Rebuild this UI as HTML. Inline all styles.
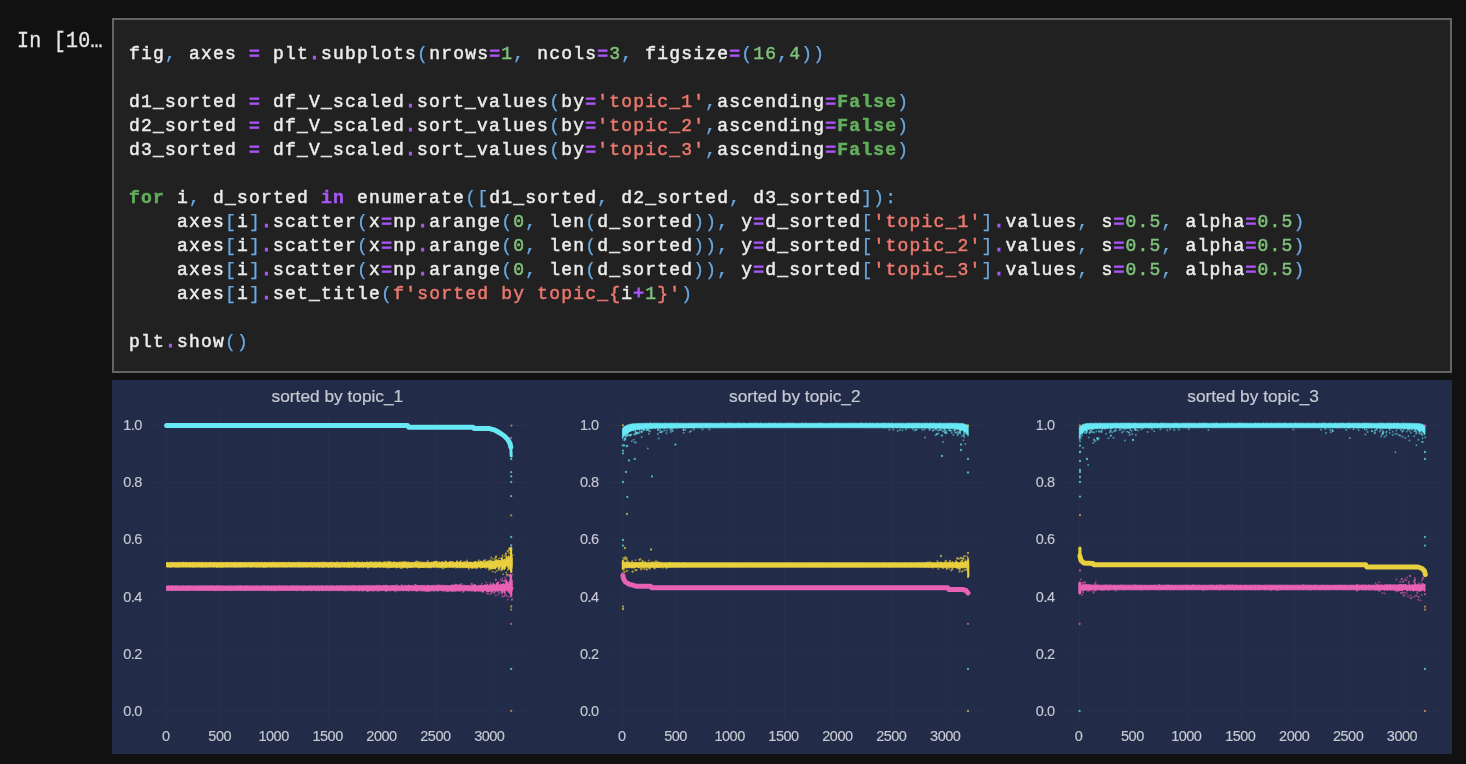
<!DOCTYPE html>
<html><head><meta charset="utf-8">
<style>
html,body{margin:0;padding:0;}
body{width:1466px;height:764px;overflow:hidden;background:#111111;position:relative;}
.prompt{position:absolute;left:17px;top:30px;font:20px/24px "Liberation Mono",monospace;color:#e6e6e6;white-space:pre;transform:scaleY(1.12);transform-origin:0 17.3px;letter-spacing:0.25px;-webkit-text-stroke:0.3px currentColor;will-change:transform;}
.box{position:absolute;left:112px;top:18px;width:1336px;height:351px;border:2px solid #646464;background:#212121;}
.code{position:absolute;left:15px;top:22px;font:18px/24px "Liberation Mono",monospace;letter-spacing:1.2px;color:#ececec;white-space:pre;-webkit-text-stroke:0.5px currentColor;will-change:transform;}
.l{height:24px;}
i{font-style:normal;}
.o{color:#a855f7;-webkit-text-stroke:1px #a855f7;}
.p{color:#68abe6;-webkit-text-stroke:0.25px #68abe6;}
.n{color:#7fc27d;}
.s{color:#ec786e;}
.k{color:#62ad5e;font-weight:bold;}
.ko{color:#a855f7;font-weight:bold;}
.plot{position:absolute;left:112px;top:380px;width:1340px;height:374px;background:#222b47;will-change:transform;}
.plot svg{position:absolute;left:0;top:0;}
</style></head><body>
<div class="prompt">In [10…</div>
<div class="box"><div class="code"><div class="l">fig<i class="p">,</i> axes <i class="o">=</i> plt<i class="o">.</i>subplots<i class="p">(</i>nrows<i class="o">=</i><i class="n">1</i><i class="p">,</i> ncols<i class="o">=</i><i class="n">3</i><i class="p">,</i> figsize<i class="o">=</i><i class="p">(</i><i class="n">16</i><i class="p">,</i><i class="n">4</i><i class="p">)</i><i class="p">)</i></div><div class="l">&#8203;</div><div class="l">d1_sorted <i class="o">=</i> df_V_scaled<i class="o">.</i>sort_values<i class="p">(</i>by<i class="o">=</i><i class="s">&#x27;topic_1&#x27;</i><i class="p">,</i>ascending<i class="o">=</i><i class="k">False</i><i class="p">)</i></div><div class="l">d2_sorted <i class="o">=</i> df_V_scaled<i class="o">.</i>sort_values<i class="p">(</i>by<i class="o">=</i><i class="s">&#x27;topic_2&#x27;</i><i class="p">,</i>ascending<i class="o">=</i><i class="k">False</i><i class="p">)</i></div><div class="l">d3_sorted <i class="o">=</i> df_V_scaled<i class="o">.</i>sort_values<i class="p">(</i>by<i class="o">=</i><i class="s">&#x27;topic_3&#x27;</i><i class="p">,</i>ascending<i class="o">=</i><i class="k">False</i><i class="p">)</i></div><div class="l">&#8203;</div><div class="l"><i class="k">for</i> i<i class="p">,</i> d_sorted <i class="ko">in</i> enumerate<i class="p">(</i><i class="p">[</i>d1_sorted<i class="p">,</i> d2_sorted<i class="p">,</i> d3_sorted<i class="p">]</i><i class="p">)</i><i class="p">:</i></div><div class="l">    axes<i class="p">[</i>i<i class="p">]</i><i class="o">.</i>scatter<i class="p">(</i>x<i class="o">=</i>np<i class="o">.</i>arange<i class="p">(</i><i class="n">0</i><i class="p">,</i> len<i class="p">(</i>d_sorted<i class="p">)</i><i class="p">)</i><i class="p">,</i> y<i class="o">=</i>d_sorted<i class="p">[</i><i class="s">&#x27;topic_1&#x27;</i><i class="p">]</i><i class="o">.</i>values<i class="p">,</i> s<i class="o">=</i><i class="n">0.5</i><i class="p">,</i> alpha<i class="o">=</i><i class="n">0.5</i><i class="p">)</i></div><div class="l">    axes<i class="p">[</i>i<i class="p">]</i><i class="o">.</i>scatter<i class="p">(</i>x<i class="o">=</i>np<i class="o">.</i>arange<i class="p">(</i><i class="n">0</i><i class="p">,</i> len<i class="p">(</i>d_sorted<i class="p">)</i><i class="p">)</i><i class="p">,</i> y<i class="o">=</i>d_sorted<i class="p">[</i><i class="s">&#x27;topic_2&#x27;</i><i class="p">]</i><i class="o">.</i>values<i class="p">,</i> s<i class="o">=</i><i class="n">0.5</i><i class="p">,</i> alpha<i class="o">=</i><i class="n">0.5</i><i class="p">)</i></div><div class="l">    axes<i class="p">[</i>i<i class="p">]</i><i class="o">.</i>scatter<i class="p">(</i>x<i class="o">=</i>np<i class="o">.</i>arange<i class="p">(</i><i class="n">0</i><i class="p">,</i> len<i class="p">(</i>d_sorted<i class="p">)</i><i class="p">)</i><i class="p">,</i> y<i class="o">=</i>d_sorted<i class="p">[</i><i class="s">&#x27;topic_3&#x27;</i><i class="p">]</i><i class="o">.</i>values<i class="p">,</i> s<i class="o">=</i><i class="n">0.5</i><i class="p">,</i> alpha<i class="o">=</i><i class="n">0.5</i><i class="p">)</i></div><div class="l">    axes<i class="p">[</i>i<i class="p">]</i><i class="o">.</i>set_title<i class="p">(</i><i class="s">f&#x27;sorted by topic_{</i>i<i class="o">+</i><i class="n">1</i><i class="s">}&#x27;</i><i class="p">)</i></div><div class="l">&#8203;</div><div class="l">plt<i class="o">.</i>show<i class="p">(</i><i class="p">)</i></div></div></div>
<div class="plot"><svg width="1340" height="374" viewBox="112 380 1340 374"><path d="M166.6 411.2V725.4M220.5 411.2V725.4M274.4 411.2V725.4M328.4 411.2V725.4M382.3 411.2V725.4M436.2 411.2V725.4M490.1 411.2V725.4M149.3 711.1H530.0M149.3 654.0H530.0M149.3 596.9H530.0M149.3 539.7H530.0M149.3 482.6H530.0M149.3 425.5H530.0M622.5 411.2V725.4M676.4 411.2V725.4M730.4 411.2V725.4M784.3 411.2V725.4M838.2 411.2V725.4M892.1 411.2V725.4M946.0 411.2V725.4M605.2 711.1H985.9M605.2 654.0H985.9M605.2 596.9H985.9M605.2 539.7H985.9M605.2 482.6H985.9M605.2 425.5H985.9M1079.3 411.2V725.4M1133.2 411.2V725.4M1187.1 411.2V725.4M1241.1 411.2V725.4M1295.0 411.2V725.4M1348.9 411.2V725.4M1402.8 411.2V725.4M1062.0 711.1H1442.7M1062.0 654.0H1442.7M1062.0 596.9H1442.7M1062.0 539.7H1442.7M1062.0 482.6H1442.7M1062.0 425.5H1442.7" stroke="#29314f" stroke-width="1" fill="none"/><g font-family="Liberation Sans" font-size="14.5" letter-spacing="-0.5" fill="#c6c9d3" stroke="#c6c9d3" stroke-width="0.15"><text x="141.8" y="715.7" text-anchor="end">0.0</text><text x="141.8" y="658.6" text-anchor="end">0.2</text><text x="141.8" y="601.5" text-anchor="end">0.4</text><text x="141.8" y="544.3" text-anchor="end">0.6</text><text x="141.8" y="487.2" text-anchor="end">0.8</text><text x="141.8" y="430.1" text-anchor="end">1.0</text><text x="165.8" y="740.8" text-anchor="middle">0</text><text x="219.7" y="740.8" text-anchor="middle">500</text><text x="273.6" y="740.8" text-anchor="middle">1000</text><text x="327.6" y="740.8" text-anchor="middle">1500</text><text x="381.5" y="740.8" text-anchor="middle">2000</text><text x="435.4" y="740.8" text-anchor="middle">2500</text><text x="489.3" y="740.8" text-anchor="middle">3000</text><text x="598.7" y="715.7" text-anchor="end">0.0</text><text x="598.7" y="658.6" text-anchor="end">0.2</text><text x="598.7" y="601.5" text-anchor="end">0.4</text><text x="598.7" y="544.3" text-anchor="end">0.6</text><text x="598.7" y="487.2" text-anchor="end">0.8</text><text x="598.7" y="430.1" text-anchor="end">1.0</text><text x="621.7" y="740.8" text-anchor="middle">0</text><text x="675.6" y="740.8" text-anchor="middle">500</text><text x="729.6" y="740.8" text-anchor="middle">1000</text><text x="783.5" y="740.8" text-anchor="middle">1500</text><text x="837.4" y="740.8" text-anchor="middle">2000</text><text x="891.3" y="740.8" text-anchor="middle">2500</text><text x="945.2" y="740.8" text-anchor="middle">3000</text><text x="1054.5" y="715.7" text-anchor="end">0.0</text><text x="1054.5" y="658.6" text-anchor="end">0.2</text><text x="1054.5" y="601.5" text-anchor="end">0.4</text><text x="1054.5" y="544.3" text-anchor="end">0.6</text><text x="1054.5" y="487.2" text-anchor="end">0.8</text><text x="1054.5" y="430.1" text-anchor="end">1.0</text><text x="1078.5" y="740.8" text-anchor="middle">0</text><text x="1132.4" y="740.8" text-anchor="middle">500</text><text x="1186.3" y="740.8" text-anchor="middle">1000</text><text x="1240.3" y="740.8" text-anchor="middle">1500</text><text x="1294.2" y="740.8" text-anchor="middle">2000</text><text x="1348.1" y="740.8" text-anchor="middle">2500</text><text x="1402.0" y="740.8" text-anchor="middle">3000</text></g><g font-family="Liberation Sans" font-size="17.3" fill="#c6c9d3" stroke="#c6c9d3" stroke-width="0.2"><text x="337.4" y="401.6" text-anchor="middle">sorted by topic_1</text><text x="794.8" y="401.6" text-anchor="middle">sorted by topic_2</text><text x="1253.1" y="401.6" text-anchor="middle">sorted by topic_3</text></g><path d="M166.6 425.6 L407.6 425.6 L408.6 427.2 L473.0 427.2 L474.0 428.4 L489.5 428.6 L495.0 430.2 L499.6 432.8 L504.0 435.8 L507.8 439.5 L510.0 443.5 L510.8 447.0" stroke="#68e8f4" stroke-width="5.0" fill="none" stroke-linecap="round" stroke-linejoin="round" opacity="1"/><path d="M510.8 447.0 L511.2 456.0" stroke="#68e8f4" stroke-width="3" fill="none" stroke-linecap="round" stroke-linejoin="round" opacity="1"/><circle cx="511.2" cy="459.0" r="1.15" fill="#68e8f4" opacity="0.72"/><circle cx="511.2" cy="472.2" r="1.15" fill="#68e8f4" opacity="0.72"/><circle cx="511.2" cy="476.4" r="1.15" fill="#68e8f4" opacity="0.72"/><circle cx="511.2" cy="482.1" r="1.15" fill="#68e8f4" opacity="0.72"/><circle cx="511.2" cy="496.2" r="1.15" fill="#68e8f4" opacity="0.72"/><circle cx="511.2" cy="537.0" r="1.15" fill="#68e8f4" opacity="0.72"/><circle cx="511.2" cy="545.5" r="1.15" fill="#68e8f4" opacity="0.72"/><circle cx="511.2" cy="669.0" r="1.15" fill="#68e8f4" opacity="0.72"/><circle cx="511.5" cy="425.6" r="1.15" fill="#e6a85a" opacity="0.72"/><circle cx="511.2" cy="515.4" r="1.15" fill="#e6a85a" opacity="0.72"/><circle cx="511.2" cy="606.5" r="1.15" fill="#e6a85a" opacity="0.72"/><circle cx="511.2" cy="609.6" r="1.15" fill="#e6a85a" opacity="0.72"/><circle cx="511.2" cy="710.8" r="1.15" fill="#e6a85a" opacity="0.72"/><circle cx="511.2" cy="623.9" r="1.15" fill="#e862b4" opacity="0.72"/><circle cx="511.2" cy="438.0" r="1.15" fill="#e862b4" opacity="0.72"/><path d="M166.6 562.5 L167.2 562.3 L167.9 562.5 L168.5 562.6 L169.2 562.5 L169.8 562.6 L170.5 562.6 L171.1 562.4 L171.8 562.3 L172.4 562.4 L173.1 562.6 L173.7 562.5 L174.4 562.6 L175.0 562.6 L175.7 562.5 L176.3 562.5 L177.0 562.5 L177.6 562.5 L178.2 562.3 L178.9 562.4 L179.5 562.5 L180.2 562.6 L180.8 562.4 L181.5 562.4 L182.1 562.3 L182.8 562.6 L183.4 562.3 L184.1 562.3 L184.7 562.6 L185.4 562.4 L186.0 562.6 L186.7 562.3 L187.3 562.6 L188.0 562.6 L188.6 562.4 L189.2 562.5 L189.9 562.6 L190.5 562.6 L191.2 562.6 L191.8 562.6 L192.5 562.3 L193.1 562.5 L193.8 562.6 L194.4 562.4 L195.1 562.6 L195.7 562.6 L196.4 562.4 L197.0 562.6 L197.7 562.6 L198.3 562.6 L199.0 562.5 L199.6 562.3 L200.2 562.5 L200.9 562.6 L201.5 562.3 L202.2 562.6 L202.8 562.4 L203.5 562.6 L204.1 562.4 L204.8 562.5 L205.4 562.6 L206.1 562.6 L206.7 562.6 L207.4 562.5 L208.0 562.6 L208.7 562.6 L209.3 562.5 L210.0 562.5 L210.6 562.3 L211.2 562.6 L211.9 562.5 L212.5 562.6 L213.2 562.5 L213.8 562.5 L214.5 562.3 L215.1 562.4 L215.8 562.6 L216.4 562.6 L217.1 562.4 L217.7 562.6 L218.4 562.5 L219.0 562.5 L219.7 562.6 L220.3 562.4 L221.0 562.4 L221.6 562.4 L222.3 562.5 L222.9 562.3 L223.5 562.5 L224.2 562.4 L224.8 562.5 L225.5 562.5 L226.1 562.6 L226.8 562.3 L227.4 562.4 L228.1 562.4 L228.7 562.5 L229.4 562.6 L230.0 562.6 L230.7 562.5 L231.3 562.4 L232.0 562.5 L232.6 562.6 L233.3 562.6 L233.9 562.6 L234.5 562.3 L235.2 562.5 L235.8 562.5 L236.5 562.6 L237.1 562.4 L237.8 562.4 L238.4 562.5 L239.1 562.6 L239.7 562.4 L240.4 562.4 L241.0 562.6 L241.7 562.5 L242.3 562.6 L243.0 562.5 L243.6 562.5 L244.3 562.3 L244.9 562.6 L245.5 562.4 L246.2 562.4 L246.8 562.5 L247.5 562.6 L248.1 562.5 L248.8 562.4 L249.4 562.6 L250.1 562.5 L250.7 562.4 L251.4 562.4 L252.0 562.4 L252.7 562.5 L253.3 562.6 L254.0 562.4 L254.6 562.6 L255.3 562.4 L255.9 562.5 L256.5 562.5 L257.2 562.3 L257.8 562.3 L258.5 562.6 L259.1 562.5 L259.8 562.5 L260.4 562.4 L261.1 562.3 L261.7 562.4 L262.4 562.4 L263.0 562.4 L263.7 562.6 L264.3 562.3 L265.0 562.5 L265.6 562.5 L266.3 562.4 L266.9 562.6 L267.5 562.5 L268.2 562.5 L268.8 562.4 L269.5 562.4 L270.1 562.5 L270.8 562.6 L271.4 562.5 L272.1 562.4 L272.7 562.3 L273.4 562.3 L274.0 562.6 L274.7 562.6 L275.3 562.4 L276.0 562.4 L276.6 562.5 L277.3 562.4 L277.9 562.6 L278.5 562.3 L279.2 562.5 L279.8 562.5 L280.5 562.5 L281.1 562.3 L281.8 562.5 L282.4 562.5 L283.1 562.4 L283.7 562.5 L284.4 562.3 L285.0 562.6 L285.7 562.6 L286.3 562.4 L287.0 562.5 L287.6 562.6 L288.3 562.3 L288.9 562.4 L289.5 562.6 L290.2 562.4 L290.8 562.5 L291.5 562.6 L292.1 562.6 L292.8 562.6 L293.4 562.5 L294.1 562.5 L294.7 562.5 L295.4 562.6 L296.0 562.4 L296.7 562.4 L297.3 562.4 L298.0 562.4 L298.6 562.3 L299.3 562.5 L299.9 562.6 L300.5 562.3 L301.2 562.6 L301.8 562.6 L302.5 562.4 L303.1 562.4 L303.8 562.5 L304.4 562.6 L305.1 562.4 L305.7 562.3 L306.4 562.5 L307.0 562.5 L307.7 562.6 L308.3 562.6 L309.0 562.5 L309.6 562.5 L310.3 562.6 L310.9 562.3 L311.6 562.3 L312.2 562.6 L312.8 562.5 L313.5 562.5 L314.1 562.5 L314.8 562.4 L315.4 562.4 L316.1 562.6 L316.7 562.4 L317.4 562.6 L318.0 562.5 L318.7 562.3 L319.3 562.4 L320.0 562.4 L320.6 562.4 L321.3 562.2 L321.9 562.5 L322.6 562.3 L323.2 562.3 L323.8 562.3 L324.5 562.4 L325.1 562.3 L325.8 562.3 L326.4 562.5 L327.1 562.6 L327.7 562.4 L328.4 562.6 L329.0 562.4 L329.7 562.4 L330.3 562.4 L331.0 562.2 L331.6 562.3 L332.3 562.2 L332.9 562.4 L333.6 562.5 L334.2 562.6 L334.8 562.5 L335.5 562.5 L336.1 562.4 L336.8 562.2 L337.4 562.1 L338.1 562.3 L338.7 562.4 L339.4 562.6 L340.0 562.6 L340.7 562.6 L341.3 562.4 L342.0 562.2 L342.6 562.4 L343.3 562.5 L343.9 562.3 L344.6 562.5 L345.2 562.5 L345.8 562.5 L346.5 562.6 L347.1 562.5 L347.8 562.3 L348.4 562.1 L349.1 562.6 L349.7 562.5 L350.4 562.1 L351.0 562.4 L351.7 562.3 L352.3 562.1 L353.0 562.3 L353.6 562.3 L354.3 562.5 L354.9 562.4 L355.6 562.4 L356.2 562.4 L356.8 562.3 L357.5 562.2 L358.1 562.0 L358.8 562.2 L359.4 562.6 L360.1 562.2 L360.7 562.5 L361.4 562.3 L362.0 562.3 L362.7 562.2 L363.3 562.5 L364.0 562.1 L364.6 562.6 L365.3 562.5 L365.9 562.3 L366.6 562.3 L367.2 562.6 L367.8 562.3 L368.5 562.5 L369.1 562.5 L369.8 562.2 L370.4 562.6 L371.1 562.1 L371.7 562.2 L372.4 562.4 L373.0 562.1 L373.7 562.2 L374.3 562.5 L375.0 562.2 L375.6 562.4 L376.3 562.6 L376.9 562.6 L377.6 562.3 L378.2 562.2 L378.8 562.1 L379.5 562.5 L380.1 562.6 L380.8 562.2 L381.4 562.5 L382.1 562.4 L382.7 562.4 L383.4 562.2 L384.0 561.9 L384.7 562.0 L385.3 562.1 L386.0 562.5 L386.6 561.9 L387.3 562.5 L387.9 562.4 L388.6 562.4 L389.2 562.5 L389.8 562.0 L390.5 562.0 L391.1 562.5 L391.8 561.9 L392.4 562.6 L393.1 562.3 L393.7 561.8 L394.4 562.0 L395.0 562.3 L395.7 562.6 L396.3 562.1 L397.0 562.6 L397.6 562.6 L398.3 562.2 L398.9 562.5 L399.6 562.3 L400.2 562.4 L400.9 561.8 L401.5 562.3 L402.1 562.1 L402.8 561.8 L403.4 561.9 L404.1 561.9 L404.7 561.9 L405.4 561.8 L406.0 562.3 L406.7 562.0 L407.3 562.4 L408.0 562.0 L408.6 562.4 L409.3 562.5 L409.9 562.5 L410.6 562.6 L411.2 562.6 L411.9 562.0 L412.5 562.6 L413.1 562.2 L413.8 562.6 L414.4 562.5 L415.1 562.5 L415.7 562.2 L416.4 562.5 L417.0 562.5 L417.7 562.4 L418.3 561.9 L419.0 562.5 L419.6 561.7 L420.3 562.2 L420.9 562.3 L421.6 562.6 L422.2 561.9 L422.9 562.2 L423.5 562.5 L424.1 562.1 L424.8 562.6 L425.4 562.4 L426.1 562.0 L426.7 562.5 L427.4 562.4 L428.0 561.8 L428.7 562.1 L429.3 562.5 L430.0 562.5 L430.6 562.6 L431.3 561.8 L431.9 562.6 L432.6 561.9 L433.2 562.2 L433.9 561.6 L434.5 561.7 L435.1 561.8 L435.8 561.6 L436.4 561.8 L437.1 562.2 L437.7 562.5 L438.4 562.4 L439.0 562.6 L439.7 562.2 L440.3 562.4 L441.0 562.6 L441.6 562.2 L442.3 561.7 L442.9 562.6 L443.6 561.9 L444.2 562.1 L444.9 562.6 L445.5 561.8 L446.1 562.0 L446.8 562.3 L447.4 562.4 L448.1 562.3 L448.7 562.4 L449.4 561.8 L450.0 561.5 L450.7 561.9 L451.3 561.7 L452.0 562.5 L452.6 561.9 L453.3 562.5 L453.9 561.7 L454.6 562.6 L455.2 562.5 L455.9 562.3 L456.5 561.5 L457.1 562.1 L457.8 561.7 L458.4 562.3 L459.1 562.3 L459.7 562.3 L460.4 561.3 L461.0 561.9 L461.7 562.6 L462.3 562.3 L463.0 562.6 L463.6 562.1 L464.3 561.6 L464.9 562.5 L465.6 561.5 L466.2 562.3 L466.9 562.5 L467.5 561.3 L468.1 561.8 L468.8 562.5 L469.4 561.9 L470.1 562.6 L470.7 562.0 L471.4 562.3 L472.0 562.3 L472.7 562.5 L473.3 562.5 L474.0 562.0 L474.6 562.0 L475.3 561.4 L475.9 561.6 L476.6 562.5 L477.2 562.4 L477.9 562.4 L478.5 561.5 L479.1 562.0 L479.8 562.6 L480.4 561.2 L481.1 561.8 L481.7 561.8 L482.4 562.2 L483.0 561.4 L483.7 562.4 L484.3 562.5 L485.0 561.8 L485.6 561.9 L486.3 561.8 L486.9 561.6 L487.6 561.4 L488.2 560.6 L488.9 561.9 L489.5 561.4 L490.1 561.0 L490.8 561.7 L491.4 560.5 L492.1 561.7 L492.7 561.1 L493.4 561.1 L494.0 561.3 L494.7 561.5 L495.3 560.0 L496.0 559.9 L496.6 559.6 L497.3 560.2 L497.9 561.6 L498.6 560.3 L499.2 561.6 L499.9 560.0 L500.5 560.8 L501.2 560.9 L501.8 557.5 L502.4 558.8 L503.1 559.9 L503.7 560.6 L504.4 558.9 L505.0 560.8 L505.7 560.7 L506.3 555.9 L507.0 560.1 L507.6 559.6 L508.3 555.7 L508.9 559.0 L509.6 557.7 L510.2 560.4 L510.9 559.2 L511.5 554.3 L512.2 558.0 L512.2 565.2 L511.5 571.0 L510.9 567.0 L510.2 570.1 L509.6 564.9 L508.9 566.2 L508.3 569.3 L507.6 565.2 L507.0 566.0 L506.3 565.2 L505.7 567.3 L505.0 568.9 L504.4 569.7 L503.7 568.6 L503.1 568.9 L502.4 569.3 L501.8 569.9 L501.2 565.9 L500.5 566.9 L499.9 566.4 L499.2 568.3 L498.6 567.0 L497.9 567.2 L497.3 566.3 L496.6 566.9 L496.0 567.9 L495.3 569.2 L494.7 566.5 L494.0 569.2 L493.4 567.7 L492.7 569.1 L492.1 567.6 L491.4 568.9 L490.8 569.4 L490.1 568.6 L489.5 568.3 L488.9 567.6 L488.2 568.0 L487.6 567.1 L486.9 567.0 L486.3 567.4 L485.6 567.3 L485.0 567.1 L484.3 567.4 L483.7 567.5 L483.0 567.0 L482.4 567.7 L481.7 568.0 L481.1 567.3 L480.4 568.3 L479.8 567.1 L479.1 567.0 L478.5 567.1 L477.9 567.6 L477.2 568.2 L476.6 568.1 L475.9 567.7 L475.3 568.4 L474.6 567.2 L474.0 567.6 L473.3 568.2 L472.7 568.3 L472.0 567.4 L471.4 568.2 L470.7 567.8 L470.1 567.2 L469.4 567.1 L468.8 568.2 L468.1 568.0 L467.5 567.5 L466.9 567.8 L466.2 567.5 L465.6 567.5 L464.9 567.9 L464.3 567.6 L463.6 567.9 L463.0 567.3 L462.3 567.7 L461.7 567.2 L461.0 567.6 L460.4 567.9 L459.7 567.8 L459.1 567.0 L458.4 567.2 L457.8 567.9 L457.1 567.7 L456.5 567.4 L455.9 567.0 L455.2 567.1 L454.6 567.1 L453.9 567.6 L453.3 567.3 L452.6 567.7 L452.0 567.0 L451.3 567.0 L450.7 567.2 L450.0 567.5 L449.4 567.2 L448.7 567.1 L448.1 567.6 L447.4 567.2 L446.8 567.5 L446.1 567.2 L445.5 567.1 L444.9 568.2 L444.2 567.4 L443.6 567.1 L442.9 567.3 L442.3 567.6 L441.6 568.1 L441.0 567.3 L440.3 567.6 L439.7 567.7 L439.0 567.2 L438.4 567.2 L437.7 567.8 L437.1 567.4 L436.4 567.1 L435.8 567.0 L435.1 567.3 L434.5 567.2 L433.9 567.5 L433.2 567.3 L432.6 567.0 L431.9 567.2 L431.3 567.8 L430.6 567.8 L430.0 567.7 L429.3 567.4 L428.7 568.0 L428.0 567.4 L427.4 567.1 L426.7 567.1 L426.1 567.5 L425.4 567.7 L424.8 567.3 L424.1 567.1 L423.5 568.0 L422.9 567.4 L422.2 567.2 L421.6 567.9 L420.9 567.1 L420.3 567.9 L419.6 567.2 L419.0 567.8 L418.3 567.3 L417.7 567.4 L417.0 567.6 L416.4 567.1 L415.7 567.1 L415.1 567.6 L414.4 567.1 L413.8 567.0 L413.1 567.8 L412.5 567.3 L411.9 567.1 L411.2 567.5 L410.6 567.2 L409.9 567.9 L409.3 567.3 L408.6 567.1 L408.0 567.9 L407.3 567.1 L406.7 567.2 L406.0 567.5 L405.4 567.5 L404.7 567.7 L404.1 567.6 L403.4 567.5 L402.8 567.2 L402.1 567.5 L401.5 567.3 L400.9 567.5 L400.2 567.2 L399.6 567.6 L398.9 567.6 L398.3 567.1 L397.6 567.5 L397.0 567.4 L396.3 567.7 L395.7 567.0 L395.0 567.6 L394.4 567.0 L393.7 567.4 L393.1 567.3 L392.4 567.3 L391.8 567.1 L391.1 567.5 L390.5 567.3 L389.8 567.3 L389.2 567.3 L388.6 567.2 L387.9 567.2 L387.3 567.2 L386.6 567.6 L386.0 567.2 L385.3 567.1 L384.7 567.2 L384.0 567.7 L383.4 567.3 L382.7 567.0 L382.1 567.4 L381.4 567.0 L380.8 567.4 L380.1 567.1 L379.5 567.4 L378.8 567.0 L378.2 567.1 L377.6 567.2 L376.9 567.0 L376.3 567.6 L375.6 567.2 L375.0 567.6 L374.3 567.3 L373.7 567.7 L373.0 567.1 L372.4 567.1 L371.7 567.1 L371.1 567.3 L370.4 567.0 L369.8 567.5 L369.1 567.1 L368.5 567.2 L367.8 567.3 L367.2 567.4 L366.6 567.0 L365.9 567.0 L365.3 567.2 L364.6 567.0 L364.0 567.5 L363.3 567.6 L362.7 567.1 L362.0 567.3 L361.4 567.3 L360.7 567.1 L360.1 567.3 L359.4 567.5 L358.8 567.1 L358.1 567.5 L357.5 567.2 L356.8 567.2 L356.2 567.1 L355.6 567.3 L354.9 567.0 L354.3 567.0 L353.6 567.2 L353.0 567.0 L352.3 567.4 L351.7 567.2 L351.0 567.5 L350.4 567.1 L349.7 567.2 L349.1 567.5 L348.4 567.5 L347.8 567.0 L347.1 567.4 L346.5 567.3 L345.8 567.0 L345.2 567.0 L344.6 567.3 L343.9 567.2 L343.3 567.1 L342.6 567.2 L342.0 567.1 L341.3 567.0 L340.7 567.2 L340.0 567.2 L339.4 567.4 L338.7 567.3 L338.1 567.0 L337.4 567.2 L336.8 567.2 L336.1 567.2 L335.5 567.4 L334.8 567.0 L334.2 567.0 L333.6 567.1 L332.9 567.3 L332.3 567.0 L331.6 567.3 L331.0 567.2 L330.3 567.1 L329.7 567.2 L329.0 567.1 L328.4 567.4 L327.7 567.2 L327.1 567.1 L326.4 567.1 L325.8 567.0 L325.1 567.1 L324.5 567.3 L323.8 567.3 L323.2 567.1 L322.6 567.3 L321.9 567.3 L321.3 567.3 L320.6 567.1 L320.0 567.1 L319.3 567.3 L318.7 567.3 L318.0 567.0 L317.4 567.0 L316.7 567.1 L316.1 567.1 L315.4 567.3 L314.8 567.0 L314.1 567.1 L313.5 567.1 L312.8 567.2 L312.2 567.3 L311.6 567.0 L310.9 567.3 L310.3 567.0 L309.6 567.0 L309.0 567.1 L308.3 567.0 L307.7 567.0 L307.0 567.2 L306.4 567.2 L305.7 567.0 L305.1 567.3 L304.4 567.0 L303.8 567.2 L303.1 567.0 L302.5 567.1 L301.8 567.0 L301.2 567.2 L300.5 567.0 L299.9 567.3 L299.3 567.3 L298.6 567.1 L298.0 567.2 L297.3 567.0 L296.7 567.1 L296.0 567.1 L295.4 567.2 L294.7 567.0 L294.1 567.1 L293.4 567.1 L292.8 567.0 L292.1 567.1 L291.5 567.2 L290.8 567.1 L290.2 567.1 L289.5 567.0 L288.9 567.0 L288.3 567.0 L287.6 567.1 L287.0 567.1 L286.3 567.3 L285.7 567.1 L285.0 567.1 L284.4 567.3 L283.7 567.1 L283.1 567.0 L282.4 567.1 L281.8 567.2 L281.1 567.1 L280.5 567.0 L279.8 567.1 L279.2 567.0 L278.5 567.1 L277.9 567.2 L277.3 567.3 L276.6 567.1 L276.0 567.1 L275.3 567.1 L274.7 567.2 L274.0 567.1 L273.4 567.0 L272.7 567.1 L272.1 567.2 L271.4 567.2 L270.8 567.0 L270.1 567.2 L269.5 567.0 L268.8 567.0 L268.2 567.0 L267.5 567.2 L266.9 567.1 L266.3 567.1 L265.6 567.3 L265.0 567.2 L264.3 567.3 L263.7 567.3 L263.0 567.2 L262.4 567.2 L261.7 567.0 L261.1 567.1 L260.4 567.2 L259.8 567.1 L259.1 567.3 L258.5 567.1 L257.8 567.2 L257.2 567.0 L256.5 567.2 L255.9 567.2 L255.3 567.1 L254.6 567.1 L254.0 567.0 L253.3 567.1 L252.7 567.0 L252.0 567.0 L251.4 567.3 L250.7 567.2 L250.1 567.1 L249.4 567.0 L248.8 567.0 L248.1 567.0 L247.5 567.0 L246.8 567.2 L246.2 567.1 L245.5 567.0 L244.9 567.0 L244.3 567.1 L243.6 567.2 L243.0 567.1 L242.3 567.1 L241.7 567.0 L241.0 567.0 L240.4 567.3 L239.7 567.2 L239.1 567.1 L238.4 567.1 L237.8 567.1 L237.1 567.3 L236.5 567.1 L235.8 567.2 L235.2 567.3 L234.5 567.2 L233.9 567.0 L233.3 567.2 L232.6 567.0 L232.0 567.3 L231.3 567.1 L230.7 567.0 L230.0 567.1 L229.4 567.2 L228.7 567.2 L228.1 567.1 L227.4 567.1 L226.8 567.2 L226.1 567.2 L225.5 567.1 L224.8 567.1 L224.2 567.1 L223.5 567.2 L222.9 567.2 L222.3 567.2 L221.6 567.3 L221.0 567.2 L220.3 567.3 L219.7 567.1 L219.0 567.3 L218.4 567.2 L217.7 567.2 L217.1 567.3 L216.4 567.3 L215.8 567.0 L215.1 567.1 L214.5 567.2 L213.8 567.3 L213.2 567.0 L212.5 567.1 L211.9 567.0 L211.2 567.0 L210.6 567.0 L210.0 567.0 L209.3 567.2 L208.7 567.0 L208.0 567.2 L207.4 567.0 L206.7 567.2 L206.1 567.2 L205.4 567.3 L204.8 567.0 L204.1 567.1 L203.5 567.3 L202.8 567.3 L202.2 567.0 L201.5 567.2 L200.9 567.0 L200.2 567.2 L199.6 567.1 L199.0 567.1 L198.3 567.1 L197.7 567.1 L197.0 567.0 L196.4 567.1 L195.7 567.0 L195.1 567.3 L194.4 567.2 L193.8 567.1 L193.1 567.2 L192.5 567.2 L191.8 567.0 L191.2 567.1 L190.5 567.2 L189.9 567.2 L189.2 567.1 L188.6 567.0 L188.0 567.0 L187.3 567.0 L186.7 567.2 L186.0 567.1 L185.4 567.0 L184.7 567.1 L184.1 567.1 L183.4 567.1 L182.8 567.0 L182.1 567.2 L181.5 567.1 L180.8 567.1 L180.2 567.0 L179.5 567.0 L178.9 567.2 L178.2 567.3 L177.6 567.0 L177.0 567.2 L176.3 567.2 L175.7 567.2 L175.0 567.1 L174.4 567.0 L173.7 567.0 L173.1 567.0 L172.4 567.1 L171.8 567.3 L171.1 567.0 L170.5 567.2 L169.8 567.1 L169.2 567.2 L168.5 567.1 L167.9 567.1 L167.2 567.1 L166.6 567.1Z" fill="#ead03e" stroke="#ead03e" stroke-width="1" stroke-linejoin="round"/><circle cx="471.2" cy="566.6" r="1.0" fill="#ead03e" opacity="0.55"/><circle cx="388.1" cy="561.7" r="1.0" fill="#ead03e" opacity="0.55"/><circle cx="444.6" cy="567.0" r="1.0" fill="#ead03e" opacity="0.55"/><circle cx="495.9" cy="557.1" r="1.0" fill="#ead03e" opacity="0.55"/><circle cx="443.0" cy="568.6" r="1.0" fill="#ead03e" opacity="0.55"/><circle cx="370.3" cy="562.1" r="1.0" fill="#ead03e" opacity="0.55"/><circle cx="438.9" cy="562.3" r="1.0" fill="#ead03e" opacity="0.55"/><circle cx="502.5" cy="569.8" r="1.0" fill="#ead03e" opacity="0.55"/><circle cx="507.9" cy="570.0" r="1.0" fill="#ead03e" opacity="0.55"/><circle cx="474.7" cy="562.1" r="1.0" fill="#ead03e" opacity="0.55"/><circle cx="511.3" cy="550.6" r="1.0" fill="#ead03e" opacity="0.55"/><circle cx="506.2" cy="561.1" r="1.0" fill="#ead03e" opacity="0.55"/><circle cx="391.5" cy="566.9" r="1.0" fill="#ead03e" opacity="0.55"/><circle cx="510.4" cy="549.4" r="1.0" fill="#ead03e" opacity="0.55"/><circle cx="480.5" cy="562.3" r="1.0" fill="#ead03e" opacity="0.55"/><circle cx="372.7" cy="562.8" r="1.0" fill="#ead03e" opacity="0.55"/><circle cx="385.5" cy="562.6" r="1.0" fill="#ead03e" opacity="0.55"/><circle cx="408.9" cy="562.5" r="1.0" fill="#ead03e" opacity="0.55"/><circle cx="481.4" cy="566.7" r="1.0" fill="#ead03e" opacity="0.55"/><circle cx="504.7" cy="559.6" r="1.0" fill="#ead03e" opacity="0.55"/><circle cx="451.9" cy="561.7" r="1.0" fill="#ead03e" opacity="0.55"/><circle cx="410.5" cy="567.2" r="1.0" fill="#ead03e" opacity="0.55"/><circle cx="502.5" cy="555.2" r="1.0" fill="#ead03e" opacity="0.55"/><circle cx="413.5" cy="563.2" r="1.0" fill="#ead03e" opacity="0.55"/><circle cx="506.1" cy="572.5" r="1.0" fill="#ead03e" opacity="0.55"/><circle cx="443.5" cy="562.9" r="1.0" fill="#ead03e" opacity="0.55"/><circle cx="489.7" cy="560.8" r="1.0" fill="#ead03e" opacity="0.55"/><circle cx="511.7" cy="548.6" r="1.0" fill="#ead03e" opacity="0.55"/><circle cx="510.7" cy="575.5" r="1.0" fill="#ead03e" opacity="0.55"/><circle cx="498.6" cy="569.7" r="1.0" fill="#ead03e" opacity="0.55"/><circle cx="495.5" cy="557.7" r="1.0" fill="#ead03e" opacity="0.55"/><circle cx="481.4" cy="561.4" r="1.0" fill="#ead03e" opacity="0.55"/><circle cx="496.2" cy="556.2" r="1.0" fill="#ead03e" opacity="0.55"/><circle cx="427.6" cy="561.1" r="1.0" fill="#ead03e" opacity="0.55"/><circle cx="499.8" cy="568.8" r="1.0" fill="#ead03e" opacity="0.55"/><circle cx="509.0" cy="553.0" r="1.0" fill="#ead03e" opacity="0.55"/><circle cx="489.0" cy="568.6" r="1.0" fill="#ead03e" opacity="0.55"/><circle cx="466.8" cy="560.4" r="1.0" fill="#ead03e" opacity="0.55"/><circle cx="510.5" cy="575.9" r="1.0" fill="#ead03e" opacity="0.55"/><circle cx="389.4" cy="567.2" r="1.0" fill="#ead03e" opacity="0.55"/><circle cx="478.7" cy="560.2" r="1.0" fill="#ead03e" opacity="0.55"/><circle cx="510.9" cy="550.8" r="1.0" fill="#ead03e" opacity="0.55"/><circle cx="492.5" cy="558.8" r="1.0" fill="#ead03e" opacity="0.55"/><circle cx="496.9" cy="570.8" r="1.0" fill="#ead03e" opacity="0.55"/><circle cx="476.9" cy="562.2" r="1.0" fill="#ead03e" opacity="0.55"/><circle cx="510.1" cy="575.2" r="1.0" fill="#ead03e" opacity="0.55"/><circle cx="509.1" cy="556.4" r="1.0" fill="#ead03e" opacity="0.55"/><circle cx="423.3" cy="566.7" r="1.0" fill="#ead03e" opacity="0.55"/><circle cx="435.2" cy="562.2" r="1.0" fill="#ead03e" opacity="0.55"/><circle cx="476.6" cy="567.4" r="1.0" fill="#ead03e" opacity="0.55"/><circle cx="461.0" cy="560.9" r="1.0" fill="#ead03e" opacity="0.55"/><circle cx="502.4" cy="568.9" r="1.0" fill="#ead03e" opacity="0.55"/><circle cx="460.0" cy="562.1" r="1.0" fill="#ead03e" opacity="0.55"/><circle cx="455.8" cy="567.7" r="1.0" fill="#ead03e" opacity="0.55"/><circle cx="501.0" cy="570.6" r="1.0" fill="#ead03e" opacity="0.55"/><circle cx="427.5" cy="563.1" r="1.0" fill="#ead03e" opacity="0.55"/><circle cx="401.9" cy="568.1" r="1.0" fill="#ead03e" opacity="0.55"/><circle cx="388.9" cy="562.0" r="1.0" fill="#ead03e" opacity="0.55"/><circle cx="367.3" cy="562.3" r="1.0" fill="#ead03e" opacity="0.55"/><circle cx="483.9" cy="560.4" r="1.0" fill="#ead03e" opacity="0.55"/><circle cx="420.9" cy="566.5" r="1.0" fill="#ead03e" opacity="0.55"/><circle cx="485.8" cy="568.0" r="1.0" fill="#ead03e" opacity="0.55"/><circle cx="457.1" cy="560.9" r="1.0" fill="#ead03e" opacity="0.55"/><circle cx="436.1" cy="561.5" r="1.0" fill="#ead03e" opacity="0.55"/><circle cx="506.0" cy="553.6" r="1.0" fill="#ead03e" opacity="0.55"/><circle cx="427.2" cy="567.0" r="1.0" fill="#ead03e" opacity="0.55"/><circle cx="445.5" cy="561.3" r="1.0" fill="#ead03e" opacity="0.55"/><circle cx="469.0" cy="568.8" r="1.0" fill="#ead03e" opacity="0.55"/><circle cx="495.3" cy="572.3" r="1.0" fill="#ead03e" opacity="0.55"/><circle cx="478.7" cy="561.5" r="1.0" fill="#ead03e" opacity="0.55"/><circle cx="508.8" cy="550.1" r="1.0" fill="#ead03e" opacity="0.55"/><circle cx="397.2" cy="566.4" r="1.0" fill="#ead03e" opacity="0.55"/><circle cx="506.7" cy="574.6" r="1.0" fill="#ead03e" opacity="0.55"/><circle cx="503.2" cy="560.5" r="1.0" fill="#ead03e" opacity="0.55"/><circle cx="490.2" cy="568.9" r="1.0" fill="#ead03e" opacity="0.55"/><circle cx="498.7" cy="566.3" r="1.0" fill="#ead03e" opacity="0.55"/><circle cx="497.9" cy="565.7" r="1.0" fill="#ead03e" opacity="0.55"/><circle cx="446.2" cy="566.5" r="1.0" fill="#ead03e" opacity="0.55"/><circle cx="471.8" cy="562.9" r="1.0" fill="#ead03e" opacity="0.55"/><circle cx="470.1" cy="562.6" r="1.0" fill="#ead03e" opacity="0.55"/><circle cx="509.2" cy="568.8" r="1.0" fill="#ead03e" opacity="0.55"/><circle cx="509.4" cy="565.9" r="1.0" fill="#ead03e" opacity="0.55"/><circle cx="449.8" cy="562.0" r="1.0" fill="#ead03e" opacity="0.55"/><circle cx="483.1" cy="567.0" r="1.0" fill="#ead03e" opacity="0.55"/><circle cx="488.7" cy="569.8" r="1.0" fill="#ead03e" opacity="0.55"/><circle cx="491.5" cy="562.1" r="1.0" fill="#ead03e" opacity="0.55"/><circle cx="494.4" cy="561.4" r="1.0" fill="#ead03e" opacity="0.55"/><circle cx="471.8" cy="567.8" r="1.0" fill="#ead03e" opacity="0.55"/><circle cx="494.5" cy="566.5" r="1.0" fill="#ead03e" opacity="0.55"/><circle cx="484.8" cy="561.3" r="1.0" fill="#ead03e" opacity="0.55"/><circle cx="389.6" cy="562.2" r="1.0" fill="#ead03e" opacity="0.55"/><circle cx="507.5" cy="565.9" r="1.0" fill="#ead03e" opacity="0.55"/><circle cx="492.7" cy="571.6" r="1.0" fill="#ead03e" opacity="0.55"/><circle cx="498.5" cy="568.9" r="1.0" fill="#ead03e" opacity="0.55"/><circle cx="511.8" cy="566.6" r="1.0" fill="#ead03e" opacity="0.55"/><circle cx="379.7" cy="562.2" r="1.0" fill="#ead03e" opacity="0.55"/><circle cx="507.0" cy="557.8" r="1.0" fill="#ead03e" opacity="0.55"/><circle cx="505.8" cy="553.5" r="1.0" fill="#ead03e" opacity="0.55"/><circle cx="510.5" cy="548.6" r="1.0" fill="#ead03e" opacity="0.55"/><circle cx="508.2" cy="551.5" r="1.0" fill="#ead03e" opacity="0.55"/><circle cx="509.6" cy="548.6" r="1.0" fill="#ead03e" opacity="0.55"/><circle cx="429.3" cy="567.0" r="1.0" fill="#ead03e" opacity="0.55"/><circle cx="407.3" cy="567.9" r="1.0" fill="#ead03e" opacity="0.55"/><circle cx="500.3" cy="558.3" r="1.0" fill="#ead03e" opacity="0.55"/><circle cx="415.3" cy="561.9" r="1.0" fill="#ead03e" opacity="0.55"/><circle cx="507.4" cy="551.0" r="1.0" fill="#ead03e" opacity="0.55"/><circle cx="502.7" cy="556.8" r="1.0" fill="#ead03e" opacity="0.55"/><circle cx="509.4" cy="548.2" r="1.0" fill="#ead03e" opacity="0.55"/><circle cx="429.1" cy="566.4" r="1.0" fill="#ead03e" opacity="0.55"/><circle cx="498.2" cy="567.5" r="1.0" fill="#ead03e" opacity="0.55"/><circle cx="490.3" cy="560.3" r="1.0" fill="#ead03e" opacity="0.55"/><circle cx="501.7" cy="567.7" r="1.0" fill="#ead03e" opacity="0.55"/><circle cx="400.0" cy="563.0" r="1.0" fill="#ead03e" opacity="0.55"/><circle cx="505.7" cy="554.5" r="1.0" fill="#ead03e" opacity="0.55"/><circle cx="506.8" cy="557.6" r="1.0" fill="#ead03e" opacity="0.55"/><circle cx="417.4" cy="561.5" r="1.0" fill="#ead03e" opacity="0.55"/><circle cx="416.6" cy="561.6" r="1.0" fill="#ead03e" opacity="0.55"/><circle cx="483.7" cy="562.9" r="1.0" fill="#ead03e" opacity="0.55"/><circle cx="491.9" cy="568.3" r="1.0" fill="#ead03e" opacity="0.55"/><circle cx="499.0" cy="568.7" r="1.0" fill="#ead03e" opacity="0.55"/><circle cx="436.8" cy="561.8" r="1.0" fill="#ead03e" opacity="0.55"/><circle cx="509.7" cy="565.0" r="1.0" fill="#ead03e" opacity="0.55"/><circle cx="388.7" cy="562.9" r="1.0" fill="#ead03e" opacity="0.55"/><circle cx="509.4" cy="557.4" r="1.0" fill="#ead03e" opacity="0.55"/><circle cx="512.6" cy="555.0" r="1.0" fill="#ead03e" opacity="0.55"/><circle cx="376.0" cy="561.9" r="1.0" fill="#ead03e" opacity="0.55"/><circle cx="436.6" cy="566.4" r="1.0" fill="#ead03e" opacity="0.55"/><circle cx="483.9" cy="560.9" r="1.0" fill="#ead03e" opacity="0.55"/><circle cx="441.7" cy="562.0" r="1.0" fill="#ead03e" opacity="0.55"/><circle cx="503.9" cy="566.1" r="1.0" fill="#ead03e" opacity="0.55"/><circle cx="418.9" cy="567.7" r="1.0" fill="#ead03e" opacity="0.55"/><circle cx="503.1" cy="574.2" r="1.0" fill="#ead03e" opacity="0.55"/><circle cx="446.2" cy="561.9" r="1.0" fill="#ead03e" opacity="0.55"/><circle cx="509.9" cy="576.1" r="1.0" fill="#ead03e" opacity="0.55"/><circle cx="452.2" cy="562.9" r="1.0" fill="#ead03e" opacity="0.55"/><circle cx="498.5" cy="558.8" r="1.0" fill="#ead03e" opacity="0.55"/><circle cx="472.5" cy="567.1" r="1.0" fill="#ead03e" opacity="0.55"/><circle cx="400.4" cy="563.0" r="1.0" fill="#ead03e" opacity="0.55"/><circle cx="367.9" cy="567.7" r="1.0" fill="#ead03e" opacity="0.55"/><circle cx="491.0" cy="562.5" r="1.0" fill="#ead03e" opacity="0.55"/><circle cx="491.2" cy="557.6" r="1.0" fill="#ead03e" opacity="0.55"/><circle cx="445.1" cy="562.5" r="1.0" fill="#ead03e" opacity="0.55"/><circle cx="450.3" cy="566.9" r="1.0" fill="#ead03e" opacity="0.55"/><circle cx="494.8" cy="559.0" r="1.0" fill="#ead03e" opacity="0.55"/><circle cx="472.3" cy="567.0" r="1.0" fill="#ead03e" opacity="0.55"/><circle cx="399.3" cy="562.7" r="1.0" fill="#ead03e" opacity="0.55"/><circle cx="509.8" cy="560.9" r="1.0" fill="#ead03e" opacity="0.55"/><circle cx="502.6" cy="567.2" r="1.0" fill="#ead03e" opacity="0.55"/><circle cx="456.6" cy="566.5" r="1.0" fill="#ead03e" opacity="0.55"/><circle cx="387.9" cy="567.8" r="1.0" fill="#ead03e" opacity="0.55"/><circle cx="400.8" cy="567.9" r="1.0" fill="#ead03e" opacity="0.55"/><circle cx="396.4" cy="567.5" r="1.0" fill="#ead03e" opacity="0.55"/><circle cx="507.6" cy="574.8" r="1.0" fill="#ead03e" opacity="0.55"/><circle cx="509.5" cy="549.4" r="1.0" fill="#ead03e" opacity="0.55"/><circle cx="510.0" cy="567.8" r="1.0" fill="#ead03e" opacity="0.55"/><circle cx="504.8" cy="555.9" r="1.0" fill="#ead03e" opacity="0.55"/><circle cx="509.0" cy="566.3" r="1.0" fill="#ead03e" opacity="0.55"/><circle cx="501.8" cy="567.6" r="1.0" fill="#ead03e" opacity="0.55"/><circle cx="485.5" cy="560.0" r="1.0" fill="#ead03e" opacity="0.55"/><circle cx="367.9" cy="566.4" r="1.0" fill="#ead03e" opacity="0.55"/><path d="M511.0 548.0 L511.2 572.0" stroke="#ead03e" stroke-width="2.2" fill="none" stroke-linecap="round" stroke-linejoin="round" opacity="1"/><path d="M166.6 586.0 L167.2 585.9 L167.9 585.8 L168.5 585.7 L169.2 585.9 L169.8 586.0 L170.5 586.0 L171.1 585.7 L171.8 586.0 L172.4 585.8 L173.1 585.8 L173.7 585.9 L174.4 586.0 L175.0 585.7 L175.7 585.8 L176.3 586.0 L177.0 585.7 L177.6 585.7 L178.2 586.0 L178.9 586.0 L179.5 585.9 L180.2 586.0 L180.8 586.0 L181.5 586.0 L182.1 585.9 L182.8 585.7 L183.4 585.8 L184.1 586.0 L184.7 585.9 L185.4 586.0 L186.0 586.0 L186.7 585.8 L187.3 586.0 L188.0 585.7 L188.6 585.7 L189.2 586.0 L189.9 585.7 L190.5 586.0 L191.2 585.8 L191.8 586.0 L192.5 586.0 L193.1 585.9 L193.8 586.0 L194.4 586.0 L195.1 585.8 L195.7 585.8 L196.4 585.9 L197.0 586.0 L197.7 585.9 L198.3 585.7 L199.0 586.0 L199.6 585.9 L200.2 585.9 L200.9 585.8 L201.5 586.0 L202.2 585.7 L202.8 585.8 L203.5 585.7 L204.1 585.8 L204.8 586.0 L205.4 586.0 L206.1 585.8 L206.7 585.9 L207.4 585.8 L208.0 586.0 L208.7 585.8 L209.3 585.8 L210.0 585.9 L210.6 585.9 L211.2 585.8 L211.9 585.8 L212.5 585.7 L213.2 585.8 L213.8 586.0 L214.5 586.0 L215.1 585.9 L215.8 586.0 L216.4 585.8 L217.1 585.8 L217.7 585.7 L218.4 585.9 L219.0 585.8 L219.7 585.9 L220.3 585.9 L221.0 585.9 L221.6 585.9 L222.3 585.8 L222.9 585.9 L223.5 586.0 L224.2 585.9 L224.8 586.0 L225.5 586.0 L226.1 586.0 L226.8 586.0 L227.4 585.9 L228.1 585.9 L228.7 586.0 L229.4 585.9 L230.0 585.8 L230.7 586.0 L231.3 585.8 L232.0 585.9 L232.6 586.0 L233.3 585.9 L233.9 586.0 L234.5 586.0 L235.2 585.8 L235.8 586.0 L236.5 585.9 L237.1 585.9 L237.8 585.8 L238.4 585.9 L239.1 585.8 L239.7 585.8 L240.4 585.7 L241.0 585.7 L241.7 586.0 L242.3 585.9 L243.0 586.0 L243.6 586.0 L244.3 585.8 L244.9 585.8 L245.5 585.9 L246.2 585.8 L246.8 585.7 L247.5 585.7 L248.1 585.9 L248.8 585.9 L249.4 586.0 L250.1 585.8 L250.7 586.0 L251.4 585.9 L252.0 585.8 L252.7 585.9 L253.3 585.9 L254.0 585.9 L254.6 586.0 L255.3 585.9 L255.9 585.7 L256.5 585.9 L257.2 585.9 L257.8 585.8 L258.5 586.0 L259.1 586.0 L259.8 586.0 L260.4 586.0 L261.1 585.9 L261.7 585.9 L262.4 586.0 L263.0 585.8 L263.7 585.8 L264.3 585.7 L265.0 585.9 L265.6 586.0 L266.3 585.9 L266.9 585.8 L267.5 585.7 L268.2 585.9 L268.8 585.9 L269.5 586.0 L270.1 585.9 L270.8 585.9 L271.4 585.9 L272.1 585.9 L272.7 585.9 L273.4 585.9 L274.0 585.8 L274.7 585.9 L275.3 585.9 L276.0 585.9 L276.6 586.0 L277.3 586.0 L277.9 586.0 L278.5 585.7 L279.2 585.8 L279.8 585.7 L280.5 585.9 L281.1 585.9 L281.8 585.9 L282.4 585.8 L283.1 585.9 L283.7 585.9 L284.4 585.9 L285.0 585.7 L285.7 586.0 L286.3 585.8 L287.0 585.8 L287.6 586.0 L288.3 586.0 L288.9 585.9 L289.5 586.0 L290.2 585.9 L290.8 585.8 L291.5 585.7 L292.1 585.9 L292.8 585.8 L293.4 585.8 L294.1 585.8 L294.7 585.8 L295.4 585.9 L296.0 585.9 L296.7 585.9 L297.3 585.8 L298.0 585.7 L298.6 586.0 L299.3 586.0 L299.9 586.0 L300.5 585.8 L301.2 586.0 L301.8 586.0 L302.5 585.9 L303.1 585.8 L303.8 585.9 L304.4 585.8 L305.1 585.9 L305.7 586.0 L306.4 585.9 L307.0 585.9 L307.7 586.0 L308.3 586.0 L309.0 586.0 L309.6 585.8 L310.3 585.8 L310.9 585.8 L311.6 585.9 L312.2 585.9 L312.8 586.0 L313.5 585.8 L314.1 586.0 L314.8 585.9 L315.4 586.0 L316.1 585.9 L316.7 585.8 L317.4 585.8 L318.0 585.9 L318.7 585.7 L319.3 586.0 L320.0 586.0 L320.6 585.9 L321.3 585.8 L321.9 585.6 L322.6 585.7 L323.2 585.9 L323.8 585.9 L324.5 586.0 L325.1 585.6 L325.8 585.9 L326.4 585.9 L327.1 585.7 L327.7 585.9 L328.4 586.0 L329.0 585.9 L329.7 585.9 L330.3 585.9 L331.0 585.9 L331.6 585.8 L332.3 585.8 L332.9 585.9 L333.6 585.9 L334.2 586.0 L334.8 586.0 L335.5 586.0 L336.1 585.6 L336.8 585.9 L337.4 585.7 L338.1 586.0 L338.7 586.0 L339.4 585.7 L340.0 585.9 L340.7 585.7 L341.3 585.8 L342.0 586.0 L342.6 585.8 L343.3 585.8 L343.9 585.8 L344.6 585.9 L345.2 585.8 L345.8 585.5 L346.5 585.7 L347.1 585.8 L347.8 586.0 L348.4 585.9 L349.1 585.8 L349.7 585.9 L350.4 585.9 L351.0 585.6 L351.7 585.9 L352.3 585.8 L353.0 585.6 L353.6 585.6 L354.3 585.5 L354.9 585.8 L355.6 585.9 L356.2 585.8 L356.8 585.8 L357.5 586.0 L358.1 585.8 L358.8 586.0 L359.4 585.4 L360.1 585.9 L360.7 585.5 L361.4 585.9 L362.0 585.7 L362.7 585.5 L363.3 585.8 L364.0 585.9 L364.6 585.5 L365.3 585.7 L365.9 585.9 L366.6 585.7 L367.2 585.6 L367.8 585.4 L368.5 585.7 L369.1 586.0 L369.8 585.7 L370.4 585.4 L371.1 586.0 L371.7 585.8 L372.4 585.6 L373.0 585.5 L373.7 585.9 L374.3 585.8 L375.0 585.7 L375.6 585.9 L376.3 586.0 L376.9 585.6 L377.6 585.4 L378.2 585.6 L378.8 585.4 L379.5 585.4 L380.1 585.3 L380.8 585.9 L381.4 586.0 L382.1 585.8 L382.7 585.8 L383.4 585.8 L384.0 585.5 L384.7 585.6 L385.3 585.3 L386.0 585.6 L386.6 585.3 L387.3 585.8 L387.9 586.0 L388.6 585.9 L389.2 586.0 L389.8 586.0 L390.5 585.7 L391.1 585.6 L391.8 585.6 L392.4 585.6 L393.1 585.3 L393.7 585.9 L394.4 585.2 L395.0 585.9 L395.7 585.6 L396.3 586.0 L397.0 585.5 L397.6 585.5 L398.3 586.0 L398.9 585.9 L399.6 585.9 L400.2 586.0 L400.9 585.7 L401.5 585.9 L402.1 585.5 L402.8 586.0 L403.4 585.9 L404.1 585.7 L404.7 585.8 L405.4 585.3 L406.0 585.3 L406.7 585.7 L407.3 585.9 L408.0 585.2 L408.6 585.1 L409.3 585.4 L409.9 585.7 L410.6 585.5 L411.2 585.5 L411.9 585.9 L412.5 585.4 L413.1 585.9 L413.8 585.6 L414.4 585.8 L415.1 586.0 L415.7 585.1 L416.4 585.6 L417.0 585.6 L417.7 586.0 L418.3 585.5 L419.0 585.5 L419.6 585.5 L420.3 585.7 L420.9 585.6 L421.6 585.9 L422.2 585.9 L422.9 585.0 L423.5 585.4 L424.1 585.0 L424.8 585.7 L425.4 586.0 L426.1 585.9 L426.7 585.4 L427.4 585.6 L428.0 586.0 L428.7 585.1 L429.3 585.6 L430.0 585.7 L430.6 585.9 L431.3 585.6 L431.9 585.5 L432.6 585.4 L433.2 585.0 L433.9 585.6 L434.5 585.9 L435.1 585.9 L435.8 586.0 L436.4 585.4 L437.1 585.0 L437.7 585.7 L438.4 585.4 L439.0 585.3 L439.7 585.8 L440.3 585.3 L441.0 585.5 L441.6 585.3 L442.3 585.2 L442.9 585.4 L443.6 585.7 L444.2 586.0 L444.9 585.7 L445.5 585.4 L446.1 586.0 L446.8 585.1 L447.4 585.9 L448.1 586.0 L448.7 585.8 L449.4 586.0 L450.0 585.2 L450.7 585.8 L451.3 585.0 L452.0 584.9 L452.6 586.0 L453.3 585.4 L453.9 585.2 L454.6 584.8 L455.2 585.6 L455.9 585.1 L456.5 584.9 L457.1 584.9 L457.8 585.7 L458.4 585.4 L459.1 584.8 L459.7 585.2 L460.4 585.9 L461.0 585.6 L461.7 585.8 L462.3 585.2 L463.0 585.8 L463.6 585.1 L464.3 585.0 L464.9 586.0 L465.6 585.6 L466.2 585.0 L466.9 586.0 L467.5 586.0 L468.1 585.4 L468.8 585.5 L469.4 585.4 L470.1 585.8 L470.7 585.9 L471.4 585.7 L472.0 585.2 L472.7 585.3 L473.3 585.1 L474.0 585.4 L474.6 585.0 L475.3 584.8 L475.9 585.0 L476.6 585.8 L477.2 585.9 L477.9 586.0 L478.5 585.7 L479.1 585.0 L479.8 585.7 L480.4 586.0 L481.1 584.8 L481.7 586.0 L482.4 585.6 L483.0 585.5 L483.7 586.0 L484.3 585.1 L485.0 584.4 L485.6 585.0 L486.3 586.0 L486.9 584.6 L487.6 584.2 L488.2 585.9 L488.9 585.2 L489.5 584.8 L490.1 585.8 L490.8 585.9 L491.4 585.5 L492.1 585.8 L492.7 585.7 L493.4 583.1 L494.0 584.3 L494.7 584.8 L495.3 585.4 L496.0 584.7 L496.6 582.9 L497.3 584.4 L497.9 582.0 L498.6 584.9 L499.2 585.2 L499.9 585.1 L500.5 583.6 L501.2 584.6 L501.8 584.2 L502.4 584.9 L503.1 583.5 L503.7 584.0 L504.4 584.6 L505.0 584.2 L505.7 584.5 L506.3 579.5 L507.0 584.1 L507.6 581.6 L508.3 583.8 L508.9 583.6 L509.6 580.8 L510.2 579.7 L510.9 583.5 L511.5 581.1 L512.2 580.7 L512.2 591.2 L511.5 591.7 L510.9 589.7 L510.2 593.6 L509.6 593.6 L508.9 588.8 L508.3 591.5 L507.6 589.2 L507.0 591.1 L506.3 589.4 L505.7 590.6 L505.0 590.4 L504.4 593.4 L503.7 591.6 L503.1 589.6 L502.4 592.8 L501.8 592.0 L501.2 591.3 L500.5 591.1 L499.9 589.7 L499.2 591.0 L498.6 590.8 L497.9 591.5 L497.3 590.5 L496.6 589.9 L496.0 591.4 L495.3 591.8 L494.7 590.6 L494.0 591.4 L493.4 590.4 L492.7 590.3 L492.1 592.0 L491.4 592.7 L490.8 591.1 L490.1 590.5 L489.5 591.4 L488.9 592.0 L488.2 591.9 L487.6 591.2 L486.9 592.2 L486.3 590.4 L485.6 590.4 L485.0 590.8 L484.3 590.4 L483.7 591.0 L483.0 592.0 L482.4 591.5 L481.7 591.9 L481.1 590.6 L480.4 590.5 L479.8 590.7 L479.1 591.0 L478.5 591.7 L477.9 591.1 L477.2 590.5 L476.6 591.1 L475.9 590.7 L475.3 591.8 L474.6 590.9 L474.0 591.3 L473.3 590.5 L472.7 590.6 L472.0 590.6 L471.4 591.0 L470.7 590.9 L470.1 590.5 L469.4 590.9 L468.8 590.4 L468.1 591.0 L467.5 590.4 L466.9 590.8 L466.2 590.5 L465.6 590.6 L464.9 590.6 L464.3 591.3 L463.6 591.3 L463.0 590.4 L462.3 590.9 L461.7 590.7 L461.0 590.5 L460.4 591.1 L459.7 591.2 L459.1 590.9 L458.4 591.0 L457.8 590.4 L457.1 591.4 L456.5 590.6 L455.9 591.0 L455.2 591.0 L454.6 590.8 L453.9 590.8 L453.3 591.3 L452.6 591.2 L452.0 590.9 L451.3 591.6 L450.7 590.4 L450.0 591.2 L449.4 590.5 L448.7 591.5 L448.1 590.5 L447.4 591.2 L446.8 591.1 L446.1 591.3 L445.5 590.5 L444.9 591.3 L444.2 590.4 L443.6 591.1 L442.9 590.4 L442.3 591.0 L441.6 590.5 L441.0 590.4 L440.3 591.1 L439.7 590.4 L439.0 591.1 L438.4 590.8 L437.7 591.4 L437.1 590.7 L436.4 590.5 L435.8 591.0 L435.1 590.5 L434.5 590.6 L433.9 590.7 L433.2 590.5 L432.6 590.5 L431.9 591.2 L431.3 590.4 L430.6 591.2 L430.0 590.5 L429.3 590.8 L428.7 590.9 L428.0 591.0 L427.4 591.0 L426.7 591.2 L426.1 590.8 L425.4 590.7 L424.8 591.1 L424.1 590.6 L423.5 591.1 L422.9 590.9 L422.2 590.7 L421.6 591.0 L420.9 590.4 L420.3 590.7 L419.6 590.5 L419.0 590.6 L418.3 590.7 L417.7 590.7 L417.0 590.9 L416.4 591.3 L415.7 591.2 L415.1 590.4 L414.4 590.4 L413.8 590.5 L413.1 591.0 L412.5 590.7 L411.9 590.4 L411.2 590.4 L410.6 590.7 L409.9 590.5 L409.3 590.8 L408.6 590.8 L408.0 591.2 L407.3 590.4 L406.7 590.8 L406.0 590.4 L405.4 590.6 L404.7 590.4 L404.1 590.7 L403.4 591.0 L402.8 590.7 L402.1 590.4 L401.5 590.4 L400.9 591.0 L400.2 590.4 L399.6 590.5 L398.9 590.5 L398.3 590.4 L397.6 590.9 L397.0 590.7 L396.3 590.6 L395.7 591.1 L395.0 590.7 L394.4 590.6 L393.7 590.5 L393.1 590.6 L392.4 590.6 L391.8 590.5 L391.1 590.4 L390.5 591.0 L389.8 590.6 L389.2 590.9 L388.6 590.8 L387.9 590.6 L387.3 590.7 L386.6 591.1 L386.0 591.0 L385.3 591.0 L384.7 590.6 L384.0 590.6 L383.4 590.4 L382.7 590.4 L382.1 590.5 L381.4 590.6 L380.8 590.8 L380.1 590.8 L379.5 590.5 L378.8 590.5 L378.2 590.5 L377.6 590.7 L376.9 590.6 L376.3 590.7 L375.6 590.4 L375.0 590.4 L374.3 590.5 L373.7 590.6 L373.0 590.7 L372.4 590.7 L371.7 590.5 L371.1 591.0 L370.4 590.8 L369.8 590.7 L369.1 590.5 L368.5 590.9 L367.8 590.8 L367.2 590.6 L366.6 590.7 L365.9 590.4 L365.3 590.4 L364.6 590.5 L364.0 590.6 L363.3 590.4 L362.7 590.4 L362.0 590.9 L361.4 590.9 L360.7 590.4 L360.1 590.4 L359.4 590.8 L358.8 590.9 L358.1 590.9 L357.5 590.5 L356.8 590.5 L356.2 590.6 L355.6 590.8 L354.9 590.7 L354.3 590.6 L353.6 590.7 L353.0 590.8 L352.3 590.7 L351.7 590.6 L351.0 590.5 L350.4 590.7 L349.7 590.5 L349.1 590.6 L348.4 590.7 L347.8 590.7 L347.1 590.5 L346.5 590.7 L345.8 590.8 L345.2 590.8 L344.6 590.8 L343.9 590.7 L343.3 590.7 L342.6 590.6 L342.0 590.4 L341.3 590.4 L340.7 590.6 L340.0 590.6 L339.4 590.7 L338.7 590.5 L338.1 590.7 L337.4 590.7 L336.8 590.4 L336.1 590.8 L335.5 590.4 L334.8 590.4 L334.2 590.6 L333.6 590.7 L332.9 590.8 L332.3 590.5 L331.6 590.4 L331.0 590.7 L330.3 590.6 L329.7 590.6 L329.0 590.5 L328.4 590.7 L327.7 590.6 L327.1 590.4 L326.4 590.5 L325.8 590.6 L325.1 590.6 L324.5 590.6 L323.8 590.5 L323.2 590.7 L322.6 590.8 L321.9 590.5 L321.3 590.5 L320.6 590.4 L320.0 590.4 L319.3 590.7 L318.7 590.7 L318.0 590.6 L317.4 590.5 L316.7 590.8 L316.1 590.4 L315.4 590.6 L314.8 590.4 L314.1 590.4 L313.5 590.4 L312.8 590.4 L312.2 590.5 L311.6 590.7 L310.9 590.7 L310.3 590.6 L309.6 590.4 L309.0 590.5 L308.3 590.4 L307.7 590.5 L307.0 590.6 L306.4 590.4 L305.7 590.7 L305.1 590.5 L304.4 590.4 L303.8 590.7 L303.1 590.7 L302.5 590.7 L301.8 590.5 L301.2 590.4 L300.5 590.4 L299.9 590.5 L299.3 590.4 L298.6 590.6 L298.0 590.4 L297.3 590.4 L296.7 590.7 L296.0 590.5 L295.4 590.5 L294.7 590.5 L294.1 590.4 L293.4 590.4 L292.8 590.5 L292.1 590.4 L291.5 590.5 L290.8 590.4 L290.2 590.6 L289.5 590.5 L288.9 590.5 L288.3 590.5 L287.6 590.4 L287.0 590.5 L286.3 590.4 L285.7 590.5 L285.0 590.5 L284.4 590.5 L283.7 590.6 L283.1 590.5 L282.4 590.4 L281.8 590.5 L281.1 590.4 L280.5 590.6 L279.8 590.7 L279.2 590.4 L278.5 590.4 L277.9 590.5 L277.3 590.6 L276.6 590.7 L276.0 590.5 L275.3 590.4 L274.7 590.7 L274.0 590.6 L273.4 590.4 L272.7 590.6 L272.1 590.6 L271.4 590.6 L270.8 590.6 L270.1 590.6 L269.5 590.4 L268.8 590.5 L268.2 590.7 L267.5 590.7 L266.9 590.4 L266.3 590.6 L265.6 590.5 L265.0 590.6 L264.3 590.5 L263.7 590.5 L263.0 590.4 L262.4 590.5 L261.7 590.5 L261.1 590.5 L260.4 590.6 L259.8 590.5 L259.1 590.4 L258.5 590.4 L257.8 590.4 L257.2 590.4 L256.5 590.5 L255.9 590.4 L255.3 590.7 L254.6 590.4 L254.0 590.5 L253.3 590.6 L252.7 590.5 L252.0 590.5 L251.4 590.5 L250.7 590.4 L250.1 590.6 L249.4 590.6 L248.8 590.5 L248.1 590.5 L247.5 590.5 L246.8 590.5 L246.2 590.6 L245.5 590.7 L244.9 590.4 L244.3 590.4 L243.6 590.4 L243.0 590.5 L242.3 590.4 L241.7 590.6 L241.0 590.5 L240.4 590.5 L239.7 590.6 L239.1 590.4 L238.4 590.4 L237.8 590.4 L237.1 590.7 L236.5 590.4 L235.8 590.4 L235.2 590.6 L234.5 590.4 L233.9 590.4 L233.3 590.7 L232.6 590.5 L232.0 590.4 L231.3 590.7 L230.7 590.5 L230.0 590.4 L229.4 590.6 L228.7 590.6 L228.1 590.4 L227.4 590.6 L226.8 590.6 L226.1 590.5 L225.5 590.4 L224.8 590.5 L224.2 590.5 L223.5 590.6 L222.9 590.5 L222.3 590.6 L221.6 590.6 L221.0 590.4 L220.3 590.4 L219.7 590.4 L219.0 590.7 L218.4 590.4 L217.7 590.4 L217.1 590.6 L216.4 590.7 L215.8 590.5 L215.1 590.7 L214.5 590.6 L213.8 590.5 L213.2 590.6 L212.5 590.6 L211.9 590.5 L211.2 590.6 L210.6 590.4 L210.0 590.4 L209.3 590.4 L208.7 590.6 L208.0 590.5 L207.4 590.4 L206.7 590.4 L206.1 590.5 L205.4 590.4 L204.8 590.4 L204.1 590.7 L203.5 590.4 L202.8 590.5 L202.2 590.6 L201.5 590.4 L200.9 590.5 L200.2 590.4 L199.6 590.4 L199.0 590.4 L198.3 590.6 L197.7 590.6 L197.0 590.5 L196.4 590.6 L195.7 590.4 L195.1 590.4 L194.4 590.5 L193.8 590.5 L193.1 590.6 L192.5 590.5 L191.8 590.5 L191.2 590.5 L190.5 590.4 L189.9 590.4 L189.2 590.5 L188.6 590.5 L188.0 590.7 L187.3 590.4 L186.7 590.6 L186.0 590.6 L185.4 590.6 L184.7 590.6 L184.1 590.4 L183.4 590.5 L182.8 590.5 L182.1 590.5 L181.5 590.5 L180.8 590.4 L180.2 590.4 L179.5 590.7 L178.9 590.5 L178.2 590.4 L177.6 590.5 L177.0 590.6 L176.3 590.4 L175.7 590.5 L175.0 590.5 L174.4 590.4 L173.7 590.5 L173.1 590.5 L172.4 590.5 L171.8 590.6 L171.1 590.6 L170.5 590.5 L169.8 590.6 L169.2 590.5 L168.5 590.6 L167.9 590.4 L167.2 590.4 L166.6 590.6Z" fill="#e862b4" stroke="#e862b4" stroke-width="1" stroke-linejoin="round"/><circle cx="367.7" cy="590.9" r="1.0" fill="#e862b4" opacity="0.55"/><circle cx="492.4" cy="590.6" r="1.0" fill="#e862b4" opacity="0.55"/><circle cx="486.3" cy="582.6" r="1.0" fill="#e862b4" opacity="0.55"/><circle cx="504.6" cy="595.2" r="1.0" fill="#e862b4" opacity="0.55"/><circle cx="505.8" cy="594.4" r="1.0" fill="#e862b4" opacity="0.55"/><circle cx="492.1" cy="590.0" r="1.0" fill="#e862b4" opacity="0.55"/><circle cx="496.3" cy="584.8" r="1.0" fill="#e862b4" opacity="0.55"/><circle cx="394.9" cy="590.1" r="1.0" fill="#e862b4" opacity="0.55"/><circle cx="417.4" cy="586.5" r="1.0" fill="#e862b4" opacity="0.55"/><circle cx="497.3" cy="582.7" r="1.0" fill="#e862b4" opacity="0.55"/><circle cx="474.0" cy="590.5" r="1.0" fill="#e862b4" opacity="0.55"/><circle cx="417.3" cy="585.7" r="1.0" fill="#e862b4" opacity="0.55"/><circle cx="366.1" cy="586.4" r="1.0" fill="#e862b4" opacity="0.55"/><circle cx="473.8" cy="586.1" r="1.0" fill="#e862b4" opacity="0.55"/><circle cx="464.2" cy="586.6" r="1.0" fill="#e862b4" opacity="0.55"/><circle cx="460.2" cy="585.5" r="1.0" fill="#e862b4" opacity="0.55"/><circle cx="510.8" cy="574.7" r="1.0" fill="#e862b4" opacity="0.55"/><circle cx="507.4" cy="584.7" r="1.0" fill="#e862b4" opacity="0.55"/><circle cx="490.8" cy="593.9" r="1.0" fill="#e862b4" opacity="0.55"/><circle cx="461.6" cy="585.7" r="1.0" fill="#e862b4" opacity="0.55"/><circle cx="509.7" cy="575.1" r="1.0" fill="#e862b4" opacity="0.55"/><circle cx="493.8" cy="593.0" r="1.0" fill="#e862b4" opacity="0.55"/><circle cx="447.8" cy="591.6" r="1.0" fill="#e862b4" opacity="0.55"/><circle cx="421.7" cy="585.8" r="1.0" fill="#e862b4" opacity="0.55"/><circle cx="480.3" cy="590.4" r="1.0" fill="#e862b4" opacity="0.55"/><circle cx="429.4" cy="591.0" r="1.0" fill="#e862b4" opacity="0.55"/><circle cx="393.5" cy="590.3" r="1.0" fill="#e862b4" opacity="0.55"/><circle cx="512.5" cy="574.5" r="1.0" fill="#e862b4" opacity="0.55"/><circle cx="406.9" cy="589.9" r="1.0" fill="#e862b4" opacity="0.55"/><circle cx="509.2" cy="596.7" r="1.0" fill="#e862b4" opacity="0.55"/><circle cx="482.8" cy="590.4" r="1.0" fill="#e862b4" opacity="0.55"/><circle cx="364.5" cy="590.3" r="1.0" fill="#e862b4" opacity="0.55"/><circle cx="460.1" cy="585.8" r="1.0" fill="#e862b4" opacity="0.55"/><circle cx="454.5" cy="589.8" r="1.0" fill="#e862b4" opacity="0.55"/><circle cx="481.9" cy="583.7" r="1.0" fill="#e862b4" opacity="0.55"/><circle cx="444.1" cy="586.3" r="1.0" fill="#e862b4" opacity="0.55"/><circle cx="449.1" cy="586.6" r="1.0" fill="#e862b4" opacity="0.55"/><circle cx="495.8" cy="595.5" r="1.0" fill="#e862b4" opacity="0.55"/><circle cx="499.4" cy="592.7" r="1.0" fill="#e862b4" opacity="0.55"/><circle cx="505.2" cy="583.5" r="1.0" fill="#e862b4" opacity="0.55"/><circle cx="503.2" cy="580.8" r="1.0" fill="#e862b4" opacity="0.55"/><circle cx="485.5" cy="590.0" r="1.0" fill="#e862b4" opacity="0.55"/><circle cx="471.4" cy="584.0" r="1.0" fill="#e862b4" opacity="0.55"/><circle cx="498.7" cy="581.9" r="1.0" fill="#e862b4" opacity="0.55"/><circle cx="502.6" cy="591.1" r="1.0" fill="#e862b4" opacity="0.55"/><circle cx="490.5" cy="582.9" r="1.0" fill="#e862b4" opacity="0.55"/><circle cx="495.7" cy="580.2" r="1.0" fill="#e862b4" opacity="0.55"/><circle cx="508.0" cy="584.6" r="1.0" fill="#e862b4" opacity="0.55"/><circle cx="493.0" cy="584.6" r="1.0" fill="#e862b4" opacity="0.55"/><circle cx="491.7" cy="592.2" r="1.0" fill="#e862b4" opacity="0.55"/><circle cx="467.5" cy="590.8" r="1.0" fill="#e862b4" opacity="0.55"/><circle cx="435.5" cy="585.5" r="1.0" fill="#e862b4" opacity="0.55"/><circle cx="386.4" cy="590.7" r="1.0" fill="#e862b4" opacity="0.55"/><circle cx="509.4" cy="584.8" r="1.0" fill="#e862b4" opacity="0.55"/><circle cx="472.2" cy="590.4" r="1.0" fill="#e862b4" opacity="0.55"/><circle cx="492.9" cy="584.4" r="1.0" fill="#e862b4" opacity="0.55"/><circle cx="505.4" cy="589.1" r="1.0" fill="#e862b4" opacity="0.55"/><circle cx="396.4" cy="585.1" r="1.0" fill="#e862b4" opacity="0.55"/><circle cx="485.4" cy="589.9" r="1.0" fill="#e862b4" opacity="0.55"/><circle cx="502.0" cy="593.8" r="1.0" fill="#e862b4" opacity="0.55"/><circle cx="428.1" cy="590.4" r="1.0" fill="#e862b4" opacity="0.55"/><circle cx="415.1" cy="584.8" r="1.0" fill="#e862b4" opacity="0.55"/><circle cx="419.5" cy="590.5" r="1.0" fill="#e862b4" opacity="0.55"/><circle cx="378.3" cy="591.1" r="1.0" fill="#e862b4" opacity="0.55"/><circle cx="471.9" cy="583.8" r="1.0" fill="#e862b4" opacity="0.55"/><circle cx="510.4" cy="574.4" r="1.0" fill="#e862b4" opacity="0.55"/><circle cx="512.0" cy="600.0" r="1.0" fill="#e862b4" opacity="0.55"/><circle cx="425.8" cy="591.2" r="1.0" fill="#e862b4" opacity="0.55"/><circle cx="455.5" cy="584.4" r="1.0" fill="#e862b4" opacity="0.55"/><circle cx="458.6" cy="585.3" r="1.0" fill="#e862b4" opacity="0.55"/><circle cx="367.8" cy="590.2" r="1.0" fill="#e862b4" opacity="0.55"/><circle cx="401.9" cy="584.9" r="1.0" fill="#e862b4" opacity="0.55"/><circle cx="473.9" cy="584.7" r="1.0" fill="#e862b4" opacity="0.55"/><circle cx="490.4" cy="585.6" r="1.0" fill="#e862b4" opacity="0.55"/><circle cx="427.1" cy="585.5" r="1.0" fill="#e862b4" opacity="0.55"/><circle cx="509.2" cy="590.5" r="1.0" fill="#e862b4" opacity="0.55"/><circle cx="495.8" cy="579.4" r="1.0" fill="#e862b4" opacity="0.55"/><circle cx="452.6" cy="585.3" r="1.0" fill="#e862b4" opacity="0.55"/><circle cx="424.4" cy="590.3" r="1.0" fill="#e862b4" opacity="0.55"/><circle cx="435.9" cy="585.7" r="1.0" fill="#e862b4" opacity="0.55"/><circle cx="505.3" cy="579.8" r="1.0" fill="#e862b4" opacity="0.55"/><circle cx="454.5" cy="591.1" r="1.0" fill="#e862b4" opacity="0.55"/><circle cx="508.2" cy="589.7" r="1.0" fill="#e862b4" opacity="0.55"/><circle cx="387.7" cy="589.8" r="1.0" fill="#e862b4" opacity="0.55"/><circle cx="473.0" cy="585.7" r="1.0" fill="#e862b4" opacity="0.55"/><circle cx="500.8" cy="579.5" r="1.0" fill="#e862b4" opacity="0.55"/><circle cx="508.7" cy="575.6" r="1.0" fill="#e862b4" opacity="0.55"/><circle cx="403.6" cy="586.4" r="1.0" fill="#e862b4" opacity="0.55"/><circle cx="383.8" cy="585.9" r="1.0" fill="#e862b4" opacity="0.55"/><circle cx="510.1" cy="575.6" r="1.0" fill="#e862b4" opacity="0.55"/><circle cx="437.1" cy="586.2" r="1.0" fill="#e862b4" opacity="0.55"/><circle cx="501.5" cy="592.6" r="1.0" fill="#e862b4" opacity="0.55"/><circle cx="511.7" cy="580.5" r="1.0" fill="#e862b4" opacity="0.55"/><circle cx="507.5" cy="590.4" r="1.0" fill="#e862b4" opacity="0.55"/><circle cx="508.1" cy="584.9" r="1.0" fill="#e862b4" opacity="0.55"/><circle cx="383.3" cy="585.7" r="1.0" fill="#e862b4" opacity="0.55"/><circle cx="512.7" cy="588.3" r="1.0" fill="#e862b4" opacity="0.55"/><circle cx="510.0" cy="582.1" r="1.0" fill="#e862b4" opacity="0.55"/><circle cx="505.2" cy="577.6" r="1.0" fill="#e862b4" opacity="0.55"/><circle cx="384.3" cy="589.9" r="1.0" fill="#e862b4" opacity="0.55"/><circle cx="498.4" cy="594.4" r="1.0" fill="#e862b4" opacity="0.55"/><circle cx="467.3" cy="586.1" r="1.0" fill="#e862b4" opacity="0.55"/><circle cx="437.6" cy="590.1" r="1.0" fill="#e862b4" opacity="0.55"/><circle cx="505.0" cy="592.4" r="1.0" fill="#e862b4" opacity="0.55"/><circle cx="438.8" cy="584.9" r="1.0" fill="#e862b4" opacity="0.55"/><circle cx="501.8" cy="581.2" r="1.0" fill="#e862b4" opacity="0.55"/><circle cx="507.1" cy="575.8" r="1.0" fill="#e862b4" opacity="0.55"/><circle cx="409.5" cy="586.1" r="1.0" fill="#e862b4" opacity="0.55"/><circle cx="459.9" cy="585.6" r="1.0" fill="#e862b4" opacity="0.55"/><circle cx="487.2" cy="593.4" r="1.0" fill="#e862b4" opacity="0.55"/><circle cx="399.0" cy="590.6" r="1.0" fill="#e862b4" opacity="0.55"/><circle cx="512.0" cy="599.0" r="1.0" fill="#e862b4" opacity="0.55"/><circle cx="395.3" cy="591.4" r="1.0" fill="#e862b4" opacity="0.55"/><circle cx="505.0" cy="581.4" r="1.0" fill="#e862b4" opacity="0.55"/><circle cx="492.6" cy="590.9" r="1.0" fill="#e862b4" opacity="0.55"/><circle cx="491.2" cy="584.9" r="1.0" fill="#e862b4" opacity="0.55"/><circle cx="502.4" cy="578.4" r="1.0" fill="#e862b4" opacity="0.55"/><circle cx="504.9" cy="591.9" r="1.0" fill="#e862b4" opacity="0.55"/><circle cx="488.4" cy="593.9" r="1.0" fill="#e862b4" opacity="0.55"/><circle cx="391.7" cy="590.1" r="1.0" fill="#e862b4" opacity="0.55"/><circle cx="506.8" cy="596.1" r="1.0" fill="#e862b4" opacity="0.55"/><circle cx="507.8" cy="584.8" r="1.0" fill="#e862b4" opacity="0.55"/><circle cx="448.0" cy="586.0" r="1.0" fill="#e862b4" opacity="0.55"/><circle cx="443.2" cy="590.9" r="1.0" fill="#e862b4" opacity="0.55"/><circle cx="483.4" cy="592.3" r="1.0" fill="#e862b4" opacity="0.55"/><circle cx="502.2" cy="596.4" r="1.0" fill="#e862b4" opacity="0.55"/><circle cx="504.5" cy="580.7" r="1.0" fill="#e862b4" opacity="0.55"/><circle cx="507.8" cy="590.5" r="1.0" fill="#e862b4" opacity="0.55"/><circle cx="398.0" cy="586.2" r="1.0" fill="#e862b4" opacity="0.55"/><circle cx="480.9" cy="590.7" r="1.0" fill="#e862b4" opacity="0.55"/><circle cx="494.5" cy="592.5" r="1.0" fill="#e862b4" opacity="0.55"/><circle cx="507.2" cy="582.6" r="1.0" fill="#e862b4" opacity="0.55"/><circle cx="373.6" cy="590.9" r="1.0" fill="#e862b4" opacity="0.55"/><circle cx="503.3" cy="590.2" r="1.0" fill="#e862b4" opacity="0.55"/><circle cx="413.5" cy="590.0" r="1.0" fill="#e862b4" opacity="0.55"/><circle cx="456.3" cy="585.0" r="1.0" fill="#e862b4" opacity="0.55"/><circle cx="427.9" cy="590.8" r="1.0" fill="#e862b4" opacity="0.55"/><circle cx="443.7" cy="585.4" r="1.0" fill="#e862b4" opacity="0.55"/><circle cx="507.8" cy="599.4" r="1.0" fill="#e862b4" opacity="0.55"/><circle cx="433.7" cy="590.9" r="1.0" fill="#e862b4" opacity="0.55"/><circle cx="486.6" cy="591.3" r="1.0" fill="#e862b4" opacity="0.55"/><circle cx="482.1" cy="586.2" r="1.0" fill="#e862b4" opacity="0.55"/><circle cx="509.8" cy="578.8" r="1.0" fill="#e862b4" opacity="0.55"/><circle cx="512.7" cy="588.2" r="1.0" fill="#e862b4" opacity="0.55"/><circle cx="490.6" cy="584.7" r="1.0" fill="#e862b4" opacity="0.55"/><circle cx="367.5" cy="590.9" r="1.0" fill="#e862b4" opacity="0.55"/><circle cx="457.3" cy="585.4" r="1.0" fill="#e862b4" opacity="0.55"/><circle cx="473.4" cy="590.3" r="1.0" fill="#e862b4" opacity="0.55"/><circle cx="504.0" cy="596.5" r="1.0" fill="#e862b4" opacity="0.55"/><circle cx="508.7" cy="591.9" r="1.0" fill="#e862b4" opacity="0.55"/><circle cx="461.9" cy="583.9" r="1.0" fill="#e862b4" opacity="0.55"/><circle cx="377.0" cy="585.4" r="1.0" fill="#e862b4" opacity="0.55"/><circle cx="363.2" cy="590.7" r="1.0" fill="#e862b4" opacity="0.55"/><circle cx="368.2" cy="589.7" r="1.0" fill="#e862b4" opacity="0.55"/><circle cx="511.1" cy="578.4" r="1.0" fill="#e862b4" opacity="0.55"/><circle cx="460.0" cy="584.4" r="1.0" fill="#e862b4" opacity="0.55"/><circle cx="497.4" cy="591.6" r="1.0" fill="#e862b4" opacity="0.55"/><circle cx="463.0" cy="591.9" r="1.0" fill="#e862b4" opacity="0.55"/><circle cx="387.8" cy="585.9" r="1.0" fill="#e862b4" opacity="0.55"/><circle cx="415.7" cy="584.9" r="1.0" fill="#e862b4" opacity="0.55"/><path d="M511.0 576.0 L511.2 596.0" stroke="#e862b4" stroke-width="2.2" fill="none" stroke-linecap="round" stroke-linejoin="round" opacity="1"/><path d="M622.5 428.3 L623.0 427.8 L623.6 427.4 L624.1 426.7 L624.7 426.5 L625.2 426.2 L625.7 425.7 L626.3 425.6 L626.8 425.4 L627.4 425.0 L627.9 425.0 L628.4 424.8 L629.0 424.6 L629.5 424.4 L630.0 424.2 L630.6 424.2 L631.1 424.0 L631.7 424.0 L632.2 424.0 L632.7 423.7 L633.3 423.7 L633.8 423.7 L634.4 423.8 L634.9 423.5 L635.4 423.7 L636.0 423.7 L636.5 423.4 L637.1 423.6 L637.6 423.5 L638.1 423.4 L638.7 423.3 L639.2 423.5 L639.8 423.4 L640.3 423.4 L640.8 423.5 L641.4 423.3 L641.9 423.5 L642.5 423.5 L643.0 423.2 L643.5 423.4 L644.1 423.3 L644.6 423.3 L645.1 423.2 L645.7 423.3 L646.2 423.1 L646.8 423.4 L647.3 423.3 L647.8 423.3 L648.4 423.4 L648.9 423.2 L649.5 423.1 L650.0 423.2 L650.5 423.1 L651.1 423.4 L651.6 423.3 L652.2 423.2 L652.7 423.4 L653.2 423.2 L653.8 423.3 L654.3 423.2 L654.9 423.3 L655.4 423.2 L655.9 423.2 L656.5 423.3 L657.0 423.1 L657.6 423.2 L658.1 423.3 L658.6 423.3 L659.2 423.2 L659.7 423.4 L660.2 423.2 L660.8 423.1 L661.3 423.4 L661.9 423.2 L662.4 423.2 L662.9 423.3 L663.5 423.4 L664.0 423.1 L664.6 423.3 L665.1 423.3 L665.6 423.2 L666.2 423.1 L666.7 423.4 L667.3 423.4 L667.8 423.1 L668.3 423.3 L668.9 423.2 L669.4 423.4 L670.0 423.3 L670.5 423.1 L671.0 423.3 L671.6 423.2 L672.1 423.3 L672.7 423.1 L673.2 423.2 L673.7 423.3 L674.3 423.2 L674.8 423.4 L675.3 423.2 L675.9 423.1 L676.4 423.2 L677.0 423.3 L677.5 423.2 L678.0 423.3 L678.6 423.2 L679.1 423.3 L679.7 423.2 L680.2 423.3 L680.7 423.2 L681.3 423.1 L681.8 423.3 L682.4 423.3 L682.9 423.3 L683.4 423.3 L684.0 423.4 L684.5 423.3 L685.1 423.3 L685.6 423.2 L686.1 423.3 L686.7 423.2 L687.2 423.3 L687.7 423.4 L688.3 423.2 L688.8 423.4 L689.4 423.1 L689.9 423.2 L690.4 423.3 L691.0 423.2 L691.5 423.2 L692.1 423.2 L692.6 423.3 L693.1 423.1 L693.7 423.3 L694.2 423.3 L694.8 423.3 L695.3 423.4 L695.8 423.2 L696.4 423.3 L696.9 423.3 L697.5 423.1 L698.0 423.2 L698.5 423.3 L699.1 423.2 L699.6 423.1 L700.2 423.2 L700.7 423.2 L701.2 423.3 L701.8 423.3 L702.3 423.2 L702.8 423.2 L703.4 423.2 L703.9 423.2 L704.5 423.2 L705.0 423.1 L705.5 423.3 L706.1 423.3 L706.6 423.2 L707.2 423.1 L707.7 423.2 L708.2 423.4 L708.8 423.1 L709.3 423.2 L709.9 423.2 L710.4 423.3 L710.9 423.1 L711.5 423.2 L712.0 423.2 L712.6 423.3 L713.1 423.3 L713.6 423.3 L714.2 423.3 L714.7 423.3 L715.3 423.3 L715.8 423.4 L716.3 423.3 L716.9 423.3 L717.4 423.2 L717.9 423.3 L718.5 423.2 L719.0 423.2 L719.6 423.3 L720.1 423.1 L720.6 423.2 L721.2 423.1 L721.7 423.3 L722.3 423.2 L722.8 423.2 L723.3 423.1 L723.9 423.3 L724.4 423.3 L725.0 423.4 L725.5 423.3 L726.0 423.4 L726.6 423.4 L727.1 423.3 L727.7 423.1 L728.2 423.1 L728.7 423.1 L729.3 423.2 L729.8 423.2 L730.4 423.3 L730.9 423.2 L731.4 423.1 L732.0 423.3 L732.5 423.4 L733.0 423.2 L733.6 423.3 L734.1 423.3 L734.7 423.2 L735.2 423.4 L735.7 423.3 L736.3 423.2 L736.8 423.3 L737.4 423.1 L737.9 423.3 L738.4 423.1 L739.0 423.4 L739.5 423.2 L740.1 423.2 L740.6 423.3 L741.1 423.2 L741.7 423.2 L742.2 423.3 L742.8 423.4 L743.3 423.2 L743.8 423.1 L744.4 423.3 L744.9 423.1 L745.4 423.4 L746.0 423.2 L746.5 423.3 L747.1 423.3 L747.6 423.4 L748.1 423.4 L748.7 423.3 L749.2 423.2 L749.8 423.2 L750.3 423.1 L750.8 423.1 L751.4 423.3 L751.9 423.3 L752.5 423.3 L753.0 423.3 L753.5 423.2 L754.1 423.3 L754.6 423.2 L755.2 423.2 L755.7 423.1 L756.2 423.2 L756.8 423.2 L757.3 423.3 L757.9 423.3 L758.4 423.3 L758.9 423.4 L759.5 423.3 L760.0 423.2 L760.5 423.1 L761.1 423.2 L761.6 423.4 L762.2 423.4 L762.7 423.1 L763.2 423.4 L763.8 423.4 L764.3 423.3 L764.9 423.3 L765.4 423.2 L765.9 423.4 L766.5 423.2 L767.0 423.2 L767.6 423.4 L768.1 423.2 L768.6 423.2 L769.2 423.3 L769.7 423.1 L770.3 423.2 L770.8 423.3 L771.3 423.4 L771.9 423.1 L772.4 423.3 L773.0 423.3 L773.5 423.2 L774.0 423.1 L774.6 423.3 L775.1 423.1 L775.6 423.1 L776.2 423.4 L776.7 423.3 L777.3 423.2 L777.8 423.3 L778.3 423.4 L778.9 423.2 L779.4 423.2 L780.0 423.3 L780.5 423.1 L781.0 423.3 L781.6 423.3 L782.1 423.4 L782.7 423.2 L783.2 423.3 L783.7 423.3 L784.3 423.3 L784.8 423.3 L785.4 423.2 L785.9 423.4 L786.4 423.2 L787.0 423.4 L787.5 423.1 L788.0 423.2 L788.6 423.2 L789.1 423.2 L789.7 423.2 L790.2 423.2 L790.7 423.1 L791.3 423.3 L791.8 423.3 L792.4 423.2 L792.9 423.3 L793.4 423.2 L794.0 423.2 L794.5 423.3 L795.1 423.3 L795.6 423.3 L796.1 423.4 L796.7 423.4 L797.2 423.4 L797.8 423.3 L798.3 423.4 L798.8 423.4 L799.4 423.2 L799.9 423.2 L800.5 423.4 L801.0 423.1 L801.5 423.1 L802.1 423.4 L802.6 423.1 L803.1 423.4 L803.7 423.2 L804.2 423.2 L804.8 423.3 L805.3 423.2 L805.8 423.1 L806.4 423.3 L806.9 423.3 L807.5 423.4 L808.0 423.1 L808.5 423.3 L809.1 423.2 L809.6 423.3 L810.2 423.3 L810.7 423.4 L811.2 423.1 L811.8 423.2 L812.3 423.3 L812.9 423.3 L813.4 423.3 L813.9 423.4 L814.5 423.3 L815.0 423.2 L815.6 423.3 L816.1 423.1 L816.6 423.4 L817.2 423.3 L817.7 423.4 L818.2 423.1 L818.8 423.3 L819.3 423.1 L819.9 423.3 L820.4 423.2 L820.9 423.1 L821.5 423.2 L822.0 423.2 L822.6 423.2 L823.1 423.1 L823.6 423.4 L824.2 423.2 L824.7 423.4 L825.3 423.4 L825.8 423.3 L826.3 423.3 L826.9 423.4 L827.4 423.4 L828.0 423.4 L828.5 423.4 L829.0 423.1 L829.6 423.3 L830.1 423.2 L830.7 423.3 L831.2 423.3 L831.7 423.3 L832.3 423.2 L832.8 423.4 L833.3 423.3 L833.9 423.3 L834.4 423.2 L835.0 423.3 L835.5 423.3 L836.0 423.1 L836.6 423.2 L837.1 423.3 L837.7 423.3 L838.2 423.2 L838.7 423.2 L839.3 423.3 L839.8 423.3 L840.4 423.2 L840.9 423.3 L841.4 423.3 L842.0 423.4 L842.5 423.3 L843.1 423.3 L843.6 423.2 L844.1 423.3 L844.7 423.3 L845.2 423.3 L845.7 423.2 L846.3 423.3 L846.8 423.2 L847.4 423.2 L847.9 423.3 L848.4 423.2 L849.0 423.3 L849.5 423.2 L850.1 423.2 L850.6 423.3 L851.1 423.2 L851.7 423.3 L852.2 423.4 L852.8 423.1 L853.3 423.2 L853.8 423.2 L854.4 423.3 L854.9 423.4 L855.5 423.2 L856.0 423.3 L856.5 423.3 L857.1 423.2 L857.6 423.3 L858.2 423.3 L858.7 423.3 L859.2 423.3 L859.8 423.3 L860.3 423.1 L860.8 423.2 L861.4 423.1 L861.9 423.1 L862.5 423.3 L863.0 423.2 L863.5 423.3 L864.1 423.4 L864.6 423.3 L865.2 423.1 L865.7 423.3 L866.2 423.2 L866.8 423.1 L867.3 423.3 L867.9 423.3 L868.4 423.4 L868.9 423.2 L869.5 423.1 L870.0 423.3 L870.6 423.2 L871.1 423.3 L871.6 423.4 L872.2 423.2 L872.7 423.1 L873.3 423.3 L873.8 423.4 L874.3 423.3 L874.9 423.3 L875.4 423.3 L875.9 423.4 L876.5 423.3 L877.0 423.2 L877.6 423.1 L878.1 423.2 L878.6 423.2 L879.2 423.4 L879.7 423.3 L880.3 423.3 L880.8 423.3 L881.3 423.3 L881.9 423.2 L882.4 423.2 L883.0 423.1 L883.5 423.3 L884.0 423.1 L884.6 423.2 L885.1 423.3 L885.7 423.3 L886.2 423.3 L886.7 423.1 L887.3 423.4 L887.8 423.2 L888.4 423.1 L888.9 423.2 L889.4 423.2 L890.0 423.4 L890.5 423.3 L891.0 423.2 L891.6 423.2 L892.1 423.2 L892.7 423.1 L893.2 423.4 L893.7 423.4 L894.3 423.3 L894.8 423.4 L895.4 423.3 L895.9 423.3 L896.4 423.2 L897.0 423.2 L897.5 423.4 L898.1 423.2 L898.6 423.4 L899.1 423.1 L899.7 423.2 L900.2 423.2 L900.8 423.3 L901.3 423.2 L901.8 423.3 L902.4 423.3 L902.9 423.3 L903.4 423.3 L904.0 423.4 L904.5 423.4 L905.1 423.3 L905.6 423.4 L906.1 423.2 L906.7 423.2 L907.2 423.2 L907.8 423.3 L908.3 423.2 L908.8 423.1 L909.4 423.2 L909.9 423.1 L910.5 423.3 L911.0 423.3 L911.5 423.3 L912.1 423.3 L912.6 423.1 L913.2 423.2 L913.7 423.3 L914.2 423.3 L914.8 423.1 L915.3 423.3 L915.9 423.1 L916.4 423.1 L916.9 423.3 L917.5 423.4 L918.0 423.2 L918.5 423.1 L919.1 423.2 L919.6 423.3 L920.2 423.2 L920.7 423.3 L921.2 423.2 L921.8 423.3 L922.3 423.2 L922.9 423.4 L923.4 423.1 L923.9 423.2 L924.5 423.2 L925.0 423.3 L925.6 423.1 L926.1 423.2 L926.6 423.2 L927.2 423.1 L927.7 423.3 L928.3 423.4 L928.8 423.3 L929.3 423.2 L929.9 423.3 L930.4 423.1 L931.0 423.3 L931.5 423.2 L932.0 423.4 L932.6 423.3 L933.1 423.2 L933.6 423.2 L934.2 423.1 L934.7 423.1 L935.3 423.4 L935.8 423.3 L936.3 423.2 L936.9 423.2 L937.4 423.4 L938.0 423.4 L938.5 423.2 L939.0 423.3 L939.6 423.3 L940.1 423.1 L940.7 423.2 L941.2 423.3 L941.7 423.4 L942.3 423.3 L942.8 423.4 L943.4 423.3 L943.9 423.3 L944.4 423.3 L945.0 423.4 L945.5 423.3 L946.0 423.3 L946.6 423.2 L947.1 423.2 L947.7 423.4 L948.2 423.2 L948.7 423.2 L949.3 423.1 L949.8 423.2 L950.4 423.3 L950.9 423.1 L951.4 423.3 L952.0 423.2 L952.5 423.3 L953.1 423.3 L953.6 423.3 L954.1 423.2 L954.7 423.4 L955.2 423.3 L955.8 423.2 L956.3 423.3 L956.8 423.3 L957.4 423.3 L957.9 423.3 L958.5 423.5 L959.0 423.5 L959.5 423.4 L960.1 423.4 L960.6 423.4 L961.1 423.4 L961.7 423.7 L962.2 423.6 L962.8 423.6 L963.3 423.7 L963.8 423.8 L964.4 424.1 L964.9 424.3 L965.5 424.3 L966.0 424.7 L966.5 424.8 L967.1 425.2 L967.6 425.3 L968.2 426.0 L968.2 435.1 L967.6 433.7 L967.1 434.5 L966.5 432.6 L966.0 432.1 L965.5 432.6 L964.9 432.3 L964.4 431.9 L963.8 431.7 L963.3 430.5 L962.8 430.6 L962.2 430.2 L961.7 430.4 L961.1 429.8 L960.6 430.9 L960.1 430.8 L959.5 430.2 L959.0 429.3 L958.5 429.3 L957.9 429.1 L957.4 429.3 L956.8 429.0 L956.3 429.0 L955.8 429.9 L955.2 428.8 L954.7 428.7 L954.1 429.3 L953.6 428.6 L953.1 428.6 L952.5 429.1 L952.0 428.5 L951.4 428.5 L950.9 428.5 L950.4 428.5 L949.8 428.4 L949.3 429.0 L948.7 428.4 L948.2 428.7 L947.7 428.5 L947.1 428.4 L946.6 428.3 L946.0 428.3 L945.5 428.7 L945.0 429.2 L944.4 428.7 L943.9 428.6 L943.4 429.2 L942.8 428.6 L942.3 428.3 L941.7 428.3 L941.2 428.8 L940.7 428.2 L940.1 428.4 L939.6 428.6 L939.0 428.2 L938.5 428.2 L938.0 428.2 L937.4 428.2 L936.9 428.4 L936.3 428.6 L935.8 428.6 L935.3 428.5 L934.7 428.2 L934.2 428.4 L933.6 428.1 L933.1 428.1 L932.6 428.5 L932.0 428.1 L931.5 428.2 L931.0 428.2 L930.4 428.1 L929.9 428.3 L929.3 428.3 L928.8 428.1 L928.3 428.5 L927.7 428.0 L927.2 428.1 L926.6 428.0 L926.1 428.1 L925.6 428.6 L925.0 428.0 L924.5 428.0 L923.9 428.1 L923.4 428.0 L922.9 428.1 L922.3 428.0 L921.8 428.2 L921.2 428.0 L920.7 428.0 L920.2 428.0 L919.6 428.1 L919.1 428.0 L918.5 428.2 L918.0 428.0 L917.5 427.9 L916.9 428.0 L916.4 428.0 L915.9 428.1 L915.3 427.9 L914.8 428.0 L914.2 427.9 L913.7 428.2 L913.2 428.0 L912.6 428.3 L912.1 428.0 L911.5 428.1 L911.0 428.2 L910.5 427.9 L909.9 428.1 L909.4 428.0 L908.8 428.0 L908.3 428.2 L907.8 427.9 L907.2 427.9 L906.7 428.2 L906.1 427.9 L905.6 427.9 L905.1 428.1 L904.5 427.9 L904.0 428.0 L903.4 428.1 L902.9 428.1 L902.4 427.9 L901.8 427.9 L901.3 427.9 L900.8 427.9 L900.2 427.9 L899.7 427.9 L899.1 427.8 L898.6 427.8 L898.1 427.8 L897.5 427.9 L897.0 427.9 L896.4 427.8 L895.9 427.8 L895.4 427.8 L894.8 427.8 L894.3 427.8 L893.7 427.9 L893.2 427.8 L892.7 427.8 L892.1 427.9 L891.6 427.8 L891.0 427.8 L890.5 427.8 L890.0 427.9 L889.4 427.8 L888.9 427.8 L888.4 427.8 L887.8 427.8 L887.3 427.8 L886.7 427.8 L886.2 427.9 L885.7 427.9 L885.1 427.9 L884.6 427.9 L884.0 427.8 L883.5 427.9 L883.0 427.8 L882.4 427.8 L881.9 427.8 L881.3 427.8 L880.8 427.8 L880.3 427.8 L879.7 427.8 L879.2 427.8 L878.6 427.8 L878.1 427.8 L877.6 427.8 L877.0 427.8 L876.5 427.8 L875.9 427.8 L875.4 427.8 L874.9 427.8 L874.3 427.8 L873.8 427.8 L873.3 427.8 L872.7 427.8 L872.2 427.8 L871.6 427.8 L871.1 427.8 L870.6 427.8 L870.0 427.8 L869.5 427.8 L868.9 427.8 L868.4 427.8 L867.9 427.8 L867.3 427.8 L866.8 427.8 L866.2 427.8 L865.7 427.8 L865.2 427.8 L864.6 427.7 L864.1 427.8 L863.5 427.8 L863.0 427.7 L862.5 427.7 L861.9 427.7 L861.4 427.8 L860.8 427.7 L860.3 427.7 L859.8 427.7 L859.2 427.7 L858.7 427.7 L858.2 427.7 L857.6 427.8 L857.1 427.7 L856.5 427.7 L856.0 427.7 L855.5 427.8 L854.9 427.8 L854.4 427.7 L853.8 427.7 L853.3 427.8 L852.8 427.7 L852.2 427.7 L851.7 427.7 L851.1 427.8 L850.6 427.7 L850.1 427.7 L849.5 427.8 L849.0 427.7 L848.4 427.7 L847.9 427.7 L847.4 427.7 L846.8 427.8 L846.3 427.7 L845.7 427.7 L845.2 427.7 L844.7 427.7 L844.1 427.7 L843.6 427.7 L843.1 427.8 L842.5 427.7 L842.0 427.7 L841.4 427.7 L840.9 427.8 L840.4 427.8 L839.8 427.7 L839.3 427.7 L838.7 427.7 L838.2 427.7 L837.7 427.7 L837.1 427.7 L836.6 427.7 L836.0 427.8 L835.5 427.7 L835.0 427.7 L834.4 427.7 L833.9 427.7 L833.3 427.7 L832.8 427.7 L832.3 427.7 L831.7 427.7 L831.2 427.7 L830.7 427.7 L830.1 427.7 L829.6 427.7 L829.0 427.7 L828.5 427.7 L828.0 427.7 L827.4 427.7 L826.9 427.7 L826.3 427.7 L825.8 427.7 L825.3 427.7 L824.7 427.7 L824.2 427.7 L823.6 427.7 L823.1 427.7 L822.6 427.7 L822.0 427.7 L821.5 427.7 L820.9 427.8 L820.4 427.7 L819.9 427.7 L819.3 427.7 L818.8 427.7 L818.2 427.7 L817.7 427.7 L817.2 427.7 L816.6 427.7 L816.1 427.7 L815.6 427.7 L815.0 427.7 L814.5 427.7 L813.9 427.7 L813.4 427.7 L812.9 427.7 L812.3 427.7 L811.8 427.7 L811.2 427.7 L810.7 427.7 L810.2 427.7 L809.6 427.7 L809.1 427.7 L808.5 427.7 L808.0 427.7 L807.5 427.7 L806.9 427.7 L806.4 427.7 L805.8 427.7 L805.3 427.7 L804.8 427.7 L804.2 427.7 L803.7 427.7 L803.1 427.7 L802.6 427.7 L802.1 427.7 L801.5 427.7 L801.0 427.7 L800.5 427.7 L799.9 427.7 L799.4 427.7 L798.8 427.7 L798.3 427.7 L797.8 427.7 L797.2 427.7 L796.7 427.7 L796.1 427.7 L795.6 427.7 L795.1 427.7 L794.5 427.7 L794.0 427.7 L793.4 427.7 L792.9 427.7 L792.4 427.7 L791.8 427.7 L791.3 427.7 L790.7 427.7 L790.2 427.7 L789.7 427.7 L789.1 427.7 L788.6 427.7 L788.0 427.7 L787.5 427.7 L787.0 427.7 L786.4 427.7 L785.9 427.7 L785.4 427.7 L784.8 427.7 L784.3 427.7 L783.7 427.7 L783.2 427.7 L782.7 427.7 L782.1 427.7 L781.6 427.7 L781.0 427.7 L780.5 427.7 L780.0 427.7 L779.4 427.7 L778.9 427.7 L778.3 427.7 L777.8 427.7 L777.3 427.7 L776.7 427.7 L776.2 427.7 L775.6 427.7 L775.1 427.7 L774.6 427.7 L774.0 427.7 L773.5 427.7 L773.0 427.7 L772.4 427.7 L771.9 427.7 L771.3 427.7 L770.8 427.7 L770.3 427.7 L769.7 427.7 L769.2 427.7 L768.6 427.7 L768.1 427.7 L767.6 427.7 L767.0 427.7 L766.5 427.7 L765.9 427.7 L765.4 427.8 L764.9 427.7 L764.3 427.7 L763.8 427.7 L763.2 427.7 L762.7 427.7 L762.2 427.7 L761.6 427.7 L761.1 427.8 L760.5 427.7 L760.0 427.8 L759.5 427.7 L758.9 427.7 L758.4 427.7 L757.9 427.7 L757.3 427.7 L756.8 427.7 L756.2 427.8 L755.7 427.7 L755.2 427.7 L754.6 427.7 L754.1 427.7 L753.5 427.7 L753.0 427.7 L752.5 427.7 L751.9 427.7 L751.4 427.7 L750.8 427.7 L750.3 427.7 L749.8 427.7 L749.2 427.7 L748.7 427.7 L748.1 427.8 L747.6 427.7 L747.1 427.7 L746.5 427.7 L746.0 427.7 L745.4 427.7 L744.9 427.8 L744.4 427.7 L743.8 427.7 L743.3 427.7 L742.8 427.7 L742.2 427.7 L741.7 427.7 L741.1 427.7 L740.6 427.8 L740.1 427.7 L739.5 427.8 L739.0 427.8 L738.4 427.8 L737.9 427.8 L737.4 427.7 L736.8 427.7 L736.3 427.7 L735.7 427.7 L735.2 427.8 L734.7 427.7 L734.1 427.7 L733.6 427.8 L733.0 427.7 L732.5 427.8 L732.0 427.8 L731.4 427.8 L730.9 427.8 L730.4 427.8 L729.8 427.8 L729.3 427.8 L728.7 427.8 L728.2 427.8 L727.7 427.8 L727.1 427.8 L726.6 427.8 L726.0 427.8 L725.5 427.8 L725.0 427.8 L724.4 427.8 L723.9 427.8 L723.3 427.8 L722.8 427.8 L722.3 427.8 L721.7 427.8 L721.2 427.8 L720.6 427.8 L720.1 427.8 L719.6 427.8 L719.0 427.8 L718.5 427.9 L717.9 427.8 L717.4 427.8 L716.9 427.8 L716.3 427.8 L715.8 427.8 L715.3 427.8 L714.7 427.8 L714.2 427.8 L713.6 427.8 L713.1 427.8 L712.6 427.8 L712.0 427.8 L711.5 427.8 L710.9 427.8 L710.4 427.9 L709.9 427.8 L709.3 427.8 L708.8 427.9 L708.2 427.8 L707.7 427.8 L707.2 427.8 L706.6 427.9 L706.1 427.8 L705.5 427.8 L705.0 427.9 L704.5 427.8 L703.9 427.8 L703.4 427.9 L702.8 427.8 L702.3 427.9 L701.8 427.9 L701.2 427.9 L700.7 428.0 L700.2 428.0 L699.6 427.8 L699.1 427.8 L698.5 427.9 L698.0 428.0 L697.5 427.8 L696.9 427.8 L696.4 427.9 L695.8 427.9 L695.3 427.9 L694.8 428.1 L694.2 427.9 L693.7 427.9 L693.1 428.1 L692.6 427.9 L692.1 427.9 L691.5 427.9 L691.0 427.9 L690.4 427.9 L689.9 428.1 L689.4 427.9 L688.8 427.9 L688.3 428.1 L687.7 427.9 L687.2 427.9 L686.7 427.9 L686.1 428.3 L685.6 428.1 L685.1 427.9 L684.5 427.9 L684.0 427.9 L683.4 428.3 L682.9 428.1 L682.4 427.9 L681.8 428.1 L681.3 427.9 L680.7 427.9 L680.2 427.9 L679.7 427.9 L679.1 428.0 L678.6 428.0 L678.0 428.0 L677.5 428.2 L677.0 428.1 L676.4 428.2 L675.9 428.0 L675.3 428.0 L674.8 428.0 L674.3 428.2 L673.7 428.5 L673.2 428.5 L672.7 428.0 L672.1 428.5 L671.6 428.4 L671.0 428.1 L670.5 428.6 L670.0 428.0 L669.4 428.0 L668.9 428.0 L668.3 428.1 L667.8 428.3 L667.3 428.1 L666.7 428.1 L666.2 428.1 L665.6 428.8 L665.1 428.1 L664.6 428.5 L664.0 428.1 L663.5 428.4 L662.9 428.3 L662.4 428.2 L661.9 428.1 L661.3 428.1 L660.8 428.6 L660.2 428.2 L659.7 428.2 L659.2 428.2 L658.6 428.5 L658.1 428.2 L657.6 428.2 L657.0 428.3 L656.5 428.2 L655.9 428.2 L655.4 428.6 L654.9 428.3 L654.3 428.3 L653.8 428.3 L653.2 428.4 L652.7 428.6 L652.2 428.6 L651.6 428.4 L651.1 428.4 L650.5 429.2 L650.0 428.5 L649.5 428.4 L648.9 428.6 L648.4 428.5 L647.8 429.4 L647.3 428.5 L646.8 428.5 L646.2 428.8 L645.7 428.8 L645.1 428.6 L644.6 428.9 L644.1 429.3 L643.5 429.8 L643.0 429.1 L642.5 428.8 L641.9 429.8 L641.4 428.9 L640.8 428.9 L640.3 429.0 L639.8 429.9 L639.2 429.5 L638.7 429.1 L638.1 429.9 L637.6 429.7 L637.1 429.7 L636.5 429.6 L636.0 429.8 L635.4 430.5 L634.9 429.8 L634.4 430.1 L633.8 430.1 L633.3 431.2 L632.7 430.3 L632.2 430.7 L631.7 430.8 L631.1 430.9 L630.6 431.6 L630.0 431.4 L629.5 431.8 L629.0 432.2 L628.4 432.2 L627.9 434.1 L627.4 433.9 L626.8 433.4 L626.3 434.8 L625.7 434.6 L625.2 434.7 L624.7 435.6 L624.1 436.1 L623.6 436.6 L623.0 437.4 L622.5 438.9Z" fill="#68e8f4" stroke="#68e8f4" stroke-width="0.8" stroke-linejoin="round"/><circle cx="954.8" cy="430.3" r="1.0" fill="#68e8f4" opacity="0.55"/><circle cx="946.7" cy="433.3" r="1.0" fill="#68e8f4" opacity="0.55"/><circle cx="960.1" cy="433.5" r="1.0" fill="#68e8f4" opacity="0.55"/><circle cx="945.3" cy="432.7" r="1.0" fill="#68e8f4" opacity="0.55"/><circle cx="702.5" cy="429.4" r="1.0" fill="#68e8f4" opacity="0.55"/><circle cx="943.0" cy="442.0" r="1.0" fill="#68e8f4" opacity="0.55"/><circle cx="946.0" cy="432.5" r="1.0" fill="#68e8f4" opacity="0.55"/><circle cx="683.7" cy="432.8" r="1.0" fill="#68e8f4" opacity="0.55"/><circle cx="953.5" cy="434.9" r="1.0" fill="#68e8f4" opacity="0.55"/><circle cx="637.0" cy="433.1" r="1.0" fill="#68e8f4" opacity="0.55"/><circle cx="639.6" cy="431.2" r="1.0" fill="#68e8f4" opacity="0.55"/><circle cx="635.8" cy="433.5" r="1.0" fill="#68e8f4" opacity="0.55"/><circle cx="951.4" cy="430.7" r="1.0" fill="#68e8f4" opacity="0.55"/><circle cx="940.4" cy="430.1" r="1.0" fill="#68e8f4" opacity="0.55"/><circle cx="661.4" cy="432.1" r="1.0" fill="#68e8f4" opacity="0.55"/><circle cx="641.9" cy="432.0" r="1.0" fill="#68e8f4" opacity="0.55"/><circle cx="625.1" cy="438.0" r="1.0" fill="#68e8f4" opacity="0.55"/><circle cx="633.9" cy="434.4" r="1.0" fill="#68e8f4" opacity="0.55"/><circle cx="635.7" cy="434.4" r="1.0" fill="#68e8f4" opacity="0.55"/><circle cx="657.8" cy="433.9" r="1.0" fill="#68e8f4" opacity="0.55"/><circle cx="622.5" cy="445.5" r="1.0" fill="#68e8f4" opacity="0.55"/><circle cx="709.3" cy="429.5" r="1.0" fill="#68e8f4" opacity="0.55"/><circle cx="648.9" cy="433.7" r="1.0" fill="#68e8f4" opacity="0.55"/><circle cx="636.3" cy="432.6" r="1.0" fill="#68e8f4" opacity="0.55"/><circle cx="631.8" cy="441.3" r="1.0" fill="#68e8f4" opacity="0.55"/><circle cx="641.3" cy="431.6" r="1.0" fill="#68e8f4" opacity="0.55"/><circle cx="649.7" cy="431.6" r="1.0" fill="#68e8f4" opacity="0.55"/><circle cx="924.3" cy="429.8" r="1.0" fill="#68e8f4" opacity="0.55"/><circle cx="648.2" cy="430.0" r="1.0" fill="#68e8f4" opacity="0.55"/><circle cx="964.3" cy="436.9" r="1.0" fill="#68e8f4" opacity="0.55"/><circle cx="639.7" cy="432.9" r="1.0" fill="#68e8f4" opacity="0.55"/><circle cx="630.2" cy="435.7" r="1.0" fill="#68e8f4" opacity="0.55"/><circle cx="951.8" cy="433.0" r="1.0" fill="#68e8f4" opacity="0.55"/><circle cx="948.8" cy="430.0" r="1.0" fill="#68e8f4" opacity="0.55"/><circle cx="649.5" cy="430.7" r="1.0" fill="#68e8f4" opacity="0.55"/><circle cx="638.0" cy="433.3" r="1.0" fill="#68e8f4" opacity="0.55"/><circle cx="943.2" cy="431.5" r="1.0" fill="#68e8f4" opacity="0.55"/><circle cx="635.8" cy="442.5" r="1.0" fill="#68e8f4" opacity="0.55"/><circle cx="889.4" cy="429.8" r="1.0" fill="#68e8f4" opacity="0.55"/><circle cx="627.4" cy="434.9" r="1.0" fill="#68e8f4" opacity="0.55"/><circle cx="955.2" cy="432.3" r="1.0" fill="#68e8f4" opacity="0.55"/><circle cx="966.1" cy="433.6" r="1.0" fill="#68e8f4" opacity="0.55"/><circle cx="957.6" cy="431.7" r="1.0" fill="#68e8f4" opacity="0.55"/><circle cx="957.6" cy="435.2" r="1.0" fill="#68e8f4" opacity="0.55"/><circle cx="900.0" cy="429.9" r="1.0" fill="#68e8f4" opacity="0.55"/><circle cx="630.9" cy="435.0" r="1.0" fill="#68e8f4" opacity="0.55"/><circle cx="960.3" cy="431.4" r="1.0" fill="#68e8f4" opacity="0.55"/><circle cx="933.0" cy="430.6" r="1.0" fill="#68e8f4" opacity="0.55"/><circle cx="936.9" cy="434.2" r="1.0" fill="#68e8f4" opacity="0.55"/><circle cx="944.9" cy="429.7" r="1.0" fill="#68e8f4" opacity="0.55"/><circle cx="626.5" cy="435.8" r="1.0" fill="#68e8f4" opacity="0.55"/><circle cx="658.7" cy="438.6" r="1.0" fill="#68e8f4" opacity="0.55"/><circle cx="666.9" cy="430.5" r="1.0" fill="#68e8f4" opacity="0.55"/><circle cx="624.3" cy="439.5" r="1.0" fill="#68e8f4" opacity="0.55"/><circle cx="648.0" cy="430.1" r="1.0" fill="#68e8f4" opacity="0.55"/><circle cx="631.3" cy="434.4" r="1.0" fill="#68e8f4" opacity="0.55"/><circle cx="906.0" cy="429.4" r="1.0" fill="#68e8f4" opacity="0.55"/><circle cx="629.9" cy="435.0" r="1.0" fill="#68e8f4" opacity="0.55"/><circle cx="629.0" cy="435.0" r="1.0" fill="#68e8f4" opacity="0.55"/><circle cx="961.9" cy="436.0" r="1.0" fill="#68e8f4" opacity="0.55"/><circle cx="626.5" cy="446.5" r="1.0" fill="#68e8f4" opacity="0.55"/><circle cx="685.3" cy="429.9" r="1.0" fill="#68e8f4" opacity="0.55"/><circle cx="644.3" cy="430.1" r="1.0" fill="#68e8f4" opacity="0.55"/><circle cx="922.3" cy="429.8" r="1.0" fill="#68e8f4" opacity="0.55"/><circle cx="963.6" cy="435.4" r="1.0" fill="#68e8f4" opacity="0.55"/><circle cx="670.7" cy="432.0" r="1.0" fill="#68e8f4" opacity="0.55"/><circle cx="916.3" cy="429.6" r="1.0" fill="#68e8f4" opacity="0.55"/><circle cx="941.6" cy="430.1" r="1.0" fill="#68e8f4" opacity="0.55"/><circle cx="659.7" cy="432.3" r="1.0" fill="#68e8f4" opacity="0.55"/><circle cx="647.8" cy="448.6" r="1.0" fill="#68e8f4" opacity="0.55"/><circle cx="625.3" cy="438.3" r="1.0" fill="#68e8f4" opacity="0.55"/><circle cx="964.2" cy="433.6" r="1.0" fill="#68e8f4" opacity="0.55"/><circle cx="936.7" cy="433.7" r="1.0" fill="#68e8f4" opacity="0.55"/><circle cx="944.8" cy="432.5" r="1.0" fill="#68e8f4" opacity="0.55"/><circle cx="950.0" cy="430.1" r="1.0" fill="#68e8f4" opacity="0.55"/><circle cx="938.5" cy="433.5" r="1.0" fill="#68e8f4" opacity="0.55"/><circle cx="693.7" cy="429.6" r="1.0" fill="#68e8f4" opacity="0.55"/><circle cx="669.9" cy="429.4" r="1.0" fill="#68e8f4" opacity="0.55"/><circle cx="658.0" cy="429.8" r="1.0" fill="#68e8f4" opacity="0.55"/><circle cx="968.0" cy="435.4" r="1.0" fill="#68e8f4" opacity="0.55"/><circle cx="657.9" cy="430.1" r="1.0" fill="#68e8f4" opacity="0.55"/><circle cx="635.4" cy="431.6" r="1.0" fill="#68e8f4" opacity="0.55"/><circle cx="635.1" cy="433.6" r="1.0" fill="#68e8f4" opacity="0.55"/><circle cx="624.4" cy="440.2" r="1.0" fill="#68e8f4" opacity="0.55"/><circle cx="960.1" cy="432.8" r="1.0" fill="#68e8f4" opacity="0.55"/><circle cx="664.4" cy="430.5" r="1.0" fill="#68e8f4" opacity="0.55"/><circle cx="683.9" cy="429.8" r="1.0" fill="#68e8f4" opacity="0.55"/><circle cx="625.4" cy="439.5" r="1.0" fill="#68e8f4" opacity="0.55"/><circle cx="660.1" cy="429.9" r="1.0" fill="#68e8f4" opacity="0.55"/><circle cx="929.8" cy="429.5" r="1.0" fill="#68e8f4" opacity="0.55"/><circle cx="893.4" cy="429.4" r="1.0" fill="#68e8f4" opacity="0.55"/><circle cx="626.3" cy="435.8" r="1.0" fill="#68e8f4" opacity="0.55"/><circle cx="950.1" cy="430.7" r="1.0" fill="#68e8f4" opacity="0.55"/><circle cx="956.3" cy="432.8" r="1.0" fill="#68e8f4" opacity="0.55"/><circle cx="625.8" cy="436.1" r="1.0" fill="#68e8f4" opacity="0.55"/><circle cx="942.4" cy="435.5" r="1.0" fill="#68e8f4" opacity="0.55"/><circle cx="925.0" cy="437.4" r="1.0" fill="#68e8f4" opacity="0.55"/><circle cx="637.9" cy="433.0" r="1.0" fill="#68e8f4" opacity="0.55"/><circle cx="641.7" cy="437.1" r="1.0" fill="#68e8f4" opacity="0.55"/><circle cx="964.1" cy="432.2" r="1.0" fill="#68e8f4" opacity="0.55"/><circle cx="636.7" cy="432.5" r="1.0" fill="#68e8f4" opacity="0.55"/><circle cx="965.3" cy="443.9" r="1.0" fill="#68e8f4" opacity="0.55"/><circle cx="963.4" cy="440.3" r="1.0" fill="#68e8f4" opacity="0.55"/><circle cx="944.3" cy="430.7" r="1.0" fill="#68e8f4" opacity="0.55"/><circle cx="916.5" cy="429.7" r="1.0" fill="#68e8f4" opacity="0.55"/><circle cx="683.3" cy="430.0" r="1.0" fill="#68e8f4" opacity="0.55"/><circle cx="666.5" cy="433.2" r="1.0" fill="#68e8f4" opacity="0.55"/><circle cx="929.5" cy="430.1" r="1.0" fill="#68e8f4" opacity="0.55"/><circle cx="691.0" cy="431.1" r="1.0" fill="#68e8f4" opacity="0.55"/><circle cx="957.9" cy="433.7" r="1.0" fill="#68e8f4" opacity="0.55"/><circle cx="641.9" cy="431.7" r="1.0" fill="#68e8f4" opacity="0.55"/><circle cx="897.7" cy="431.0" r="1.0" fill="#68e8f4" opacity="0.55"/><circle cx="913.2" cy="429.4" r="1.0" fill="#68e8f4" opacity="0.55"/><circle cx="934.9" cy="429.5" r="1.0" fill="#68e8f4" opacity="0.55"/><circle cx="634.6" cy="442.3" r="1.0" fill="#68e8f4" opacity="0.55"/><circle cx="902.4" cy="430.2" r="1.0" fill="#68e8f4" opacity="0.55"/><circle cx="689.7" cy="432.1" r="1.0" fill="#68e8f4" opacity="0.55"/><circle cx="627.9" cy="435.7" r="1.0" fill="#68e8f4" opacity="0.55"/><circle cx="963.6" cy="434.5" r="1.0" fill="#68e8f4" opacity="0.55"/><circle cx="933.0" cy="430.4" r="1.0" fill="#68e8f4" opacity="0.55"/><circle cx="959.0" cy="432.4" r="1.0" fill="#68e8f4" opacity="0.55"/><circle cx="914.8" cy="430.6" r="1.0" fill="#68e8f4" opacity="0.55"/><circle cx="938.1" cy="430.4" r="1.0" fill="#68e8f4" opacity="0.55"/><circle cx="661.1" cy="432.2" r="1.0" fill="#68e8f4" opacity="0.55"/><circle cx="643.3" cy="430.3" r="1.0" fill="#68e8f4" opacity="0.55"/><circle cx="662.4" cy="431.4" r="1.0" fill="#68e8f4" opacity="0.55"/><circle cx="624.4" cy="445.6" r="1.0" fill="#68e8f4" opacity="0.55"/><circle cx="671.9" cy="429.5" r="1.0" fill="#68e8f4" opacity="0.55"/><circle cx="671.6" cy="430.4" r="1.0" fill="#68e8f4" opacity="0.55"/><circle cx="672.9" cy="431.0" r="1.0" fill="#68e8f4" opacity="0.55"/><circle cx="633.6" cy="439.7" r="1.0" fill="#68e8f4" opacity="0.55"/><circle cx="939.5" cy="430.1" r="1.0" fill="#68e8f4" opacity="0.55"/><circle cx="935.7" cy="435.3" r="1.0" fill="#68e8f4" opacity="0.55"/><circle cx="936.4" cy="429.5" r="1.0" fill="#68e8f4" opacity="0.55"/><circle cx="646.8" cy="429.8" r="1.0" fill="#68e8f4" opacity="0.55"/><circle cx="959.7" cy="430.8" r="1.0" fill="#68e8f4" opacity="0.55"/><circle cx="954.1" cy="430.6" r="1.0" fill="#68e8f4" opacity="0.55"/><circle cx="946.3" cy="431.0" r="1.0" fill="#68e8f4" opacity="0.55"/><circle cx="646.4" cy="429.9" r="1.0" fill="#68e8f4" opacity="0.55"/><circle cx="941.4" cy="435.6" r="1.0" fill="#68e8f4" opacity="0.55"/><circle cx="623.6" cy="445.3" r="1.15" fill="#68e8f4" opacity="0.72"/><circle cx="627.2" cy="445.9" r="1.15" fill="#68e8f4" opacity="0.72"/><circle cx="623.0" cy="450.6" r="1.15" fill="#68e8f4" opacity="0.72"/><circle cx="623.0" cy="453.3" r="1.15" fill="#68e8f4" opacity="0.72"/><circle cx="628.9" cy="460.4" r="1.15" fill="#68e8f4" opacity="0.72"/><circle cx="634.8" cy="458.9" r="1.15" fill="#68e8f4" opacity="0.72"/><circle cx="626.0" cy="472.0" r="1.15" fill="#68e8f4" opacity="0.72"/><circle cx="652.0" cy="476.4" r="1.15" fill="#68e8f4" opacity="0.72"/><circle cx="623.0" cy="482.0" r="1.15" fill="#68e8f4" opacity="0.72"/><circle cx="627.3" cy="496.9" r="1.15" fill="#68e8f4" opacity="0.72"/><circle cx="675.4" cy="444.6" r="1.15" fill="#68e8f4" opacity="0.72"/><circle cx="961.0" cy="444.5" r="1.15" fill="#68e8f4" opacity="0.72"/><circle cx="961.0" cy="450.0" r="1.15" fill="#68e8f4" opacity="0.72"/><circle cx="942.0" cy="456.0" r="1.15" fill="#68e8f4" opacity="0.72"/><circle cx="968.0" cy="459.0" r="1.15" fill="#68e8f4" opacity="0.72"/><circle cx="968.0" cy="472.5" r="1.15" fill="#68e8f4" opacity="0.72"/><circle cx="623.0" cy="540.0" r="1.15" fill="#68e8f4" opacity="0.72"/><circle cx="623.0" cy="545.6" r="1.15" fill="#68e8f4" opacity="0.72"/><circle cx="968.0" cy="669.0" r="1.15" fill="#68e8f4" opacity="0.72"/><circle cx="627.0" cy="514.0" r="1.15" fill="#ead03e" opacity="0.72"/><circle cx="623.0" cy="606.6" r="1.15" fill="#ead03e" opacity="0.72"/><circle cx="623.0" cy="609.0" r="1.15" fill="#ead03e" opacity="0.72"/><circle cx="625.0" cy="548.0" r="1.15" fill="#ead03e" opacity="0.72"/><circle cx="651.0" cy="549.5" r="1.15" fill="#ead03e" opacity="0.72"/><circle cx="968.0" cy="711.0" r="1.15" fill="#ead03e" opacity="0.72"/><circle cx="968.0" cy="553.0" r="1.15" fill="#ead03e" opacity="0.72"/><circle cx="961.0" cy="558.0" r="1.15" fill="#ead03e" opacity="0.72"/><circle cx="941.0" cy="556.0" r="1.15" fill="#ead03e" opacity="0.72"/><circle cx="968.0" cy="577.0" r="1.15" fill="#ead03e" opacity="0.72"/><circle cx="623.0" cy="425.5" r="1.15" fill="#ead03e" opacity="0.72"/><circle cx="968.0" cy="425.5" r="1.15" fill="#ead03e" opacity="0.72"/><circle cx="968.0" cy="623.9" r="1.15" fill="#e862b4" opacity="0.72"/><path d="M622.5 562.8 L623.0 562.6 L623.6 562.5 L624.1 562.4 L624.7 562.4 L625.2 562.8 L625.7 562.7 L626.3 561.7 L626.8 562.4 L627.4 562.8 L627.9 562.7 L628.4 562.0 L629.0 561.9 L629.5 562.3 L630.0 562.1 L630.6 562.6 L631.1 562.5 L631.7 561.9 L632.2 562.2 L632.7 562.5 L633.3 562.5 L633.8 562.4 L634.4 562.3 L634.9 562.6 L635.4 562.6 L636.0 562.0 L636.5 562.8 L637.1 562.8 L637.6 562.5 L638.1 562.1 L638.7 562.4 L639.2 562.7 L639.8 562.1 L640.3 562.3 L640.8 562.2 L641.4 562.8 L641.9 562.8 L642.5 562.1 L643.0 562.8 L643.5 562.8 L644.1 562.6 L644.6 562.3 L645.1 562.2 L645.7 562.8 L646.2 562.2 L646.8 562.7 L647.3 562.8 L647.8 562.6 L648.4 562.4 L648.9 562.5 L649.5 562.7 L650.0 562.6 L650.5 562.8 L651.1 562.3 L651.6 562.8 L652.2 562.4 L652.7 562.7 L653.2 562.6 L653.8 562.6 L654.3 562.4 L654.9 562.4 L655.4 562.7 L655.9 562.5 L656.5 562.4 L657.0 562.7 L657.6 562.5 L658.1 562.6 L658.6 562.7 L659.2 562.7 L659.7 562.8 L660.2 562.7 L660.8 562.6 L661.3 562.6 L661.9 562.6 L662.4 562.5 L662.9 562.8 L663.5 562.8 L664.0 562.7 L664.6 562.7 L665.1 562.8 L665.6 562.7 L666.2 562.7 L666.7 562.6 L667.3 562.8 L667.8 562.7 L668.3 562.6 L668.9 562.7 L669.4 562.8 L670.0 562.7 L670.5 562.6 L671.0 562.6 L671.6 562.8 L672.1 562.6 L672.7 562.7 L673.2 562.6 L673.7 562.7 L674.3 562.8 L674.8 562.6 L675.3 562.8 L675.9 562.6 L676.4 562.7 L677.0 562.7 L677.5 562.6 L678.0 562.8 L678.6 562.8 L679.1 562.7 L679.7 562.6 L680.2 562.7 L680.7 562.8 L681.3 562.8 L681.8 562.7 L682.4 562.6 L682.9 562.6 L683.4 562.8 L684.0 562.7 L684.5 562.7 L685.1 562.8 L685.6 562.8 L686.1 562.8 L686.7 562.7 L687.2 562.7 L687.7 562.8 L688.3 562.8 L688.8 562.8 L689.4 562.7 L689.9 562.7 L690.4 562.8 L691.0 562.7 L691.5 562.8 L692.1 562.7 L692.6 562.7 L693.1 562.7 L693.7 562.7 L694.2 562.7 L694.8 562.8 L695.3 562.7 L695.8 562.8 L696.4 562.8 L696.9 562.8 L697.5 562.8 L698.0 562.8 L698.5 562.7 L699.1 562.7 L699.6 562.8 L700.2 562.7 L700.7 562.8 L701.2 562.8 L701.8 562.7 L702.3 562.7 L702.8 562.8 L703.4 562.7 L703.9 562.8 L704.5 562.7 L705.0 562.7 L705.5 562.8 L706.1 562.8 L706.6 562.8 L707.2 562.7 L707.7 562.8 L708.2 562.8 L708.8 562.8 L709.3 562.8 L709.9 562.7 L710.4 562.8 L710.9 562.8 L711.5 562.8 L712.0 562.7 L712.6 562.8 L713.1 562.7 L713.6 562.7 L714.2 562.8 L714.7 562.7 L715.3 562.8 L715.8 562.8 L716.3 562.8 L716.9 562.8 L717.4 562.8 L717.9 562.7 L718.5 562.8 L719.0 562.8 L719.6 562.8 L720.1 562.7 L720.6 562.7 L721.2 562.8 L721.7 562.7 L722.3 562.8 L722.8 562.7 L723.3 562.7 L723.9 562.7 L724.4 562.7 L725.0 562.7 L725.5 562.7 L726.0 562.8 L726.6 562.8 L727.1 562.7 L727.7 562.8 L728.2 562.7 L728.7 562.7 L729.3 562.7 L729.8 562.8 L730.4 562.8 L730.9 562.7 L731.4 562.8 L732.0 562.7 L732.5 562.8 L733.0 562.8 L733.6 562.8 L734.1 562.8 L734.7 562.8 L735.2 562.7 L735.7 562.7 L736.3 562.8 L736.8 562.7 L737.4 562.8 L737.9 562.7 L738.4 562.8 L739.0 562.7 L739.5 562.8 L740.1 562.8 L740.6 562.8 L741.1 562.7 L741.7 562.8 L742.2 562.8 L742.8 562.7 L743.3 562.7 L743.8 562.8 L744.4 562.8 L744.9 562.7 L745.4 562.7 L746.0 562.7 L746.5 562.7 L747.1 562.8 L747.6 562.7 L748.1 562.7 L748.7 562.8 L749.2 562.7 L749.8 562.8 L750.3 562.8 L750.8 562.8 L751.4 562.8 L751.9 562.8 L752.5 562.8 L753.0 562.8 L753.5 562.8 L754.1 562.7 L754.6 562.7 L755.2 562.8 L755.7 562.7 L756.2 562.8 L756.8 562.8 L757.3 562.8 L757.9 562.7 L758.4 562.7 L758.9 562.8 L759.5 562.7 L760.0 562.7 L760.5 562.8 L761.1 562.7 L761.6 562.8 L762.2 562.8 L762.7 562.8 L763.2 562.7 L763.8 562.7 L764.3 562.7 L764.9 562.7 L765.4 562.8 L765.9 562.8 L766.5 562.8 L767.0 562.7 L767.6 562.8 L768.1 562.7 L768.6 562.8 L769.2 562.7 L769.7 562.8 L770.3 562.7 L770.8 562.8 L771.3 562.7 L771.9 562.8 L772.4 562.8 L773.0 562.8 L773.5 562.8 L774.0 562.7 L774.6 562.7 L775.1 562.8 L775.6 562.8 L776.2 562.8 L776.7 562.7 L777.3 562.8 L777.8 562.8 L778.3 562.8 L778.9 562.8 L779.4 562.7 L780.0 562.8 L780.5 562.8 L781.0 562.8 L781.6 562.8 L782.1 562.8 L782.7 562.8 L783.2 562.8 L783.7 562.8 L784.3 562.7 L784.8 562.8 L785.4 562.7 L785.9 562.7 L786.4 562.8 L787.0 562.7 L787.5 562.7 L788.0 562.8 L788.6 562.7 L789.1 562.7 L789.7 562.7 L790.2 562.7 L790.7 562.8 L791.3 562.8 L791.8 562.8 L792.4 562.7 L792.9 562.7 L793.4 562.7 L794.0 562.7 L794.5 562.7 L795.1 562.8 L795.6 562.8 L796.1 562.8 L796.7 562.7 L797.2 562.7 L797.8 562.8 L798.3 562.8 L798.8 562.8 L799.4 562.7 L799.9 562.8 L800.5 562.8 L801.0 562.8 L801.5 562.7 L802.1 562.8 L802.6 562.8 L803.1 562.8 L803.7 562.7 L804.2 562.8 L804.8 562.7 L805.3 562.8 L805.8 562.8 L806.4 562.7 L806.9 562.8 L807.5 562.8 L808.0 562.7 L808.5 562.8 L809.1 562.7 L809.6 562.7 L810.2 562.8 L810.7 562.8 L811.2 562.8 L811.8 562.7 L812.3 562.8 L812.9 562.7 L813.4 562.7 L813.9 562.7 L814.5 562.7 L815.0 562.7 L815.6 562.8 L816.1 562.8 L816.6 562.7 L817.2 562.8 L817.7 562.8 L818.2 562.8 L818.8 562.8 L819.3 562.8 L819.9 562.7 L820.4 562.8 L820.9 562.8 L821.5 562.7 L822.0 562.8 L822.6 562.7 L823.1 562.7 L823.6 562.8 L824.2 562.8 L824.7 562.7 L825.3 562.8 L825.8 562.7 L826.3 562.8 L826.9 562.8 L827.4 562.7 L828.0 562.7 L828.5 562.8 L829.0 562.7 L829.6 562.7 L830.1 562.7 L830.7 562.8 L831.2 562.7 L831.7 562.8 L832.3 562.7 L832.8 562.8 L833.3 562.7 L833.9 562.7 L834.4 562.7 L835.0 562.7 L835.5 562.8 L836.0 562.8 L836.6 562.8 L837.1 562.8 L837.7 562.7 L838.2 562.8 L838.7 562.8 L839.3 562.7 L839.8 562.8 L840.4 562.8 L840.9 562.8 L841.4 562.8 L842.0 562.8 L842.5 562.7 L843.1 562.7 L843.6 562.8 L844.1 562.8 L844.7 562.7 L845.2 562.7 L845.7 562.7 L846.3 562.7 L846.8 562.7 L847.4 562.7 L847.9 562.8 L848.4 562.8 L849.0 562.8 L849.5 562.8 L850.1 562.7 L850.6 562.7 L851.1 562.8 L851.7 562.7 L852.2 562.7 L852.8 562.8 L853.3 562.7 L853.8 562.8 L854.4 562.8 L854.9 562.7 L855.5 562.8 L856.0 562.8 L856.5 562.8 L857.1 562.7 L857.6 562.7 L858.2 562.8 L858.7 562.7 L859.2 562.8 L859.8 562.7 L860.3 562.8 L860.8 562.8 L861.4 562.7 L861.9 562.7 L862.5 562.7 L863.0 562.8 L863.5 562.8 L864.1 562.8 L864.6 562.7 L865.2 562.8 L865.7 562.8 L866.2 562.8 L866.8 562.7 L867.3 562.7 L867.9 562.7 L868.4 562.7 L868.9 562.8 L869.5 562.8 L870.0 562.7 L870.6 562.8 L871.1 562.7 L871.6 562.8 L872.2 562.8 L872.7 562.8 L873.3 562.8 L873.8 562.7 L874.3 562.7 L874.9 562.8 L875.4 562.8 L875.9 562.7 L876.5 562.7 L877.0 562.7 L877.6 562.8 L878.1 562.8 L878.6 562.8 L879.2 562.8 L879.7 562.7 L880.3 562.8 L880.8 562.8 L881.3 562.7 L881.9 562.7 L882.4 562.8 L883.0 562.7 L883.5 562.7 L884.0 562.8 L884.6 562.7 L885.1 562.7 L885.7 562.7 L886.2 562.8 L886.7 562.8 L887.3 562.7 L887.8 562.8 L888.4 562.8 L888.9 562.8 L889.4 562.8 L890.0 562.7 L890.5 562.7 L891.0 562.7 L891.6 562.8 L892.1 562.7 L892.7 562.8 L893.2 562.7 L893.7 562.7 L894.3 562.7 L894.8 562.7 L895.4 562.7 L895.9 562.7 L896.4 562.8 L897.0 562.8 L897.5 562.8 L898.1 562.8 L898.6 562.8 L899.1 562.8 L899.7 562.8 L900.2 562.8 L900.8 562.8 L901.3 562.7 L901.8 562.7 L902.4 562.7 L902.9 562.7 L903.4 562.7 L904.0 562.7 L904.5 562.7 L905.1 562.8 L905.6 562.7 L906.1 562.7 L906.7 562.8 L907.2 562.7 L907.8 562.8 L908.3 562.7 L908.8 562.7 L909.4 562.7 L909.9 562.8 L910.5 562.7 L911.0 562.7 L911.5 562.7 L912.1 562.7 L912.6 562.8 L913.2 562.7 L913.7 562.7 L914.2 562.8 L914.8 562.8 L915.3 562.7 L915.9 562.8 L916.4 562.7 L916.9 562.7 L917.5 562.7 L918.0 562.7 L918.5 562.8 L919.1 562.6 L919.6 562.6 L920.2 562.8 L920.7 562.7 L921.2 562.6 L921.8 562.7 L922.3 562.8 L922.9 562.7 L923.4 562.6 L923.9 562.6 L924.5 562.8 L925.0 562.7 L925.6 562.7 L926.1 562.8 L926.6 562.7 L927.2 562.6 L927.7 562.6 L928.3 562.7 L928.8 562.8 L929.3 562.7 L929.9 562.7 L930.4 562.5 L931.0 562.6 L931.5 562.6 L932.0 562.5 L932.6 562.8 L933.1 562.6 L933.6 562.7 L934.2 562.8 L934.7 562.8 L935.3 562.7 L935.8 562.6 L936.3 562.4 L936.9 562.7 L937.4 562.7 L938.0 562.6 L938.5 562.6 L939.0 562.4 L939.6 562.6 L940.1 562.5 L940.7 562.4 L941.2 562.8 L941.7 562.5 L942.3 562.5 L942.8 562.8 L943.4 562.5 L943.9 562.8 L944.4 562.4 L945.0 562.2 L945.5 562.2 L946.0 562.6 L946.6 562.4 L947.1 562.5 L947.7 562.8 L948.2 562.2 L948.7 562.8 L949.3 562.5 L949.8 562.3 L950.4 562.3 L950.9 562.4 L951.4 562.8 L952.0 562.5 L952.5 562.2 L953.1 562.3 L953.6 562.8 L954.1 562.8 L954.7 562.6 L955.2 562.4 L955.8 562.5 L956.3 562.3 L956.8 561.8 L957.4 562.8 L957.9 562.0 L958.5 562.8 L959.0 562.6 L959.5 562.8 L960.1 562.4 L960.6 561.7 L961.1 562.4 L961.7 562.1 L962.2 561.9 L962.8 561.8 L963.3 562.5 L963.8 562.7 L964.4 561.8 L964.9 561.6 L965.5 562.8 L966.0 562.3 L966.5 561.9 L967.1 562.3 L967.6 562.7 L968.2 562.8 L968.2 567.3 L967.6 568.1 L967.1 568.0 L966.5 567.7 L966.0 567.5 L965.5 568.1 L964.9 567.5 L964.4 568.0 L963.8 568.1 L963.3 567.5 L962.8 568.2 L962.2 567.3 L961.7 567.2 L961.1 568.1 L960.6 567.3 L960.1 567.6 L959.5 567.6 L959.0 568.1 L958.5 567.9 L957.9 568.1 L957.4 568.2 L956.8 568.1 L956.3 568.1 L955.8 567.7 L955.2 567.2 L954.7 567.9 L954.1 567.3 L953.6 567.6 L953.1 567.7 L952.5 568.0 L952.0 567.3 L951.4 567.3 L950.9 567.3 L950.4 567.5 L949.8 567.4 L949.3 567.3 L948.7 567.2 L948.2 567.3 L947.7 567.7 L947.1 567.6 L946.6 567.3 L946.0 567.6 L945.5 567.3 L945.0 567.3 L944.4 567.5 L943.9 567.2 L943.4 567.5 L942.8 567.7 L942.3 567.3 L941.7 567.3 L941.2 567.6 L940.7 567.3 L940.1 567.5 L939.6 567.2 L939.0 567.4 L938.5 567.2 L938.0 567.4 L937.4 567.2 L936.9 567.6 L936.3 567.2 L935.8 567.4 L935.3 567.3 L934.7 567.3 L934.2 567.2 L933.6 567.2 L933.1 567.2 L932.6 567.5 L932.0 567.5 L931.5 567.3 L931.0 567.3 L930.4 567.2 L929.9 567.2 L929.3 567.4 L928.8 567.3 L928.3 567.5 L927.7 567.4 L927.2 567.2 L926.6 567.3 L926.1 567.2 L925.6 567.4 L925.0 567.2 L924.5 567.4 L923.9 567.3 L923.4 567.3 L922.9 567.2 L922.3 567.3 L921.8 567.4 L921.2 567.2 L920.7 567.3 L920.2 567.3 L919.6 567.3 L919.1 567.3 L918.5 567.2 L918.0 567.2 L917.5 567.3 L916.9 567.2 L916.4 567.3 L915.9 567.3 L915.3 567.2 L914.8 567.3 L914.2 567.2 L913.7 567.2 L913.2 567.2 L912.6 567.2 L912.1 567.2 L911.5 567.3 L911.0 567.3 L910.5 567.3 L909.9 567.2 L909.4 567.3 L908.8 567.2 L908.3 567.2 L907.8 567.3 L907.2 567.2 L906.7 567.3 L906.1 567.2 L905.6 567.2 L905.1 567.3 L904.5 567.3 L904.0 567.2 L903.4 567.2 L902.9 567.2 L902.4 567.2 L901.8 567.2 L901.3 567.3 L900.8 567.3 L900.2 567.3 L899.7 567.2 L899.1 567.2 L898.6 567.3 L898.1 567.2 L897.5 567.2 L897.0 567.2 L896.4 567.2 L895.9 567.2 L895.4 567.2 L894.8 567.3 L894.3 567.2 L893.7 567.2 L893.2 567.3 L892.7 567.2 L892.1 567.3 L891.6 567.3 L891.0 567.3 L890.5 567.2 L890.0 567.2 L889.4 567.3 L888.9 567.3 L888.4 567.3 L887.8 567.3 L887.3 567.2 L886.7 567.3 L886.2 567.2 L885.7 567.3 L885.1 567.3 L884.6 567.2 L884.0 567.3 L883.5 567.2 L883.0 567.3 L882.4 567.2 L881.9 567.2 L881.3 567.2 L880.8 567.2 L880.3 567.2 L879.7 567.2 L879.2 567.3 L878.6 567.2 L878.1 567.3 L877.6 567.2 L877.0 567.3 L876.5 567.2 L875.9 567.2 L875.4 567.2 L874.9 567.2 L874.3 567.2 L873.8 567.3 L873.3 567.3 L872.7 567.3 L872.2 567.2 L871.6 567.3 L871.1 567.2 L870.6 567.2 L870.0 567.3 L869.5 567.3 L868.9 567.3 L868.4 567.3 L867.9 567.3 L867.3 567.2 L866.8 567.3 L866.2 567.2 L865.7 567.3 L865.2 567.3 L864.6 567.2 L864.1 567.3 L863.5 567.3 L863.0 567.3 L862.5 567.3 L861.9 567.3 L861.4 567.3 L860.8 567.3 L860.3 567.2 L859.8 567.3 L859.2 567.2 L858.7 567.3 L858.2 567.3 L857.6 567.3 L857.1 567.3 L856.5 567.3 L856.0 567.3 L855.5 567.2 L854.9 567.3 L854.4 567.3 L853.8 567.3 L853.3 567.3 L852.8 567.2 L852.2 567.2 L851.7 567.2 L851.1 567.2 L850.6 567.3 L850.1 567.3 L849.5 567.3 L849.0 567.3 L848.4 567.2 L847.9 567.3 L847.4 567.3 L846.8 567.3 L846.3 567.3 L845.7 567.2 L845.2 567.2 L844.7 567.2 L844.1 567.2 L843.6 567.3 L843.1 567.3 L842.5 567.2 L842.0 567.2 L841.4 567.3 L840.9 567.2 L840.4 567.2 L839.8 567.2 L839.3 567.3 L838.7 567.3 L838.2 567.2 L837.7 567.3 L837.1 567.3 L836.6 567.2 L836.0 567.3 L835.5 567.3 L835.0 567.3 L834.4 567.3 L833.9 567.2 L833.3 567.2 L832.8 567.3 L832.3 567.3 L831.7 567.2 L831.2 567.3 L830.7 567.2 L830.1 567.2 L829.6 567.3 L829.0 567.3 L828.5 567.3 L828.0 567.2 L827.4 567.2 L826.9 567.3 L826.3 567.3 L825.8 567.3 L825.3 567.2 L824.7 567.2 L824.2 567.3 L823.6 567.3 L823.1 567.2 L822.6 567.3 L822.0 567.2 L821.5 567.2 L820.9 567.3 L820.4 567.3 L819.9 567.3 L819.3 567.3 L818.8 567.2 L818.2 567.3 L817.7 567.3 L817.2 567.3 L816.6 567.3 L816.1 567.3 L815.6 567.2 L815.0 567.2 L814.5 567.3 L813.9 567.3 L813.4 567.2 L812.9 567.2 L812.3 567.3 L811.8 567.2 L811.2 567.3 L810.7 567.3 L810.2 567.2 L809.6 567.2 L809.1 567.2 L808.5 567.3 L808.0 567.3 L807.5 567.2 L806.9 567.2 L806.4 567.2 L805.8 567.3 L805.3 567.2 L804.8 567.2 L804.2 567.2 L803.7 567.3 L803.1 567.3 L802.6 567.2 L802.1 567.2 L801.5 567.2 L801.0 567.3 L800.5 567.2 L799.9 567.2 L799.4 567.2 L798.8 567.2 L798.3 567.2 L797.8 567.3 L797.2 567.3 L796.7 567.2 L796.1 567.3 L795.6 567.2 L795.1 567.3 L794.5 567.3 L794.0 567.2 L793.4 567.2 L792.9 567.3 L792.4 567.2 L791.8 567.2 L791.3 567.3 L790.7 567.2 L790.2 567.3 L789.7 567.3 L789.1 567.2 L788.6 567.2 L788.0 567.3 L787.5 567.2 L787.0 567.2 L786.4 567.2 L785.9 567.3 L785.4 567.2 L784.8 567.3 L784.3 567.2 L783.7 567.3 L783.2 567.2 L782.7 567.2 L782.1 567.2 L781.6 567.2 L781.0 567.3 L780.5 567.3 L780.0 567.2 L779.4 567.2 L778.9 567.3 L778.3 567.2 L777.8 567.2 L777.3 567.2 L776.7 567.2 L776.2 567.2 L775.6 567.2 L775.1 567.3 L774.6 567.2 L774.0 567.2 L773.5 567.3 L773.0 567.2 L772.4 567.2 L771.9 567.2 L771.3 567.3 L770.8 567.2 L770.3 567.2 L769.7 567.3 L769.2 567.2 L768.6 567.2 L768.1 567.3 L767.6 567.2 L767.0 567.2 L766.5 567.2 L765.9 567.2 L765.4 567.2 L764.9 567.3 L764.3 567.3 L763.8 567.3 L763.2 567.2 L762.7 567.2 L762.2 567.2 L761.6 567.2 L761.1 567.2 L760.5 567.3 L760.0 567.2 L759.5 567.2 L758.9 567.2 L758.4 567.3 L757.9 567.3 L757.3 567.2 L756.8 567.3 L756.2 567.3 L755.7 567.3 L755.2 567.3 L754.6 567.2 L754.1 567.2 L753.5 567.2 L753.0 567.2 L752.5 567.2 L751.9 567.3 L751.4 567.2 L750.8 567.3 L750.3 567.3 L749.8 567.2 L749.2 567.3 L748.7 567.2 L748.1 567.3 L747.6 567.2 L747.1 567.2 L746.5 567.2 L746.0 567.3 L745.4 567.2 L744.9 567.2 L744.4 567.2 L743.8 567.3 L743.3 567.2 L742.8 567.2 L742.2 567.3 L741.7 567.3 L741.1 567.2 L740.6 567.2 L740.1 567.3 L739.5 567.2 L739.0 567.2 L738.4 567.3 L737.9 567.3 L737.4 567.2 L736.8 567.2 L736.3 567.3 L735.7 567.2 L735.2 567.3 L734.7 567.2 L734.1 567.3 L733.6 567.3 L733.0 567.2 L732.5 567.3 L732.0 567.2 L731.4 567.3 L730.9 567.2 L730.4 567.2 L729.8 567.3 L729.3 567.3 L728.7 567.3 L728.2 567.3 L727.7 567.2 L727.1 567.2 L726.6 567.2 L726.0 567.2 L725.5 567.3 L725.0 567.2 L724.4 567.2 L723.9 567.3 L723.3 567.2 L722.8 567.2 L722.3 567.2 L721.7 567.2 L721.2 567.2 L720.6 567.2 L720.1 567.2 L719.6 567.2 L719.0 567.2 L718.5 567.2 L717.9 567.2 L717.4 567.2 L716.9 567.3 L716.3 567.3 L715.8 567.2 L715.3 567.2 L714.7 567.2 L714.2 567.2 L713.6 567.2 L713.1 567.2 L712.6 567.3 L712.0 567.2 L711.5 567.2 L710.9 567.2 L710.4 567.3 L709.9 567.2 L709.3 567.2 L708.8 567.3 L708.2 567.3 L707.7 567.2 L707.2 567.3 L706.6 567.2 L706.1 567.2 L705.5 567.2 L705.0 567.3 L704.5 567.2 L703.9 567.3 L703.4 567.2 L702.8 567.2 L702.3 567.3 L701.8 567.2 L701.2 567.2 L700.7 567.2 L700.2 567.3 L699.6 567.3 L699.1 567.3 L698.5 567.3 L698.0 567.2 L697.5 567.2 L696.9 567.3 L696.4 567.2 L695.8 567.2 L695.3 567.2 L694.8 567.2 L694.2 567.2 L693.7 567.3 L693.1 567.3 L692.6 567.2 L692.1 567.3 L691.5 567.3 L691.0 567.3 L690.4 567.2 L689.9 567.3 L689.4 567.2 L688.8 567.2 L688.3 567.3 L687.7 567.2 L687.2 567.2 L686.7 567.3 L686.1 567.3 L685.6 567.3 L685.1 567.3 L684.5 567.4 L684.0 567.3 L683.4 567.3 L682.9 567.2 L682.4 567.2 L681.8 567.2 L681.3 567.3 L680.7 567.2 L680.2 567.3 L679.7 567.4 L679.1 567.2 L678.6 567.2 L678.0 567.3 L677.5 567.3 L677.0 567.3 L676.4 567.2 L675.9 567.2 L675.3 567.4 L674.8 567.2 L674.3 567.3 L673.7 567.4 L673.2 567.4 L672.7 567.3 L672.1 567.2 L671.6 567.3 L671.0 567.2 L670.5 567.4 L670.0 567.4 L669.4 567.2 L668.9 567.3 L668.3 567.2 L667.8 567.3 L667.3 567.4 L666.7 567.3 L666.2 567.3 L665.6 567.2 L665.1 567.2 L664.6 567.2 L664.0 567.3 L663.5 567.2 L662.9 567.2 L662.4 567.2 L661.9 567.3 L661.3 567.2 L660.8 567.4 L660.2 567.4 L659.7 567.6 L659.2 567.5 L658.6 567.3 L658.1 567.2 L657.6 567.5 L657.0 567.3 L656.5 567.5 L655.9 567.2 L655.4 567.3 L654.9 567.3 L654.3 567.3 L653.8 567.6 L653.2 567.3 L652.7 567.4 L652.2 567.2 L651.6 567.5 L651.1 567.2 L650.5 567.6 L650.0 567.2 L649.5 567.7 L648.9 567.7 L648.4 567.4 L647.8 567.6 L647.3 567.5 L646.8 567.3 L646.2 567.3 L645.7 567.2 L645.1 567.2 L644.6 567.3 L644.1 567.3 L643.5 567.7 L643.0 567.7 L642.5 567.3 L641.9 567.2 L641.4 567.5 L640.8 567.2 L640.3 567.3 L639.8 567.8 L639.2 567.4 L638.7 567.9 L638.1 567.5 L637.6 567.2 L637.1 567.3 L636.5 567.2 L636.0 567.3 L635.4 567.6 L634.9 568.0 L634.4 567.5 L633.8 567.6 L633.3 567.7 L632.7 568.1 L632.2 567.2 L631.7 568.0 L631.1 568.1 L630.6 567.3 L630.0 567.6 L629.5 567.9 L629.0 567.5 L628.4 567.4 L627.9 568.0 L627.4 567.2 L626.8 568.3 L626.3 568.0 L625.7 567.3 L625.2 567.2 L624.7 568.3 L624.1 567.4 L623.6 567.3 L623.0 567.3 L622.5 567.4Z" fill="#ead03e" stroke="#ead03e" stroke-width="1" stroke-linejoin="round"/><circle cx="963.8" cy="556.2" r="1.0" fill="#ead03e" opacity="0.55"/><circle cx="632.5" cy="571.7" r="1.0" fill="#ead03e" opacity="0.55"/><circle cx="950.1" cy="561.4" r="1.0" fill="#ead03e" opacity="0.55"/><circle cx="658.9" cy="562.9" r="1.0" fill="#ead03e" opacity="0.55"/><circle cx="968.0" cy="571.3" r="1.0" fill="#ead03e" opacity="0.55"/><circle cx="946.6" cy="568.0" r="1.0" fill="#ead03e" opacity="0.55"/><circle cx="959.4" cy="558.4" r="1.0" fill="#ead03e" opacity="0.55"/><circle cx="635.3" cy="570.3" r="1.0" fill="#ead03e" opacity="0.55"/><circle cx="623.8" cy="561.6" r="1.0" fill="#ead03e" opacity="0.55"/><circle cx="941.3" cy="562.5" r="1.0" fill="#ead03e" opacity="0.55"/><circle cx="647.1" cy="569.7" r="1.0" fill="#ead03e" opacity="0.55"/><circle cx="928.0" cy="562.3" r="1.0" fill="#ead03e" opacity="0.55"/><circle cx="966.0" cy="569.7" r="1.0" fill="#ead03e" opacity="0.55"/><circle cx="633.6" cy="566.9" r="1.0" fill="#ead03e" opacity="0.55"/><circle cx="668.7" cy="566.7" r="1.0" fill="#ead03e" opacity="0.55"/><circle cx="635.6" cy="560.3" r="1.0" fill="#ead03e" opacity="0.55"/><circle cx="655.0" cy="561.7" r="1.0" fill="#ead03e" opacity="0.55"/><circle cx="943.4" cy="567.9" r="1.0" fill="#ead03e" opacity="0.55"/><circle cx="624.9" cy="558.0" r="1.0" fill="#ead03e" opacity="0.55"/><circle cx="959.1" cy="568.7" r="1.0" fill="#ead03e" opacity="0.55"/><circle cx="639.4" cy="559.5" r="1.0" fill="#ead03e" opacity="0.55"/><circle cx="955.9" cy="560.9" r="1.0" fill="#ead03e" opacity="0.55"/><circle cx="957.2" cy="558.7" r="1.0" fill="#ead03e" opacity="0.55"/><circle cx="961.6" cy="571.7" r="1.0" fill="#ead03e" opacity="0.55"/><circle cx="662.6" cy="567.8" r="1.0" fill="#ead03e" opacity="0.55"/><circle cx="959.3" cy="571.7" r="1.0" fill="#ead03e" opacity="0.55"/><circle cx="932.6" cy="567.7" r="1.0" fill="#ead03e" opacity="0.55"/><circle cx="626.8" cy="558.1" r="1.0" fill="#ead03e" opacity="0.55"/><circle cx="632.1" cy="561.0" r="1.0" fill="#ead03e" opacity="0.55"/><circle cx="640.5" cy="559.1" r="1.0" fill="#ead03e" opacity="0.55"/><circle cx="956.5" cy="562.1" r="1.0" fill="#ead03e" opacity="0.55"/><circle cx="644.8" cy="568.1" r="1.0" fill="#ead03e" opacity="0.55"/><circle cx="952.5" cy="569.1" r="1.0" fill="#ead03e" opacity="0.55"/><circle cx="949.8" cy="560.7" r="1.0" fill="#ead03e" opacity="0.55"/><circle cx="626.3" cy="559.0" r="1.0" fill="#ead03e" opacity="0.55"/><circle cx="633.8" cy="568.0" r="1.0" fill="#ead03e" opacity="0.55"/><circle cx="648.4" cy="568.1" r="1.0" fill="#ead03e" opacity="0.55"/><circle cx="626.4" cy="571.3" r="1.0" fill="#ead03e" opacity="0.55"/><circle cx="659.1" cy="562.4" r="1.0" fill="#ead03e" opacity="0.55"/><circle cx="963.5" cy="558.4" r="1.0" fill="#ead03e" opacity="0.55"/><circle cx="629.3" cy="567.0" r="1.0" fill="#ead03e" opacity="0.55"/><circle cx="656.2" cy="561.2" r="1.0" fill="#ead03e" opacity="0.55"/><circle cx="925.2" cy="563.1" r="1.0" fill="#ead03e" opacity="0.55"/><circle cx="658.3" cy="567.0" r="1.0" fill="#ead03e" opacity="0.55"/><circle cx="962.7" cy="571.0" r="1.0" fill="#ead03e" opacity="0.55"/><circle cx="950.1" cy="567.2" r="1.0" fill="#ead03e" opacity="0.55"/><circle cx="938.4" cy="569.1" r="1.0" fill="#ead03e" opacity="0.55"/><circle cx="646.4" cy="569.1" r="1.0" fill="#ead03e" opacity="0.55"/><circle cx="951.7" cy="569.5" r="1.0" fill="#ead03e" opacity="0.55"/><circle cx="940.6" cy="563.1" r="1.0" fill="#ead03e" opacity="0.55"/><circle cx="942.5" cy="567.7" r="1.0" fill="#ead03e" opacity="0.55"/><circle cx="959.7" cy="568.7" r="1.0" fill="#ead03e" opacity="0.55"/><circle cx="653.8" cy="567.7" r="1.0" fill="#ead03e" opacity="0.55"/><circle cx="669.9" cy="562.7" r="1.0" fill="#ead03e" opacity="0.55"/><circle cx="627.1" cy="562.0" r="1.0" fill="#ead03e" opacity="0.55"/><circle cx="959.9" cy="569.9" r="1.0" fill="#ead03e" opacity="0.55"/><circle cx="629.9" cy="563.5" r="1.0" fill="#ead03e" opacity="0.55"/><circle cx="938.3" cy="562.8" r="1.0" fill="#ead03e" opacity="0.55"/><circle cx="955.6" cy="562.6" r="1.0" fill="#ead03e" opacity="0.55"/><circle cx="968.4" cy="558.8" r="1.0" fill="#ead03e" opacity="0.55"/><circle cx="645.0" cy="561.9" r="1.0" fill="#ead03e" opacity="0.55"/><circle cx="652.0" cy="562.5" r="1.0" fill="#ead03e" opacity="0.55"/><circle cx="963.9" cy="566.7" r="1.0" fill="#ead03e" opacity="0.55"/><circle cx="623.3" cy="567.3" r="1.0" fill="#ead03e" opacity="0.55"/><circle cx="644.4" cy="569.3" r="1.0" fill="#ead03e" opacity="0.55"/><circle cx="666.3" cy="568.1" r="1.0" fill="#ead03e" opacity="0.55"/><circle cx="632.6" cy="571.5" r="1.0" fill="#ead03e" opacity="0.55"/><circle cx="946.9" cy="569.0" r="1.0" fill="#ead03e" opacity="0.55"/><circle cx="624.7" cy="558.8" r="1.0" fill="#ead03e" opacity="0.55"/><circle cx="967.4" cy="556.6" r="1.0" fill="#ead03e" opacity="0.55"/><circle cx="623.9" cy="571.3" r="1.0" fill="#ead03e" opacity="0.55"/><circle cx="624.5" cy="572.2" r="1.0" fill="#ead03e" opacity="0.55"/><circle cx="654.7" cy="568.6" r="1.0" fill="#ead03e" opacity="0.55"/><circle cx="961.6" cy="560.7" r="1.0" fill="#ead03e" opacity="0.55"/><circle cx="639.6" cy="560.1" r="1.0" fill="#ead03e" opacity="0.55"/><circle cx="958.5" cy="568.0" r="1.0" fill="#ead03e" opacity="0.55"/><circle cx="967.6" cy="557.8" r="1.0" fill="#ead03e" opacity="0.55"/><circle cx="954.6" cy="566.8" r="1.0" fill="#ead03e" opacity="0.55"/><circle cx="633.0" cy="566.5" r="1.0" fill="#ead03e" opacity="0.55"/><circle cx="966.0" cy="561.8" r="1.0" fill="#ead03e" opacity="0.55"/><circle cx="667.1" cy="567.4" r="1.0" fill="#ead03e" opacity="0.55"/><circle cx="961.0" cy="562.3" r="1.0" fill="#ead03e" opacity="0.55"/><circle cx="625.4" cy="556.9" r="1.0" fill="#ead03e" opacity="0.55"/><circle cx="623.2" cy="558.0" r="1.0" fill="#ead03e" opacity="0.55"/><circle cx="636.0" cy="570.3" r="1.0" fill="#ead03e" opacity="0.55"/><circle cx="965.6" cy="560.2" r="1.0" fill="#ead03e" opacity="0.55"/><circle cx="626.6" cy="559.4" r="1.0" fill="#ead03e" opacity="0.55"/><circle cx="642.7" cy="560.8" r="1.0" fill="#ead03e" opacity="0.55"/><circle cx="949.2" cy="568.6" r="1.0" fill="#ead03e" opacity="0.55"/><circle cx="639.2" cy="567.3" r="1.0" fill="#ead03e" opacity="0.55"/><circle cx="627.6" cy="561.0" r="1.0" fill="#ead03e" opacity="0.55"/><circle cx="636.6" cy="569.9" r="1.0" fill="#ead03e" opacity="0.55"/><circle cx="946.3" cy="561.2" r="1.0" fill="#ead03e" opacity="0.55"/><circle cx="965.0" cy="566.6" r="1.0" fill="#ead03e" opacity="0.55"/><circle cx="960.4" cy="568.0" r="1.0" fill="#ead03e" opacity="0.55"/><circle cx="623.6" cy="559.7" r="1.0" fill="#ead03e" opacity="0.55"/><circle cx="651.7" cy="562.3" r="1.0" fill="#ead03e" opacity="0.55"/><circle cx="627.4" cy="570.5" r="1.0" fill="#ead03e" opacity="0.55"/><circle cx="641.8" cy="563.0" r="1.0" fill="#ead03e" opacity="0.55"/><circle cx="930.0" cy="562.3" r="1.0" fill="#ead03e" opacity="0.55"/><circle cx="657.6" cy="566.7" r="1.0" fill="#ead03e" opacity="0.55"/><circle cx="632.8" cy="562.8" r="1.0" fill="#ead03e" opacity="0.55"/><circle cx="640.8" cy="568.5" r="1.0" fill="#ead03e" opacity="0.55"/><circle cx="965.3" cy="556.0" r="1.0" fill="#ead03e" opacity="0.55"/><circle cx="948.0" cy="566.9" r="1.0" fill="#ead03e" opacity="0.55"/><circle cx="931.0" cy="566.6" r="1.0" fill="#ead03e" opacity="0.55"/><circle cx="968.5" cy="567.1" r="1.0" fill="#ead03e" opacity="0.55"/><circle cx="951.3" cy="570.6" r="1.0" fill="#ead03e" opacity="0.55"/><circle cx="952.3" cy="562.1" r="1.0" fill="#ead03e" opacity="0.55"/><circle cx="622.5" cy="573.4" r="1.0" fill="#ead03e" opacity="0.55"/><circle cx="945.4" cy="560.8" r="1.0" fill="#ead03e" opacity="0.55"/><circle cx="622.6" cy="563.2" r="1.0" fill="#ead03e" opacity="0.55"/><circle cx="965.7" cy="561.7" r="1.0" fill="#ead03e" opacity="0.55"/><circle cx="648.7" cy="560.5" r="1.0" fill="#ead03e" opacity="0.55"/><circle cx="654.8" cy="567.7" r="1.0" fill="#ead03e" opacity="0.55"/><circle cx="624.2" cy="568.9" r="1.0" fill="#ead03e" opacity="0.55"/><circle cx="937.4" cy="561.0" r="1.0" fill="#ead03e" opacity="0.55"/><circle cx="636.1" cy="563.4" r="1.0" fill="#ead03e" opacity="0.55"/><circle cx="958.4" cy="558.8" r="1.0" fill="#ead03e" opacity="0.55"/><circle cx="626.1" cy="563.1" r="1.0" fill="#ead03e" opacity="0.55"/><circle cx="649.6" cy="567.7" r="1.0" fill="#ead03e" opacity="0.55"/><circle cx="642.8" cy="561.9" r="1.0" fill="#ead03e" opacity="0.55"/><circle cx="962.7" cy="560.3" r="1.0" fill="#ead03e" opacity="0.55"/><circle cx="962.9" cy="567.6" r="1.0" fill="#ead03e" opacity="0.55"/><circle cx="643.2" cy="566.7" r="1.0" fill="#ead03e" opacity="0.55"/><circle cx="640.8" cy="569.5" r="1.0" fill="#ead03e" opacity="0.55"/><circle cx="963.1" cy="558.2" r="1.0" fill="#ead03e" opacity="0.55"/><circle cx="965.1" cy="561.7" r="1.0" fill="#ead03e" opacity="0.55"/><circle cx="944.7" cy="563.2" r="1.0" fill="#ead03e" opacity="0.55"/><circle cx="957.1" cy="557.9" r="1.0" fill="#ead03e" opacity="0.55"/><circle cx="963.5" cy="558.6" r="1.0" fill="#ead03e" opacity="0.55"/><circle cx="657.5" cy="561.9" r="1.0" fill="#ead03e" opacity="0.55"/><circle cx="642.1" cy="561.5" r="1.0" fill="#ead03e" opacity="0.55"/><circle cx="962.1" cy="560.5" r="1.0" fill="#ead03e" opacity="0.55"/><circle cx="945.0" cy="566.6" r="1.0" fill="#ead03e" opacity="0.55"/><circle cx="946.8" cy="567.8" r="1.0" fill="#ead03e" opacity="0.55"/><circle cx="967.0" cy="569.5" r="1.0" fill="#ead03e" opacity="0.55"/><circle cx="649.9" cy="568.7" r="1.0" fill="#ead03e" opacity="0.55"/><circle cx="964.4" cy="570.2" r="1.0" fill="#ead03e" opacity="0.55"/><circle cx="642.1" cy="568.4" r="1.0" fill="#ead03e" opacity="0.55"/><path d="M622.8 561.0 L622.8 569.0" stroke="#ead03e" stroke-width="2.0" fill="none" stroke-linecap="round" stroke-linejoin="round" opacity="1"/><path d="M968.0 560.0 L968.3 576.0" stroke="#ead03e" stroke-width="2.2" fill="none" stroke-linecap="round" stroke-linejoin="round" opacity="1"/><path d="M622.9 575.5 L623.6 579.0 L625.5 582.0 L629.0 584.2 L636.0 586.2 L650.6 586.3 L651.6 587.7 L947.7 587.7 L948.7 589.4 L963.0 589.6 L966.0 590.5 L968.0 593.0" stroke="#e862b4" stroke-width="5.0" fill="none" stroke-linecap="round" stroke-linejoin="round" opacity="1"/><path d="M1079.3 427.1 L1079.8 426.8 L1080.4 426.0 L1080.9 425.7 L1081.5 425.4 L1082.0 425.1 L1082.5 424.7 L1083.1 424.4 L1083.6 424.3 L1084.2 424.3 L1084.7 423.9 L1085.2 424.0 L1085.8 423.7 L1086.3 423.6 L1086.8 423.5 L1087.4 423.6 L1087.9 423.4 L1088.5 423.5 L1089.0 423.4 L1089.5 423.5 L1090.1 423.3 L1090.6 423.3 L1091.2 423.2 L1091.7 423.4 L1092.2 423.4 L1092.8 423.2 L1093.3 423.4 L1093.9 423.4 L1094.4 423.2 L1094.9 423.3 L1095.5 423.2 L1096.0 423.4 L1096.6 423.3 L1097.1 423.3 L1097.6 423.2 L1098.2 423.4 L1098.7 423.3 L1099.3 423.1 L1099.8 423.2 L1100.3 423.2 L1100.9 423.2 L1101.4 423.4 L1101.9 423.3 L1102.5 423.4 L1103.0 423.2 L1103.6 423.2 L1104.1 423.2 L1104.6 423.2 L1105.2 423.2 L1105.7 423.4 L1106.3 423.3 L1106.8 423.2 L1107.3 423.1 L1107.9 423.3 L1108.4 423.3 L1109.0 423.3 L1109.5 423.4 L1110.0 423.4 L1110.6 423.1 L1111.1 423.2 L1111.7 423.2 L1112.2 423.2 L1112.7 423.3 L1113.3 423.2 L1113.8 423.2 L1114.4 423.2 L1114.9 423.3 L1115.4 423.3 L1116.0 423.2 L1116.5 423.1 L1117.0 423.3 L1117.6 423.2 L1118.1 423.1 L1118.7 423.4 L1119.2 423.2 L1119.7 423.4 L1120.3 423.2 L1120.8 423.3 L1121.4 423.1 L1121.9 423.1 L1122.4 423.2 L1123.0 423.2 L1123.5 423.2 L1124.1 423.2 L1124.6 423.1 L1125.1 423.3 L1125.7 423.1 L1126.2 423.2 L1126.8 423.1 L1127.3 423.2 L1127.8 423.2 L1128.4 423.1 L1128.9 423.1 L1129.5 423.2 L1130.0 423.2 L1130.5 423.3 L1131.1 423.2 L1131.6 423.1 L1132.1 423.4 L1132.7 423.3 L1133.2 423.3 L1133.8 423.1 L1134.3 423.3 L1134.8 423.1 L1135.4 423.1 L1135.9 423.2 L1136.5 423.2 L1137.0 423.4 L1137.5 423.3 L1138.1 423.4 L1138.6 423.2 L1139.2 423.2 L1139.7 423.2 L1140.2 423.2 L1140.8 423.2 L1141.3 423.4 L1141.9 423.3 L1142.4 423.3 L1142.9 423.1 L1143.5 423.3 L1144.0 423.2 L1144.5 423.3 L1145.1 423.2 L1145.6 423.2 L1146.2 423.3 L1146.7 423.2 L1147.2 423.3 L1147.8 423.4 L1148.3 423.1 L1148.9 423.3 L1149.4 423.4 L1149.9 423.3 L1150.5 423.2 L1151.0 423.3 L1151.6 423.1 L1152.1 423.2 L1152.6 423.3 L1153.2 423.3 L1153.7 423.2 L1154.3 423.2 L1154.8 423.2 L1155.3 423.3 L1155.9 423.3 L1156.4 423.2 L1157.0 423.3 L1157.5 423.3 L1158.0 423.3 L1158.6 423.4 L1159.1 423.2 L1159.6 423.4 L1160.2 423.1 L1160.7 423.2 L1161.3 423.1 L1161.8 423.3 L1162.3 423.1 L1162.9 423.1 L1163.4 423.2 L1164.0 423.4 L1164.5 423.2 L1165.0 423.3 L1165.6 423.2 L1166.1 423.2 L1166.7 423.2 L1167.2 423.3 L1167.7 423.2 L1168.3 423.3 L1168.8 423.3 L1169.4 423.4 L1169.9 423.1 L1170.4 423.3 L1171.0 423.2 L1171.5 423.4 L1172.1 423.3 L1172.6 423.3 L1173.1 423.1 L1173.7 423.4 L1174.2 423.2 L1174.7 423.2 L1175.3 423.1 L1175.8 423.3 L1176.4 423.3 L1176.9 423.1 L1177.4 423.2 L1178.0 423.3 L1178.5 423.3 L1179.1 423.3 L1179.6 423.4 L1180.1 423.4 L1180.7 423.3 L1181.2 423.4 L1181.8 423.1 L1182.3 423.3 L1182.8 423.2 L1183.4 423.2 L1183.9 423.3 L1184.5 423.2 L1185.0 423.2 L1185.5 423.3 L1186.1 423.2 L1186.6 423.2 L1187.1 423.3 L1187.7 423.2 L1188.2 423.1 L1188.8 423.4 L1189.3 423.2 L1189.8 423.2 L1190.4 423.3 L1190.9 423.3 L1191.5 423.3 L1192.0 423.1 L1192.5 423.4 L1193.1 423.2 L1193.6 423.1 L1194.2 423.1 L1194.7 423.3 L1195.2 423.3 L1195.8 423.4 L1196.3 423.4 L1196.9 423.3 L1197.4 423.2 L1197.9 423.2 L1198.5 423.4 L1199.0 423.2 L1199.6 423.1 L1200.1 423.2 L1200.6 423.2 L1201.2 423.4 L1201.7 423.1 L1202.2 423.1 L1202.8 423.3 L1203.3 423.1 L1203.9 423.3 L1204.4 423.3 L1204.9 423.1 L1205.5 423.2 L1206.0 423.2 L1206.6 423.1 L1207.1 423.3 L1207.6 423.3 L1208.2 423.2 L1208.7 423.3 L1209.3 423.3 L1209.8 423.4 L1210.3 423.3 L1210.9 423.4 L1211.4 423.2 L1212.0 423.3 L1212.5 423.2 L1213.0 423.3 L1213.6 423.3 L1214.1 423.2 L1214.7 423.3 L1215.2 423.1 L1215.7 423.3 L1216.3 423.1 L1216.8 423.1 L1217.3 423.2 L1217.9 423.3 L1218.4 423.3 L1219.0 423.4 L1219.5 423.4 L1220.0 423.4 L1220.6 423.3 L1221.1 423.3 L1221.7 423.3 L1222.2 423.3 L1222.7 423.3 L1223.3 423.3 L1223.8 423.2 L1224.4 423.2 L1224.9 423.2 L1225.4 423.4 L1226.0 423.3 L1226.5 423.2 L1227.1 423.2 L1227.6 423.1 L1228.1 423.2 L1228.7 423.1 L1229.2 423.4 L1229.8 423.2 L1230.3 423.1 L1230.8 423.4 L1231.4 423.1 L1231.9 423.3 L1232.4 423.3 L1233.0 423.3 L1233.5 423.2 L1234.1 423.3 L1234.6 423.3 L1235.1 423.2 L1235.7 423.3 L1236.2 423.3 L1236.8 423.4 L1237.3 423.3 L1237.8 423.2 L1238.4 423.1 L1238.9 423.2 L1239.5 423.1 L1240.0 423.3 L1240.5 423.1 L1241.1 423.4 L1241.6 423.2 L1242.2 423.1 L1242.7 423.3 L1243.2 423.3 L1243.8 423.2 L1244.3 423.2 L1244.8 423.3 L1245.4 423.3 L1245.9 423.1 L1246.5 423.4 L1247.0 423.3 L1247.5 423.2 L1248.1 423.2 L1248.6 423.3 L1249.2 423.4 L1249.7 423.2 L1250.2 423.3 L1250.8 423.3 L1251.3 423.2 L1251.9 423.4 L1252.4 423.2 L1252.9 423.3 L1253.5 423.4 L1254.0 423.2 L1254.6 423.2 L1255.1 423.1 L1255.6 423.1 L1256.2 423.2 L1256.7 423.3 L1257.3 423.2 L1257.8 423.3 L1258.3 423.3 L1258.9 423.1 L1259.4 423.3 L1259.9 423.2 L1260.5 423.3 L1261.0 423.4 L1261.6 423.4 L1262.1 423.1 L1262.6 423.1 L1263.2 423.1 L1263.7 423.2 L1264.3 423.4 L1264.8 423.3 L1265.3 423.1 L1265.9 423.3 L1266.4 423.1 L1267.0 423.4 L1267.5 423.2 L1268.0 423.4 L1268.6 423.2 L1269.1 423.1 L1269.7 423.4 L1270.2 423.3 L1270.7 423.3 L1271.3 423.1 L1271.8 423.1 L1272.4 423.3 L1272.9 423.2 L1273.4 423.4 L1274.0 423.3 L1274.5 423.2 L1275.0 423.3 L1275.6 423.2 L1276.1 423.2 L1276.7 423.3 L1277.2 423.4 L1277.7 423.2 L1278.3 423.1 L1278.8 423.3 L1279.4 423.1 L1279.9 423.4 L1280.4 423.2 L1281.0 423.3 L1281.5 423.2 L1282.1 423.2 L1282.6 423.4 L1283.1 423.3 L1283.7 423.2 L1284.2 423.1 L1284.8 423.1 L1285.3 423.3 L1285.8 423.2 L1286.4 423.2 L1286.9 423.3 L1287.5 423.4 L1288.0 423.2 L1288.5 423.2 L1289.1 423.2 L1289.6 423.4 L1290.1 423.2 L1290.7 423.1 L1291.2 423.3 L1291.8 423.3 L1292.3 423.2 L1292.8 423.4 L1293.4 423.3 L1293.9 423.3 L1294.5 423.1 L1295.0 423.4 L1295.5 423.1 L1296.1 423.2 L1296.6 423.3 L1297.2 423.4 L1297.7 423.2 L1298.2 423.2 L1298.8 423.1 L1299.3 423.3 L1299.9 423.4 L1300.4 423.2 L1300.9 423.2 L1301.5 423.1 L1302.0 423.4 L1302.5 423.3 L1303.1 423.3 L1303.6 423.2 L1304.2 423.2 L1304.7 423.4 L1305.2 423.2 L1305.8 423.3 L1306.3 423.2 L1306.9 423.2 L1307.4 423.2 L1307.9 423.2 L1308.5 423.2 L1309.0 423.3 L1309.6 423.2 L1310.1 423.2 L1310.6 423.4 L1311.2 423.2 L1311.7 423.3 L1312.3 423.2 L1312.8 423.3 L1313.3 423.2 L1313.9 423.3 L1314.4 423.1 L1315.0 423.2 L1315.5 423.3 L1316.0 423.4 L1316.6 423.4 L1317.1 423.3 L1317.6 423.4 L1318.2 423.3 L1318.7 423.3 L1319.3 423.2 L1319.8 423.3 L1320.3 423.4 L1320.9 423.2 L1321.4 423.2 L1322.0 423.3 L1322.5 423.1 L1323.0 423.1 L1323.6 423.2 L1324.1 423.3 L1324.7 423.1 L1325.2 423.2 L1325.7 423.1 L1326.3 423.4 L1326.8 423.4 L1327.4 423.2 L1327.9 423.4 L1328.4 423.3 L1329.0 423.2 L1329.5 423.1 L1330.1 423.3 L1330.6 423.2 L1331.1 423.3 L1331.7 423.2 L1332.2 423.4 L1332.7 423.3 L1333.3 423.3 L1333.8 423.3 L1334.4 423.2 L1334.9 423.3 L1335.4 423.1 L1336.0 423.3 L1336.5 423.4 L1337.1 423.2 L1337.6 423.3 L1338.1 423.1 L1338.7 423.2 L1339.2 423.3 L1339.8 423.3 L1340.3 423.1 L1340.8 423.3 L1341.4 423.1 L1341.9 423.4 L1342.5 423.1 L1343.0 423.3 L1343.5 423.1 L1344.1 423.2 L1344.6 423.2 L1345.2 423.4 L1345.7 423.4 L1346.2 423.2 L1346.8 423.1 L1347.3 423.1 L1347.8 423.3 L1348.4 423.1 L1348.9 423.3 L1349.5 423.1 L1350.0 423.3 L1350.5 423.1 L1351.1 423.3 L1351.6 423.4 L1352.2 423.2 L1352.7 423.3 L1353.2 423.2 L1353.8 423.1 L1354.3 423.2 L1354.9 423.3 L1355.4 423.1 L1355.9 423.2 L1356.5 423.2 L1357.0 423.1 L1357.6 423.2 L1358.1 423.4 L1358.6 423.3 L1359.2 423.3 L1359.7 423.1 L1360.2 423.4 L1360.8 423.2 L1361.3 423.2 L1361.9 423.2 L1362.4 423.3 L1362.9 423.3 L1363.5 423.1 L1364.0 423.1 L1364.6 423.3 L1365.1 423.1 L1365.6 423.1 L1366.2 423.2 L1366.7 423.4 L1367.3 423.1 L1367.8 423.1 L1368.3 423.2 L1368.9 423.3 L1369.4 423.1 L1370.0 423.1 L1370.5 423.2 L1371.0 423.4 L1371.6 423.4 L1372.1 423.4 L1372.7 423.1 L1373.2 423.2 L1373.7 423.2 L1374.3 423.4 L1374.8 423.3 L1375.3 423.4 L1375.9 423.2 L1376.4 423.4 L1377.0 423.3 L1377.5 423.2 L1378.0 423.4 L1378.6 423.3 L1379.1 423.2 L1379.7 423.3 L1380.2 423.1 L1380.7 423.3 L1381.3 423.1 L1381.8 423.2 L1382.4 423.2 L1382.9 423.1 L1383.4 423.3 L1384.0 423.2 L1384.5 423.4 L1385.1 423.4 L1385.6 423.3 L1386.1 423.1 L1386.7 423.2 L1387.2 423.3 L1387.8 423.2 L1388.3 423.3 L1388.8 423.2 L1389.4 423.2 L1389.9 423.1 L1390.4 423.3 L1391.0 423.3 L1391.5 423.2 L1392.1 423.2 L1392.6 423.3 L1393.1 423.4 L1393.7 423.3 L1394.2 423.1 L1394.8 423.1 L1395.3 423.3 L1395.8 423.3 L1396.4 423.4 L1396.9 423.1 L1397.5 423.1 L1398.0 423.3 L1398.5 423.3 L1399.1 423.2 L1399.6 423.4 L1400.2 423.1 L1400.7 423.4 L1401.2 423.3 L1401.8 423.4 L1402.3 423.3 L1402.8 423.1 L1403.4 423.2 L1403.9 423.1 L1404.5 423.3 L1405.0 423.4 L1405.5 423.2 L1406.1 423.4 L1406.6 423.2 L1407.2 423.3 L1407.7 423.3 L1408.2 423.3 L1408.8 423.2 L1409.3 423.4 L1409.9 423.3 L1410.4 423.4 L1410.9 423.3 L1411.5 423.4 L1412.0 423.2 L1412.6 423.3 L1413.1 423.3 L1413.6 423.5 L1414.2 423.4 L1414.7 423.5 L1415.3 423.4 L1415.8 423.4 L1416.3 423.4 L1416.9 423.4 L1417.4 423.5 L1417.9 423.6 L1418.5 423.7 L1419.0 423.7 L1419.6 423.7 L1420.1 423.8 L1420.6 423.8 L1421.2 424.2 L1421.7 424.3 L1422.3 424.3 L1422.8 424.5 L1423.3 424.7 L1423.9 425.2 L1424.4 425.4 L1425.0 425.9 L1425.0 434.3 L1424.4 434.6 L1423.9 432.9 L1423.3 432.7 L1422.8 432.1 L1422.3 431.4 L1421.7 431.1 L1421.2 430.7 L1420.6 430.5 L1420.1 432.0 L1419.6 430.0 L1419.0 431.6 L1418.5 430.7 L1417.9 430.5 L1417.4 430.0 L1416.9 429.3 L1416.3 429.2 L1415.8 429.1 L1415.3 430.6 L1414.7 429.3 L1414.2 428.9 L1413.6 428.8 L1413.1 428.8 L1412.6 428.8 L1412.0 430.1 L1411.5 429.4 L1410.9 428.8 L1410.4 428.6 L1409.9 429.3 L1409.3 428.6 L1408.8 429.8 L1408.2 428.5 L1407.7 429.8 L1407.2 428.4 L1406.6 429.1 L1406.1 428.6 L1405.5 428.9 L1405.0 428.6 L1404.5 428.8 L1403.9 429.3 L1403.4 429.1 L1402.8 428.4 L1402.3 428.3 L1401.8 429.3 L1401.2 428.6 L1400.7 428.4 L1400.2 428.3 L1399.6 428.7 L1399.1 428.6 L1398.5 428.4 L1398.0 428.2 L1397.5 428.9 L1396.9 428.3 L1396.4 428.7 L1395.8 428.2 L1395.3 428.3 L1394.8 428.5 L1394.2 428.2 L1393.7 428.5 L1393.1 428.9 L1392.6 428.2 L1392.1 428.1 L1391.5 428.7 L1391.0 428.5 L1390.4 428.1 L1389.9 429.1 L1389.4 428.3 L1388.8 429.1 L1388.3 428.8 L1387.8 428.2 L1387.2 428.1 L1386.7 428.2 L1386.1 428.8 L1385.6 428.7 L1385.1 428.0 L1384.5 428.3 L1384.0 428.2 L1383.4 428.8 L1382.9 428.1 L1382.4 428.3 L1381.8 428.1 L1381.3 428.7 L1380.7 428.0 L1380.2 428.0 L1379.7 428.5 L1379.1 428.1 L1378.6 428.1 L1378.0 428.0 L1377.5 428.0 L1377.0 428.7 L1376.4 428.2 L1375.9 428.0 L1375.3 428.0 L1374.8 428.3 L1374.3 428.1 L1373.7 427.9 L1373.2 428.0 L1372.7 428.0 L1372.1 428.0 L1371.6 428.0 L1371.0 428.3 L1370.5 428.0 L1370.0 427.9 L1369.4 428.1 L1368.9 428.1 L1368.3 428.2 L1367.8 427.9 L1367.3 427.9 L1366.7 428.1 L1366.2 428.0 L1365.6 427.9 L1365.1 427.9 L1364.6 428.3 L1364.0 427.9 L1363.5 427.9 L1362.9 428.3 L1362.4 428.1 L1361.9 427.9 L1361.3 427.9 L1360.8 427.9 L1360.2 427.9 L1359.7 428.0 L1359.2 427.9 L1358.6 427.9 L1358.1 428.0 L1357.6 428.2 L1357.0 427.9 L1356.5 428.0 L1355.9 427.9 L1355.4 427.8 L1354.9 427.8 L1354.3 427.8 L1353.8 428.2 L1353.2 428.2 L1352.7 427.8 L1352.2 427.8 L1351.6 427.8 L1351.1 427.8 L1350.5 427.9 L1350.0 427.8 L1349.5 428.0 L1348.9 428.2 L1348.4 428.0 L1347.8 427.9 L1347.3 427.9 L1346.8 427.9 L1346.2 427.8 L1345.7 427.8 L1345.2 427.8 L1344.6 428.1 L1344.1 428.0 L1343.5 427.8 L1343.0 427.8 L1342.5 427.8 L1341.9 427.8 L1341.4 427.9 L1340.8 427.9 L1340.3 427.8 L1339.8 427.8 L1339.2 428.0 L1338.7 427.8 L1338.1 427.8 L1337.6 428.0 L1337.1 427.8 L1336.5 427.9 L1336.0 427.9 L1335.4 427.9 L1334.9 427.8 L1334.4 427.8 L1333.8 427.8 L1333.3 428.0 L1332.7 428.0 L1332.2 427.8 L1331.7 427.8 L1331.1 427.8 L1330.6 427.8 L1330.1 427.9 L1329.5 427.9 L1329.0 427.8 L1328.4 427.9 L1327.9 427.8 L1327.4 427.8 L1326.8 427.8 L1326.3 427.8 L1325.7 427.8 L1325.2 427.9 L1324.7 427.8 L1324.1 427.8 L1323.6 427.8 L1323.0 427.8 L1322.5 427.8 L1322.0 427.8 L1321.4 427.8 L1320.9 427.8 L1320.3 427.8 L1319.8 427.7 L1319.3 427.8 L1318.7 427.7 L1318.2 427.8 L1317.6 427.8 L1317.1 427.7 L1316.6 427.8 L1316.0 427.7 L1315.5 427.8 L1315.0 427.7 L1314.4 427.7 L1313.9 427.8 L1313.3 427.7 L1312.8 427.7 L1312.3 427.8 L1311.7 427.7 L1311.2 427.7 L1310.6 427.8 L1310.1 427.7 L1309.6 427.8 L1309.0 427.7 L1308.5 427.7 L1307.9 427.8 L1307.4 427.7 L1306.9 427.7 L1306.3 427.7 L1305.8 427.8 L1305.2 427.8 L1304.7 427.7 L1304.2 427.8 L1303.6 427.7 L1303.1 427.7 L1302.5 427.7 L1302.0 427.7 L1301.5 427.8 L1300.9 427.8 L1300.4 427.8 L1299.9 427.7 L1299.3 427.7 L1298.8 427.7 L1298.2 427.8 L1297.7 427.8 L1297.2 427.8 L1296.6 427.7 L1296.1 427.7 L1295.5 427.8 L1295.0 427.7 L1294.5 427.7 L1293.9 427.7 L1293.4 427.7 L1292.8 427.7 L1292.3 427.7 L1291.8 427.7 L1291.2 427.7 L1290.7 427.7 L1290.1 427.7 L1289.6 427.7 L1289.1 427.7 L1288.5 427.7 L1288.0 427.7 L1287.5 427.8 L1286.9 427.8 L1286.4 427.7 L1285.8 427.7 L1285.3 427.7 L1284.8 427.7 L1284.2 427.7 L1283.7 427.7 L1283.1 427.7 L1282.6 427.7 L1282.1 427.7 L1281.5 427.7 L1281.0 427.7 L1280.4 427.7 L1279.9 427.8 L1279.4 427.7 L1278.8 427.7 L1278.3 427.7 L1277.7 427.7 L1277.2 427.7 L1276.7 427.7 L1276.1 427.7 L1275.6 427.7 L1275.0 427.7 L1274.5 427.7 L1274.0 427.7 L1273.4 427.7 L1272.9 427.7 L1272.4 427.7 L1271.8 427.7 L1271.3 427.7 L1270.7 427.7 L1270.2 427.7 L1269.7 427.7 L1269.1 427.7 L1268.6 427.7 L1268.0 427.7 L1267.5 427.7 L1267.0 427.7 L1266.4 427.7 L1265.9 427.7 L1265.3 427.8 L1264.8 427.7 L1264.3 427.7 L1263.7 427.7 L1263.2 427.7 L1262.6 427.7 L1262.1 427.7 L1261.6 427.7 L1261.0 427.8 L1260.5 427.7 L1259.9 427.7 L1259.4 427.7 L1258.9 427.7 L1258.3 427.7 L1257.8 427.7 L1257.3 427.7 L1256.7 427.7 L1256.2 427.7 L1255.6 427.7 L1255.1 427.7 L1254.6 427.7 L1254.0 427.7 L1253.5 427.7 L1252.9 427.7 L1252.4 427.7 L1251.9 427.7 L1251.3 427.7 L1250.8 427.7 L1250.2 427.7 L1249.7 427.7 L1249.2 427.7 L1248.6 427.7 L1248.1 427.7 L1247.5 427.7 L1247.0 427.7 L1246.5 427.7 L1245.9 427.7 L1245.4 427.7 L1244.8 427.7 L1244.3 427.7 L1243.8 427.7 L1243.2 427.7 L1242.7 427.7 L1242.2 427.7 L1241.6 427.7 L1241.1 427.7 L1240.5 427.7 L1240.0 427.7 L1239.5 427.7 L1238.9 427.7 L1238.4 427.7 L1237.8 427.7 L1237.3 427.7 L1236.8 427.7 L1236.2 427.7 L1235.7 427.7 L1235.1 427.7 L1234.6 427.7 L1234.1 427.7 L1233.5 427.7 L1233.0 427.7 L1232.4 427.7 L1231.9 427.7 L1231.4 427.7 L1230.8 427.7 L1230.3 427.7 L1229.8 427.7 L1229.2 427.7 L1228.7 427.7 L1228.1 427.7 L1227.6 427.7 L1227.1 427.7 L1226.5 427.7 L1226.0 427.7 L1225.4 427.7 L1224.9 427.7 L1224.4 427.7 L1223.8 427.7 L1223.3 427.7 L1222.7 427.7 L1222.2 427.7 L1221.7 427.7 L1221.1 427.7 L1220.6 427.7 L1220.0 427.7 L1219.5 427.7 L1219.0 427.7 L1218.4 427.7 L1217.9 427.7 L1217.3 427.7 L1216.8 427.7 L1216.3 427.7 L1215.7 427.8 L1215.2 427.7 L1214.7 427.7 L1214.1 427.7 L1213.6 427.7 L1213.0 427.8 L1212.5 427.7 L1212.0 427.7 L1211.4 427.7 L1210.9 427.7 L1210.3 427.7 L1209.8 427.7 L1209.3 427.8 L1208.7 427.8 L1208.2 427.7 L1207.6 427.8 L1207.1 427.7 L1206.6 427.7 L1206.0 427.7 L1205.5 427.7 L1204.9 427.7 L1204.4 427.8 L1203.9 427.7 L1203.3 427.7 L1202.8 427.7 L1202.2 427.8 L1201.7 427.7 L1201.2 427.7 L1200.6 427.7 L1200.1 427.7 L1199.6 427.7 L1199.0 427.8 L1198.5 427.7 L1197.9 427.8 L1197.4 427.8 L1196.9 427.7 L1196.3 427.7 L1195.8 427.7 L1195.2 427.8 L1194.7 427.8 L1194.2 427.7 L1193.6 427.8 L1193.1 427.8 L1192.5 427.7 L1192.0 427.7 L1191.5 427.7 L1190.9 427.8 L1190.4 427.7 L1189.8 427.7 L1189.3 427.8 L1188.8 427.8 L1188.2 427.8 L1187.7 427.8 L1187.1 427.8 L1186.6 427.7 L1186.1 427.8 L1185.5 427.9 L1185.0 427.8 L1184.5 427.7 L1183.9 427.7 L1183.4 427.7 L1182.8 427.8 L1182.3 427.7 L1181.8 427.7 L1181.2 427.8 L1180.7 427.7 L1180.1 427.7 L1179.6 427.7 L1179.1 427.8 L1178.5 427.8 L1178.0 427.8 L1177.4 427.9 L1176.9 427.8 L1176.4 427.8 L1175.8 427.8 L1175.3 427.8 L1174.7 427.8 L1174.2 427.9 L1173.7 427.9 L1173.1 427.9 L1172.6 427.8 L1172.1 427.8 L1171.5 427.8 L1171.0 427.8 L1170.4 427.8 L1169.9 427.8 L1169.4 427.8 L1168.8 427.8 L1168.3 427.8 L1167.7 427.8 L1167.2 427.8 L1166.7 427.8 L1166.1 427.8 L1165.6 427.8 L1165.0 428.0 L1164.5 427.8 L1164.0 427.9 L1163.4 427.8 L1162.9 427.9 L1162.3 427.8 L1161.8 427.8 L1161.3 427.9 L1160.7 427.9 L1160.2 428.0 L1159.6 427.8 L1159.1 428.0 L1158.6 427.8 L1158.0 427.8 L1157.5 428.1 L1157.0 427.9 L1156.4 427.8 L1155.9 427.8 L1155.3 427.9 L1154.8 427.9 L1154.3 428.0 L1153.7 428.1 L1153.2 427.8 L1152.6 427.8 L1152.1 428.1 L1151.6 428.0 L1151.0 427.9 L1150.5 427.9 L1149.9 427.9 L1149.4 428.2 L1148.9 428.1 L1148.3 428.0 L1147.8 427.8 L1147.2 427.8 L1146.7 428.0 L1146.2 427.8 L1145.6 427.8 L1145.1 427.9 L1144.5 427.8 L1144.0 427.9 L1143.5 428.2 L1142.9 427.9 L1142.4 428.3 L1141.9 428.3 L1141.3 427.8 L1140.8 427.9 L1140.2 428.2 L1139.7 427.9 L1139.2 428.0 L1138.6 428.2 L1138.1 427.9 L1137.5 427.9 L1137.0 427.9 L1136.5 427.9 L1135.9 427.9 L1135.4 428.0 L1134.8 427.9 L1134.3 428.2 L1133.8 427.9 L1133.2 428.1 L1132.7 428.4 L1132.1 427.9 L1131.6 427.9 L1131.1 427.9 L1130.5 428.3 L1130.0 427.9 L1129.5 428.6 L1128.9 428.0 L1128.4 428.4 L1127.8 428.0 L1127.3 428.6 L1126.8 428.7 L1126.2 428.3 L1125.7 428.8 L1125.1 427.9 L1124.6 428.2 L1124.1 428.0 L1123.5 428.5 L1123.0 428.5 L1122.4 428.4 L1121.9 428.0 L1121.4 428.0 L1120.8 428.6 L1120.3 428.0 L1119.7 428.2 L1119.2 428.4 L1118.7 428.1 L1118.1 428.0 L1117.6 428.0 L1117.0 428.0 L1116.5 428.3 L1116.0 428.1 L1115.4 428.1 L1114.9 428.1 L1114.4 428.0 L1113.8 428.1 L1113.3 428.1 L1112.7 428.2 L1112.2 428.1 L1111.7 428.2 L1111.1 429.3 L1110.6 428.4 L1110.0 428.2 L1109.5 428.1 L1109.0 428.1 L1108.4 428.1 L1107.9 428.9 L1107.3 428.1 L1106.8 428.5 L1106.3 428.2 L1105.7 428.2 L1105.2 429.4 L1104.6 428.6 L1104.1 428.9 L1103.6 428.2 L1103.0 428.2 L1102.5 429.2 L1101.9 428.4 L1101.4 428.3 L1100.9 428.3 L1100.3 428.4 L1099.8 428.5 L1099.3 428.6 L1098.7 428.4 L1098.2 428.7 L1097.6 429.1 L1097.1 428.6 L1096.6 428.4 L1096.0 429.2 L1095.5 428.5 L1094.9 428.7 L1094.4 429.0 L1093.9 428.7 L1093.3 428.8 L1092.8 429.8 L1092.2 429.8 L1091.7 429.3 L1091.2 428.9 L1090.6 429.0 L1090.1 429.2 L1089.5 429.2 L1089.0 429.7 L1088.5 429.5 L1087.9 429.7 L1087.4 429.7 L1086.8 431.7 L1086.3 430.3 L1085.8 431.1 L1085.2 430.6 L1084.7 430.9 L1084.2 431.2 L1083.6 431.6 L1083.1 432.4 L1082.5 433.4 L1082.0 433.9 L1081.5 433.5 L1080.9 434.4 L1080.4 434.9 L1079.8 437.3 L1079.3 438.4Z" fill="#68e8f4" stroke="#68e8f4" stroke-width="0.8" stroke-linejoin="round"/><circle cx="1208.4" cy="430.1" r="1.0" fill="#68e8f4" opacity="0.55"/><circle cx="1330.2" cy="430.1" r="1.0" fill="#68e8f4" opacity="0.55"/><circle cx="1330.8" cy="432.2" r="1.0" fill="#68e8f4" opacity="0.55"/><circle cx="1174.4" cy="430.0" r="1.0" fill="#68e8f4" opacity="0.55"/><circle cx="1410.9" cy="432.7" r="1.0" fill="#68e8f4" opacity="0.55"/><circle cx="1372.1" cy="431.2" r="1.0" fill="#68e8f4" opacity="0.55"/><circle cx="1088.2" cy="465.1" r="1.0" fill="#68e8f4" opacity="0.55"/><circle cx="1135.6" cy="429.4" r="1.0" fill="#68e8f4" opacity="0.55"/><circle cx="1384.5" cy="436.8" r="1.0" fill="#68e8f4" opacity="0.55"/><circle cx="1383.0" cy="433.8" r="1.0" fill="#68e8f4" opacity="0.55"/><circle cx="1097.5" cy="439.4" r="1.0" fill="#68e8f4" opacity="0.55"/><circle cx="1406.9" cy="431.5" r="1.0" fill="#68e8f4" opacity="0.55"/><circle cx="1115.1" cy="429.8" r="1.0" fill="#68e8f4" opacity="0.55"/><circle cx="1367.6" cy="432.0" r="1.0" fill="#68e8f4" opacity="0.55"/><circle cx="1112.1" cy="432.2" r="1.0" fill="#68e8f4" opacity="0.55"/><circle cx="1129.4" cy="432.7" r="1.0" fill="#68e8f4" opacity="0.55"/><circle cx="1379.7" cy="431.5" r="1.0" fill="#68e8f4" opacity="0.55"/><circle cx="1135.8" cy="435.1" r="1.0" fill="#68e8f4" opacity="0.55"/><circle cx="1383.5" cy="431.9" r="1.0" fill="#68e8f4" opacity="0.55"/><circle cx="1293.2" cy="429.6" r="1.0" fill="#68e8f4" opacity="0.55"/><circle cx="1386.7" cy="431.4" r="1.0" fill="#68e8f4" opacity="0.55"/><circle cx="1123.5" cy="431.5" r="1.0" fill="#68e8f4" opacity="0.55"/><circle cx="1346.2" cy="429.9" r="1.0" fill="#68e8f4" opacity="0.55"/><circle cx="1374.6" cy="432.4" r="1.0" fill="#68e8f4" opacity="0.55"/><circle cx="1091.0" cy="430.4" r="1.0" fill="#68e8f4" opacity="0.55"/><circle cx="1422.5" cy="438.2" r="1.0" fill="#68e8f4" opacity="0.55"/><circle cx="1141.5" cy="429.5" r="1.0" fill="#68e8f4" opacity="0.55"/><circle cx="1115.8" cy="430.7" r="1.0" fill="#68e8f4" opacity="0.55"/><circle cx="1080.5" cy="438.3" r="1.0" fill="#68e8f4" opacity="0.55"/><circle cx="1135.3" cy="429.5" r="1.0" fill="#68e8f4" opacity="0.55"/><circle cx="1402.2" cy="431.8" r="1.0" fill="#68e8f4" opacity="0.55"/><circle cx="1403.4" cy="430.8" r="1.0" fill="#68e8f4" opacity="0.55"/><circle cx="1129.6" cy="435.0" r="1.0" fill="#68e8f4" opacity="0.55"/><circle cx="1101.0" cy="431.7" r="1.0" fill="#68e8f4" opacity="0.55"/><circle cx="1106.1" cy="433.7" r="1.0" fill="#68e8f4" opacity="0.55"/><circle cx="1083.0" cy="447.7" r="1.0" fill="#68e8f4" opacity="0.55"/><circle cx="1188.8" cy="429.2" r="1.0" fill="#68e8f4" opacity="0.55"/><circle cx="1421.4" cy="434.2" r="1.0" fill="#68e8f4" opacity="0.55"/><circle cx="1135.9" cy="430.1" r="1.0" fill="#68e8f4" opacity="0.55"/><circle cx="1098.0" cy="439.5" r="1.0" fill="#68e8f4" opacity="0.55"/><circle cx="1419.3" cy="433.6" r="1.0" fill="#68e8f4" opacity="0.55"/><circle cx="1090.0" cy="431.0" r="1.0" fill="#68e8f4" opacity="0.55"/><circle cx="1086.1" cy="431.7" r="1.0" fill="#68e8f4" opacity="0.55"/><circle cx="1402.6" cy="436.8" r="1.0" fill="#68e8f4" opacity="0.55"/><circle cx="1124.7" cy="429.3" r="1.0" fill="#68e8f4" opacity="0.55"/><circle cx="1396.2" cy="430.4" r="1.0" fill="#68e8f4" opacity="0.55"/><circle cx="1086.8" cy="431.9" r="1.0" fill="#68e8f4" opacity="0.55"/><circle cx="1128.6" cy="432.3" r="1.0" fill="#68e8f4" opacity="0.55"/><circle cx="1086.2" cy="433.1" r="1.0" fill="#68e8f4" opacity="0.55"/><circle cx="1421.5" cy="433.3" r="1.0" fill="#68e8f4" opacity="0.55"/><circle cx="1082.1" cy="435.2" r="1.0" fill="#68e8f4" opacity="0.55"/><circle cx="1079.7" cy="439.7" r="1.0" fill="#68e8f4" opacity="0.55"/><circle cx="1092.8" cy="431.9" r="1.0" fill="#68e8f4" opacity="0.55"/><circle cx="1137.8" cy="430.4" r="1.0" fill="#68e8f4" opacity="0.55"/><circle cx="1167.3" cy="430.3" r="1.0" fill="#68e8f4" opacity="0.55"/><circle cx="1332.6" cy="431.0" r="1.0" fill="#68e8f4" opacity="0.55"/><circle cx="1395.1" cy="434.1" r="1.0" fill="#68e8f4" opacity="0.55"/><circle cx="1152.0" cy="429.2" r="1.0" fill="#68e8f4" opacity="0.55"/><circle cx="1321.0" cy="429.8" r="1.0" fill="#68e8f4" opacity="0.55"/><circle cx="1371.8" cy="430.9" r="1.0" fill="#68e8f4" opacity="0.55"/><circle cx="1131.6" cy="430.7" r="1.0" fill="#68e8f4" opacity="0.55"/><circle cx="1122.0" cy="432.5" r="1.0" fill="#68e8f4" opacity="0.55"/><circle cx="1088.7" cy="437.4" r="1.0" fill="#68e8f4" opacity="0.55"/><circle cx="1416.1" cy="433.7" r="1.0" fill="#68e8f4" opacity="0.55"/><circle cx="1422.0" cy="441.9" r="1.0" fill="#68e8f4" opacity="0.55"/><circle cx="1093.3" cy="443.0" r="1.0" fill="#68e8f4" opacity="0.55"/><circle cx="1397.2" cy="433.8" r="1.0" fill="#68e8f4" opacity="0.55"/><circle cx="1358.6" cy="430.2" r="1.0" fill="#68e8f4" opacity="0.55"/><circle cx="1389.8" cy="429.9" r="1.0" fill="#68e8f4" opacity="0.55"/><circle cx="1392.6" cy="435.0" r="1.0" fill="#68e8f4" opacity="0.55"/><circle cx="1084.6" cy="433.0" r="1.0" fill="#68e8f4" opacity="0.55"/><circle cx="1101.9" cy="429.9" r="1.0" fill="#68e8f4" opacity="0.55"/><circle cx="1097.4" cy="438.3" r="1.0" fill="#68e8f4" opacity="0.55"/><circle cx="1096.3" cy="431.5" r="1.0" fill="#68e8f4" opacity="0.55"/><circle cx="1382.5" cy="430.6" r="1.0" fill="#68e8f4" opacity="0.55"/><circle cx="1160.4" cy="429.4" r="1.0" fill="#68e8f4" opacity="0.55"/><circle cx="1375.7" cy="430.3" r="1.0" fill="#68e8f4" opacity="0.55"/><circle cx="1383.1" cy="432.2" r="1.0" fill="#68e8f4" opacity="0.55"/><circle cx="1098.9" cy="438.2" r="1.0" fill="#68e8f4" opacity="0.55"/><circle cx="1332.2" cy="429.9" r="1.0" fill="#68e8f4" opacity="0.55"/><circle cx="1375.0" cy="433.3" r="1.0" fill="#68e8f4" opacity="0.55"/><circle cx="1400.9" cy="430.1" r="1.0" fill="#68e8f4" opacity="0.55"/><circle cx="1080.1" cy="451.8" r="1.0" fill="#68e8f4" opacity="0.55"/><circle cx="1111.0" cy="435.4" r="1.0" fill="#68e8f4" opacity="0.55"/><circle cx="1325.4" cy="429.1" r="1.0" fill="#68e8f4" opacity="0.55"/><circle cx="1089.6" cy="432.9" r="1.0" fill="#68e8f4" opacity="0.55"/><circle cx="1127.0" cy="431.5" r="1.0" fill="#68e8f4" opacity="0.55"/><circle cx="1080.1" cy="441.5" r="1.0" fill="#68e8f4" opacity="0.55"/><circle cx="1091.3" cy="432.0" r="1.0" fill="#68e8f4" opacity="0.55"/><circle cx="1386.2" cy="432.5" r="1.0" fill="#68e8f4" opacity="0.55"/><circle cx="1382.1" cy="434.4" r="1.0" fill="#68e8f4" opacity="0.55"/><circle cx="1089.7" cy="432.7" r="1.0" fill="#68e8f4" opacity="0.55"/><circle cx="1349.8" cy="437.9" r="1.0" fill="#68e8f4" opacity="0.55"/><circle cx="1132.2" cy="434.0" r="1.0" fill="#68e8f4" opacity="0.55"/><circle cx="1409.7" cy="430.8" r="1.0" fill="#68e8f4" opacity="0.55"/><circle cx="1094.2" cy="439.6" r="1.0" fill="#68e8f4" opacity="0.55"/><circle cx="1178.9" cy="429.6" r="1.0" fill="#68e8f4" opacity="0.55"/><circle cx="1120.9" cy="429.7" r="1.0" fill="#68e8f4" opacity="0.55"/><circle cx="1395.4" cy="452.2" r="1.0" fill="#68e8f4" opacity="0.55"/><circle cx="1392.7" cy="431.8" r="1.0" fill="#68e8f4" opacity="0.55"/><circle cx="1130.1" cy="429.8" r="1.0" fill="#68e8f4" opacity="0.55"/><circle cx="1097.1" cy="438.0" r="1.0" fill="#68e8f4" opacity="0.55"/><circle cx="1422.5" cy="435.1" r="1.0" fill="#68e8f4" opacity="0.55"/><circle cx="1422.7" cy="442.1" r="1.0" fill="#68e8f4" opacity="0.55"/><circle cx="1113.5" cy="437.7" r="1.0" fill="#68e8f4" opacity="0.55"/><circle cx="1381.2" cy="436.4" r="1.0" fill="#68e8f4" opacity="0.55"/><circle cx="1099.1" cy="431.8" r="1.0" fill="#68e8f4" opacity="0.55"/><circle cx="1101.6" cy="431.8" r="1.0" fill="#68e8f4" opacity="0.55"/><circle cx="1386.3" cy="435.3" r="1.0" fill="#68e8f4" opacity="0.55"/><circle cx="1094.2" cy="432.6" r="1.0" fill="#68e8f4" opacity="0.55"/><circle cx="1380.5" cy="429.7" r="1.0" fill="#68e8f4" opacity="0.55"/><circle cx="1415.9" cy="431.2" r="1.0" fill="#68e8f4" opacity="0.55"/><circle cx="1409.4" cy="440.5" r="1.0" fill="#68e8f4" opacity="0.55"/><circle cx="1094.1" cy="440.2" r="1.0" fill="#68e8f4" opacity="0.55"/><circle cx="1374.9" cy="430.5" r="1.0" fill="#68e8f4" opacity="0.55"/><circle cx="1416.6" cy="432.2" r="1.0" fill="#68e8f4" opacity="0.55"/><circle cx="1110.8" cy="431.0" r="1.0" fill="#68e8f4" opacity="0.55"/><circle cx="1425.2" cy="437.3" r="1.0" fill="#68e8f4" opacity="0.55"/><circle cx="1109.8" cy="432.6" r="1.0" fill="#68e8f4" opacity="0.55"/><circle cx="1366.7" cy="429.4" r="1.0" fill="#68e8f4" opacity="0.55"/><circle cx="1332.9" cy="431.2" r="1.0" fill="#68e8f4" opacity="0.55"/><circle cx="1400.3" cy="435.4" r="1.0" fill="#68e8f4" opacity="0.55"/><circle cx="1408.4" cy="436.3" r="1.0" fill="#68e8f4" opacity="0.55"/><circle cx="1399.1" cy="435.2" r="1.0" fill="#68e8f4" opacity="0.55"/><circle cx="1382.5" cy="433.2" r="1.0" fill="#68e8f4" opacity="0.55"/><circle cx="1114.2" cy="431.2" r="1.0" fill="#68e8f4" opacity="0.55"/><circle cx="1125.0" cy="440.5" r="1.0" fill="#68e8f4" opacity="0.55"/><circle cx="1416.5" cy="445.3" r="1.0" fill="#68e8f4" opacity="0.55"/><circle cx="1353.5" cy="429.3" r="1.0" fill="#68e8f4" opacity="0.55"/><circle cx="1326.0" cy="433.0" r="1.0" fill="#68e8f4" opacity="0.55"/><circle cx="1108.5" cy="438.3" r="1.0" fill="#68e8f4" opacity="0.55"/><circle cx="1099.1" cy="431.0" r="1.0" fill="#68e8f4" opacity="0.55"/><circle cx="1095.3" cy="441.2" r="1.0" fill="#68e8f4" opacity="0.55"/><circle cx="1405.4" cy="437.9" r="1.0" fill="#68e8f4" opacity="0.55"/><circle cx="1110.1" cy="430.4" r="1.0" fill="#68e8f4" opacity="0.55"/><circle cx="1376.9" cy="429.3" r="1.0" fill="#68e8f4" opacity="0.55"/><circle cx="1419.6" cy="432.3" r="1.0" fill="#68e8f4" opacity="0.55"/><circle cx="1364.8" cy="429.5" r="1.0" fill="#68e8f4" opacity="0.55"/><circle cx="1147.6" cy="432.1" r="1.0" fill="#68e8f4" opacity="0.55"/><circle cx="1414.2" cy="436.2" r="1.0" fill="#68e8f4" opacity="0.55"/><circle cx="1080.9" cy="436.8" r="1.0" fill="#68e8f4" opacity="0.55"/><circle cx="1414.2" cy="431.2" r="1.0" fill="#68e8f4" opacity="0.55"/><circle cx="1389.8" cy="432.9" r="1.0" fill="#68e8f4" opacity="0.55"/><circle cx="1418.4" cy="439.8" r="1.0" fill="#68e8f4" opacity="0.55"/><circle cx="1119.3" cy="430.1" r="1.0" fill="#68e8f4" opacity="0.55"/><circle cx="1154.2" cy="431.3" r="1.0" fill="#68e8f4" opacity="0.55"/><circle cx="1110.7" cy="435.8" r="1.0" fill="#68e8f4" opacity="0.55"/><circle cx="1170.2" cy="429.3" r="1.0" fill="#68e8f4" opacity="0.55"/><circle cx="1134.9" cy="429.2" r="1.0" fill="#68e8f4" opacity="0.55"/><circle cx="1365.4" cy="434.5" r="1.0" fill="#68e8f4" opacity="0.55"/><circle cx="1080.0" cy="445.7" r="1.15" fill="#68e8f4" opacity="0.72"/><circle cx="1080.0" cy="452.0" r="1.15" fill="#68e8f4" opacity="0.72"/><circle cx="1080.0" cy="461.0" r="1.15" fill="#68e8f4" opacity="0.72"/><circle cx="1080.0" cy="470.0" r="1.15" fill="#68e8f4" opacity="0.72"/><circle cx="1080.0" cy="472.0" r="1.15" fill="#68e8f4" opacity="0.72"/><circle cx="1080.0" cy="477.0" r="1.15" fill="#68e8f4" opacity="0.72"/><circle cx="1080.0" cy="482.0" r="1.15" fill="#68e8f4" opacity="0.72"/><circle cx="1080.0" cy="496.6" r="1.15" fill="#68e8f4" opacity="0.72"/><circle cx="1087.0" cy="459.0" r="1.15" fill="#68e8f4" opacity="0.72"/><circle cx="1133.0" cy="440.0" r="1.15" fill="#68e8f4" opacity="0.72"/><circle cx="1425.0" cy="452.0" r="1.15" fill="#68e8f4" opacity="0.72"/><circle cx="1425.0" cy="459.0" r="1.15" fill="#68e8f4" opacity="0.72"/><circle cx="1425.0" cy="537.0" r="1.15" fill="#68e8f4" opacity="0.72"/><circle cx="1425.0" cy="545.6" r="1.15" fill="#68e8f4" opacity="0.72"/><circle cx="1425.0" cy="669.0" r="1.15" fill="#68e8f4" opacity="0.72"/><circle cx="1079.6" cy="711.0" r="1.15" fill="#68e8f4" opacity="0.72"/><circle cx="1079.8" cy="425.5" r="1.15" fill="#e6a85a" opacity="0.72"/><circle cx="1080.0" cy="515.0" r="1.15" fill="#e6a85a" opacity="0.72"/><circle cx="1425.0" cy="606.6" r="1.15" fill="#e6a85a" opacity="0.72"/><circle cx="1425.0" cy="609.6" r="1.15" fill="#e6a85a" opacity="0.72"/><circle cx="1425.0" cy="711.0" r="1.15" fill="#e6a85a" opacity="0.72"/><circle cx="1080.0" cy="570.5" r="1.15" fill="#e862b4" opacity="0.72"/><circle cx="1079.6" cy="624.0" r="1.15" fill="#e862b4" opacity="0.72"/><circle cx="1425.0" cy="425.5" r="1.15" fill="#e862b4" opacity="0.72"/><circle cx="1410.0" cy="576.0" r="1.15" fill="#e862b4" opacity="0.72"/><circle cx="1415.0" cy="580.0" r="1.15" fill="#e862b4" opacity="0.72"/><path d="M1079.9 548.0 L1079.9 556.0" stroke="#ead03e" stroke-width="3.2" fill="none" stroke-linecap="round" stroke-linejoin="round" opacity="1"/><path d="M1079.9 556.0 L1081.0 560.5 L1084.0 563.0 L1092.9 563.4 L1093.9 564.8 L1365.7 564.8 L1366.7 567.0 L1418.0 567.0 L1422.0 568.5 L1424.5 571.0 L1425.3 574.5" stroke="#ead03e" stroke-width="5.0" fill="none" stroke-linecap="round" stroke-linejoin="round" opacity="1"/><path d="M1079.3 585.3 L1079.8 584.6 L1080.4 584.7 L1080.9 585.0 L1081.5 585.2 L1082.0 585.2 L1082.5 585.2 L1083.1 584.2 L1083.6 585.2 L1084.2 584.4 L1084.7 585.0 L1085.2 584.7 L1085.8 584.6 L1086.3 584.3 L1086.8 584.7 L1087.4 584.4 L1087.9 584.9 L1088.5 584.8 L1089.0 584.4 L1089.5 585.1 L1090.1 584.4 L1090.6 585.2 L1091.2 585.3 L1091.7 584.9 L1092.2 585.1 L1092.8 584.8 L1093.3 585.1 L1093.9 585.2 L1094.4 585.0 L1094.9 585.1 L1095.5 584.8 L1096.0 584.7 L1096.6 585.0 L1097.1 585.2 L1097.6 584.7 L1098.2 585.2 L1098.7 585.0 L1099.3 585.1 L1099.8 585.2 L1100.3 585.2 L1100.9 585.1 L1101.4 585.3 L1101.9 585.2 L1102.5 585.1 L1103.0 584.8 L1103.6 585.3 L1104.1 585.2 L1104.6 584.9 L1105.2 585.1 L1105.7 585.1 L1106.3 585.0 L1106.8 585.0 L1107.3 585.2 L1107.9 585.0 L1108.4 585.3 L1109.0 585.2 L1109.5 584.9 L1110.0 584.9 L1110.6 585.0 L1111.1 585.1 L1111.7 585.2 L1112.2 585.1 L1112.7 585.3 L1113.3 585.2 L1113.8 585.2 L1114.4 585.0 L1114.9 585.3 L1115.4 585.3 L1116.0 585.3 L1116.5 585.2 L1117.0 585.3 L1117.6 585.2 L1118.1 585.3 L1118.7 585.2 L1119.2 585.2 L1119.7 585.2 L1120.3 585.1 L1120.8 585.2 L1121.4 585.3 L1121.9 585.1 L1122.4 585.2 L1123.0 585.3 L1123.5 585.2 L1124.1 585.2 L1124.6 585.2 L1125.1 585.2 L1125.7 585.1 L1126.2 585.2 L1126.8 585.2 L1127.3 585.3 L1127.8 585.2 L1128.4 585.2 L1128.9 585.3 L1129.5 585.1 L1130.0 585.3 L1130.5 585.3 L1131.1 585.1 L1131.6 585.2 L1132.1 585.3 L1132.7 585.2 L1133.2 585.3 L1133.8 585.3 L1134.3 585.3 L1134.8 585.2 L1135.4 585.1 L1135.9 585.1 L1136.5 585.3 L1137.0 585.3 L1137.5 585.2 L1138.1 585.2 L1138.6 585.3 L1139.2 585.3 L1139.7 585.3 L1140.2 585.3 L1140.8 585.1 L1141.3 585.2 L1141.9 585.1 L1142.4 585.3 L1142.9 585.3 L1143.5 585.3 L1144.0 585.2 L1144.5 585.2 L1145.1 585.3 L1145.6 585.3 L1146.2 585.3 L1146.7 585.3 L1147.2 585.3 L1147.8 585.3 L1148.3 585.3 L1148.9 585.3 L1149.4 585.3 L1149.9 585.1 L1150.5 585.3 L1151.0 585.1 L1151.6 585.2 L1152.1 585.2 L1152.6 585.3 L1153.2 585.1 L1153.7 585.3 L1154.3 585.1 L1154.8 585.3 L1155.3 585.2 L1155.9 585.2 L1156.4 585.3 L1157.0 585.2 L1157.5 585.2 L1158.0 585.3 L1158.6 585.2 L1159.1 585.2 L1159.6 585.2 L1160.2 585.2 L1160.7 585.2 L1161.3 585.2 L1161.8 585.3 L1162.3 585.2 L1162.9 585.2 L1163.4 585.2 L1164.0 585.2 L1164.5 585.2 L1165.0 585.2 L1165.6 585.1 L1166.1 585.3 L1166.7 585.3 L1167.2 585.2 L1167.7 585.1 L1168.3 585.3 L1168.8 585.3 L1169.4 585.2 L1169.9 585.1 L1170.4 585.2 L1171.0 585.1 L1171.5 585.2 L1172.1 585.3 L1172.6 585.1 L1173.1 585.3 L1173.7 585.3 L1174.2 585.2 L1174.7 585.3 L1175.3 585.1 L1175.8 585.3 L1176.4 585.2 L1176.9 585.3 L1177.4 585.2 L1178.0 585.2 L1178.5 585.3 L1179.1 585.1 L1179.6 585.3 L1180.1 585.1 L1180.7 585.2 L1181.2 585.3 L1181.8 585.3 L1182.3 585.2 L1182.8 585.3 L1183.4 585.2 L1183.9 585.1 L1184.5 585.2 L1185.0 585.2 L1185.5 585.1 L1186.1 585.1 L1186.6 585.1 L1187.1 585.2 L1187.7 585.1 L1188.2 585.2 L1188.8 585.1 L1189.3 585.2 L1189.8 585.2 L1190.4 585.3 L1190.9 585.2 L1191.5 585.3 L1192.0 585.2 L1192.5 585.2 L1193.1 585.2 L1193.6 585.1 L1194.2 585.1 L1194.7 585.2 L1195.2 585.2 L1195.8 585.2 L1196.3 585.1 L1196.9 585.1 L1197.4 585.3 L1197.9 585.3 L1198.5 585.2 L1199.0 585.3 L1199.6 585.1 L1200.1 585.2 L1200.6 585.3 L1201.2 585.3 L1201.7 585.3 L1202.2 585.3 L1202.8 585.3 L1203.3 585.1 L1203.9 585.2 L1204.4 585.2 L1204.9 585.3 L1205.5 585.2 L1206.0 585.1 L1206.6 585.3 L1207.1 585.1 L1207.6 585.3 L1208.2 585.3 L1208.7 585.1 L1209.3 585.2 L1209.8 585.1 L1210.3 585.3 L1210.9 585.2 L1211.4 585.1 L1212.0 585.3 L1212.5 585.1 L1213.0 585.3 L1213.6 585.2 L1214.1 585.3 L1214.7 585.3 L1215.2 585.3 L1215.7 585.3 L1216.3 585.1 L1216.8 585.1 L1217.3 585.1 L1217.9 585.3 L1218.4 585.2 L1219.0 585.1 L1219.5 585.2 L1220.0 585.3 L1220.6 585.2 L1221.1 585.1 L1221.7 585.3 L1222.2 585.3 L1222.7 585.2 L1223.3 585.3 L1223.8 585.1 L1224.4 585.2 L1224.9 585.3 L1225.4 585.2 L1226.0 585.2 L1226.5 585.1 L1227.1 585.3 L1227.6 585.3 L1228.1 585.1 L1228.7 585.3 L1229.2 585.2 L1229.8 585.1 L1230.3 585.1 L1230.8 585.3 L1231.4 585.2 L1231.9 585.2 L1232.4 585.3 L1233.0 585.2 L1233.5 585.1 L1234.1 585.2 L1234.6 585.2 L1235.1 585.3 L1235.7 585.1 L1236.2 585.1 L1236.8 585.1 L1237.3 585.2 L1237.8 585.3 L1238.4 585.3 L1238.9 585.2 L1239.5 585.2 L1240.0 585.2 L1240.5 585.1 L1241.1 585.3 L1241.6 585.3 L1242.2 585.2 L1242.7 585.3 L1243.2 585.3 L1243.8 585.3 L1244.3 585.1 L1244.8 585.2 L1245.4 585.3 L1245.9 585.1 L1246.5 585.1 L1247.0 585.2 L1247.5 585.3 L1248.1 585.2 L1248.6 585.2 L1249.2 585.3 L1249.7 585.2 L1250.2 585.3 L1250.8 585.2 L1251.3 585.1 L1251.9 585.3 L1252.4 585.1 L1252.9 585.2 L1253.5 585.3 L1254.0 585.3 L1254.6 585.2 L1255.1 585.2 L1255.6 585.2 L1256.2 585.2 L1256.7 585.2 L1257.3 585.2 L1257.8 585.3 L1258.3 585.3 L1258.9 585.1 L1259.4 585.2 L1259.9 585.2 L1260.5 585.2 L1261.0 585.2 L1261.6 585.3 L1262.1 585.3 L1262.6 585.3 L1263.2 585.2 L1263.7 585.3 L1264.3 585.3 L1264.8 585.1 L1265.3 585.2 L1265.9 585.1 L1266.4 585.1 L1267.0 585.3 L1267.5 585.1 L1268.0 585.2 L1268.6 585.2 L1269.1 585.2 L1269.7 585.2 L1270.2 585.1 L1270.7 585.1 L1271.3 585.1 L1271.8 585.3 L1272.4 585.3 L1272.9 585.1 L1273.4 585.2 L1274.0 585.2 L1274.5 585.2 L1275.0 585.3 L1275.6 585.1 L1276.1 585.2 L1276.7 585.3 L1277.2 585.2 L1277.7 585.1 L1278.3 585.2 L1278.8 585.2 L1279.4 585.2 L1279.9 585.2 L1280.4 585.2 L1281.0 585.1 L1281.5 585.2 L1282.1 585.2 L1282.6 585.2 L1283.1 585.1 L1283.7 585.2 L1284.2 585.2 L1284.8 585.2 L1285.3 585.1 L1285.8 585.3 L1286.4 585.2 L1286.9 585.3 L1287.5 585.2 L1288.0 585.2 L1288.5 585.3 L1289.1 585.2 L1289.6 585.2 L1290.1 585.2 L1290.7 585.2 L1291.2 585.2 L1291.8 585.3 L1292.3 585.2 L1292.8 585.2 L1293.4 585.3 L1293.9 585.1 L1294.5 585.3 L1295.0 585.3 L1295.5 585.2 L1296.1 585.2 L1296.6 585.1 L1297.2 585.2 L1297.7 585.3 L1298.2 585.2 L1298.8 585.2 L1299.3 585.2 L1299.9 585.1 L1300.4 585.2 L1300.9 585.1 L1301.5 585.2 L1302.0 585.3 L1302.5 585.1 L1303.1 585.2 L1303.6 585.3 L1304.2 585.3 L1304.7 585.2 L1305.2 585.1 L1305.8 585.2 L1306.3 585.2 L1306.9 585.2 L1307.4 585.1 L1307.9 585.2 L1308.5 585.2 L1309.0 585.3 L1309.6 585.3 L1310.1 585.1 L1310.6 585.1 L1311.2 585.2 L1311.7 585.3 L1312.3 585.2 L1312.8 585.3 L1313.3 585.3 L1313.9 585.2 L1314.4 585.1 L1315.0 585.1 L1315.5 585.2 L1316.0 585.2 L1316.6 585.2 L1317.1 585.2 L1317.6 585.2 L1318.2 585.3 L1318.7 585.3 L1319.3 585.3 L1319.8 585.3 L1320.3 585.3 L1320.9 585.2 L1321.4 585.2 L1322.0 585.2 L1322.5 585.1 L1323.0 585.2 L1323.6 585.3 L1324.1 585.3 L1324.7 585.2 L1325.2 585.3 L1325.7 585.1 L1326.3 585.2 L1326.8 585.3 L1327.4 585.1 L1327.9 585.2 L1328.4 585.3 L1329.0 585.1 L1329.5 585.3 L1330.1 585.3 L1330.6 585.3 L1331.1 585.1 L1331.7 585.3 L1332.2 585.2 L1332.7 585.3 L1333.3 585.3 L1333.8 585.3 L1334.4 585.1 L1334.9 585.1 L1335.4 585.3 L1336.0 585.3 L1336.5 585.3 L1337.1 585.2 L1337.6 585.1 L1338.1 585.1 L1338.7 585.1 L1339.2 585.1 L1339.8 585.2 L1340.3 585.2 L1340.8 585.1 L1341.4 585.1 L1341.9 585.3 L1342.5 585.1 L1343.0 585.1 L1343.5 585.3 L1344.1 585.1 L1344.6 585.3 L1345.2 585.3 L1345.7 585.1 L1346.2 585.3 L1346.8 585.2 L1347.3 585.3 L1347.8 585.3 L1348.4 585.3 L1348.9 585.2 L1349.5 585.3 L1350.0 585.1 L1350.5 585.1 L1351.1 585.1 L1351.6 585.2 L1352.2 585.3 L1352.7 585.3 L1353.2 585.2 L1353.8 585.0 L1354.3 585.3 L1354.9 585.3 L1355.4 585.2 L1355.9 585.2 L1356.5 585.2 L1357.0 585.0 L1357.6 585.0 L1358.1 585.2 L1358.6 585.0 L1359.2 585.0 L1359.7 585.2 L1360.2 585.2 L1360.8 585.2 L1361.3 585.1 L1361.9 584.9 L1362.4 584.9 L1362.9 585.2 L1363.5 585.2 L1364.0 585.1 L1364.6 585.1 L1365.1 585.1 L1365.6 585.0 L1366.2 585.3 L1366.7 585.1 L1367.3 585.3 L1367.8 585.1 L1368.3 584.9 L1368.9 584.9 L1369.4 585.0 L1370.0 585.2 L1370.5 585.2 L1371.0 585.0 L1371.6 585.2 L1372.1 585.0 L1372.7 585.3 L1373.2 584.8 L1373.7 585.2 L1374.3 585.3 L1374.8 585.1 L1375.3 585.3 L1375.9 584.8 L1376.4 584.7 L1377.0 584.9 L1377.5 585.2 L1378.0 584.9 L1378.6 585.1 L1379.1 585.1 L1379.7 585.1 L1380.2 585.1 L1380.7 585.1 L1381.3 585.3 L1381.8 584.6 L1382.4 585.0 L1382.9 585.3 L1383.4 585.3 L1384.0 585.1 L1384.5 584.8 L1385.1 585.1 L1385.6 585.1 L1386.1 585.1 L1386.7 584.6 L1387.2 584.7 L1387.8 584.5 L1388.3 585.3 L1388.8 585.1 L1389.4 584.4 L1389.9 584.6 L1390.4 584.6 L1391.0 585.0 L1391.5 585.3 L1392.1 584.5 L1392.6 585.1 L1393.1 585.3 L1393.7 584.7 L1394.2 585.3 L1394.8 584.5 L1395.3 584.7 L1395.8 585.0 L1396.4 585.0 L1396.9 585.2 L1397.5 585.1 L1398.0 584.7 L1398.5 584.7 L1399.1 585.3 L1399.6 584.3 L1400.2 584.2 L1400.7 585.2 L1401.2 584.3 L1401.8 585.1 L1402.3 585.1 L1402.8 584.5 L1403.4 584.4 L1403.9 585.2 L1404.5 585.2 L1405.0 584.0 L1405.5 584.9 L1406.1 585.2 L1406.6 584.8 L1407.2 584.9 L1407.7 585.3 L1408.2 585.2 L1408.8 584.6 L1409.3 584.2 L1409.9 585.3 L1410.4 585.2 L1410.9 584.6 L1411.5 585.2 L1412.0 585.3 L1412.6 584.4 L1413.1 584.7 L1413.6 585.3 L1414.2 584.5 L1414.7 585.1 L1415.3 583.6 L1415.8 584.1 L1416.3 585.3 L1416.9 584.8 L1417.4 584.1 L1417.9 584.0 L1418.5 584.0 L1419.0 584.8 L1419.6 585.1 L1420.1 585.3 L1420.6 584.4 L1421.2 584.7 L1421.7 585.2 L1422.3 585.2 L1422.8 583.3 L1423.3 584.8 L1423.9 584.4 L1424.4 584.8 L1425.0 583.9 L1425.0 590.8 L1424.4 591.6 L1423.9 589.8 L1423.3 589.7 L1422.8 590.7 L1422.3 589.7 L1421.7 590.6 L1421.2 590.8 L1420.6 591.0 L1420.1 591.1 L1419.6 591.2 L1419.0 589.8 L1418.5 590.6 L1417.9 589.8 L1417.4 589.8 L1416.9 590.9 L1416.3 589.7 L1415.8 590.3 L1415.3 590.5 L1414.7 590.5 L1414.2 590.7 L1413.6 591.1 L1413.1 590.2 L1412.6 590.6 L1412.0 590.4 L1411.5 589.8 L1410.9 590.7 L1410.4 590.9 L1409.9 590.1 L1409.3 590.3 L1408.8 589.8 L1408.2 590.5 L1407.7 590.0 L1407.2 591.2 L1406.6 590.7 L1406.1 589.9 L1405.5 589.7 L1405.0 590.1 L1404.5 589.7 L1403.9 589.7 L1403.4 589.8 L1402.8 590.0 L1402.3 590.9 L1401.8 590.6 L1401.2 590.4 L1400.7 590.5 L1400.2 589.7 L1399.6 590.7 L1399.1 590.3 L1398.5 590.1 L1398.0 590.8 L1397.5 590.2 L1396.9 590.0 L1396.4 590.7 L1395.8 589.8 L1395.3 590.3 L1394.8 590.4 L1394.2 589.9 L1393.7 590.4 L1393.1 589.7 L1392.6 589.9 L1392.1 590.2 L1391.5 590.2 L1391.0 590.1 L1390.4 590.0 L1389.9 589.9 L1389.4 589.9 L1388.8 590.4 L1388.3 589.8 L1387.8 589.7 L1387.2 590.0 L1386.7 590.5 L1386.1 589.9 L1385.6 589.7 L1385.1 590.0 L1384.5 590.2 L1384.0 589.9 L1383.4 589.7 L1382.9 589.8 L1382.4 589.7 L1381.8 589.8 L1381.3 590.2 L1380.7 590.0 L1380.2 589.7 L1379.7 589.7 L1379.1 590.1 L1378.6 589.9 L1378.0 589.8 L1377.5 590.4 L1377.0 590.3 L1376.4 589.8 L1375.9 590.2 L1375.3 590.2 L1374.8 590.3 L1374.3 589.8 L1373.7 589.7 L1373.2 590.2 L1372.7 590.0 L1372.1 589.8 L1371.6 589.8 L1371.0 590.0 L1370.5 590.1 L1370.0 589.8 L1369.4 590.0 L1368.9 589.8 L1368.3 590.0 L1367.8 589.8 L1367.3 589.7 L1366.7 590.0 L1366.2 589.9 L1365.6 590.0 L1365.1 590.0 L1364.6 589.7 L1364.0 590.1 L1363.5 590.0 L1362.9 589.9 L1362.4 589.8 L1361.9 590.1 L1361.3 589.7 L1360.8 589.8 L1360.2 589.7 L1359.7 589.8 L1359.2 589.8 L1358.6 589.8 L1358.1 589.9 L1357.6 589.9 L1357.0 590.0 L1356.5 589.7 L1355.9 589.8 L1355.4 589.8 L1354.9 589.8 L1354.3 590.0 L1353.8 589.7 L1353.2 589.8 L1352.7 589.8 L1352.2 589.7 L1351.6 589.9 L1351.1 589.7 L1350.5 589.7 L1350.0 589.9 L1349.5 589.9 L1348.9 589.8 L1348.4 589.7 L1347.8 589.8 L1347.3 589.9 L1346.8 589.9 L1346.2 589.8 L1345.7 589.9 L1345.2 589.8 L1344.6 589.8 L1344.1 589.7 L1343.5 589.7 L1343.0 589.7 L1342.5 589.9 L1341.9 589.7 L1341.4 589.7 L1340.8 589.7 L1340.3 589.9 L1339.8 589.8 L1339.2 589.7 L1338.7 589.8 L1338.1 589.9 L1337.6 589.8 L1337.1 589.9 L1336.5 589.8 L1336.0 589.9 L1335.4 589.8 L1334.9 589.7 L1334.4 589.7 L1333.8 589.7 L1333.3 589.8 L1332.7 589.7 L1332.2 589.8 L1331.7 589.8 L1331.1 589.7 L1330.6 589.8 L1330.1 589.8 L1329.5 589.9 L1329.0 589.7 L1328.4 589.9 L1327.9 589.7 L1327.4 589.9 L1326.8 589.8 L1326.3 589.8 L1325.7 589.9 L1325.2 589.9 L1324.7 589.8 L1324.1 589.7 L1323.6 589.7 L1323.0 589.7 L1322.5 589.8 L1322.0 589.9 L1321.4 589.7 L1320.9 589.9 L1320.3 589.8 L1319.8 589.8 L1319.3 589.9 L1318.7 589.9 L1318.2 589.8 L1317.6 589.8 L1317.1 589.7 L1316.6 589.7 L1316.0 589.8 L1315.5 589.8 L1315.0 589.7 L1314.4 589.8 L1313.9 589.7 L1313.3 589.7 L1312.8 589.7 L1312.3 589.7 L1311.7 589.9 L1311.2 589.7 L1310.6 589.8 L1310.1 589.7 L1309.6 589.8 L1309.0 589.7 L1308.5 589.9 L1307.9 589.8 L1307.4 589.8 L1306.9 589.9 L1306.3 589.7 L1305.8 589.8 L1305.2 589.7 L1304.7 589.7 L1304.2 589.8 L1303.6 589.9 L1303.1 589.9 L1302.5 589.7 L1302.0 589.9 L1301.5 589.8 L1300.9 589.8 L1300.4 589.8 L1299.9 589.9 L1299.3 589.7 L1298.8 589.9 L1298.2 589.9 L1297.7 589.8 L1297.2 589.8 L1296.6 589.7 L1296.1 589.9 L1295.5 589.8 L1295.0 589.7 L1294.5 589.8 L1293.9 589.8 L1293.4 589.8 L1292.8 589.8 L1292.3 589.9 L1291.8 589.9 L1291.2 589.7 L1290.7 589.9 L1290.1 589.7 L1289.6 589.8 L1289.1 589.7 L1288.5 589.8 L1288.0 589.7 L1287.5 589.8 L1286.9 589.9 L1286.4 589.8 L1285.8 589.9 L1285.3 589.7 L1284.8 589.7 L1284.2 589.8 L1283.7 589.8 L1283.1 589.8 L1282.6 589.7 L1282.1 589.9 L1281.5 589.8 L1281.0 589.9 L1280.4 589.9 L1279.9 589.8 L1279.4 589.8 L1278.8 589.8 L1278.3 589.8 L1277.7 589.8 L1277.2 589.7 L1276.7 589.8 L1276.1 589.8 L1275.6 589.8 L1275.0 589.8 L1274.5 589.7 L1274.0 589.7 L1273.4 589.8 L1272.9 589.8 L1272.4 589.8 L1271.8 589.8 L1271.3 589.8 L1270.7 589.8 L1270.2 589.9 L1269.7 589.7 L1269.1 589.9 L1268.6 589.8 L1268.0 589.7 L1267.5 589.8 L1267.0 589.8 L1266.4 589.7 L1265.9 589.8 L1265.3 589.8 L1264.8 589.9 L1264.3 589.7 L1263.7 589.7 L1263.2 589.8 L1262.6 589.7 L1262.1 589.7 L1261.6 589.8 L1261.0 589.8 L1260.5 589.7 L1259.9 589.9 L1259.4 589.8 L1258.9 589.8 L1258.3 589.7 L1257.8 589.9 L1257.3 589.7 L1256.7 589.7 L1256.2 589.8 L1255.6 589.9 L1255.1 589.9 L1254.6 589.8 L1254.0 589.8 L1253.5 589.8 L1252.9 589.7 L1252.4 589.8 L1251.9 589.8 L1251.3 589.9 L1250.8 589.9 L1250.2 589.9 L1249.7 589.7 L1249.2 589.9 L1248.6 589.8 L1248.1 589.7 L1247.5 589.8 L1247.0 589.8 L1246.5 589.9 L1245.9 589.8 L1245.4 589.7 L1244.8 589.7 L1244.3 589.8 L1243.8 589.9 L1243.2 589.8 L1242.7 589.7 L1242.2 589.8 L1241.6 589.7 L1241.1 589.8 L1240.5 589.9 L1240.0 589.7 L1239.5 589.7 L1238.9 589.9 L1238.4 589.9 L1237.8 589.9 L1237.3 589.8 L1236.8 589.8 L1236.2 589.7 L1235.7 589.8 L1235.1 589.9 L1234.6 589.9 L1234.1 589.9 L1233.5 589.9 L1233.0 589.7 L1232.4 589.7 L1231.9 589.9 L1231.4 589.8 L1230.8 589.9 L1230.3 589.7 L1229.8 589.8 L1229.2 589.7 L1228.7 589.9 L1228.1 589.8 L1227.6 589.7 L1227.1 589.7 L1226.5 589.8 L1226.0 589.9 L1225.4 589.8 L1224.9 589.8 L1224.4 589.7 L1223.8 589.7 L1223.3 589.9 L1222.7 589.8 L1222.2 589.8 L1221.7 589.7 L1221.1 589.7 L1220.6 589.8 L1220.0 589.9 L1219.5 589.9 L1219.0 589.9 L1218.4 589.8 L1217.9 589.7 L1217.3 589.9 L1216.8 589.8 L1216.3 589.7 L1215.7 589.8 L1215.2 589.7 L1214.7 589.8 L1214.1 589.9 L1213.6 589.7 L1213.0 589.7 L1212.5 589.8 L1212.0 589.8 L1211.4 589.7 L1210.9 589.7 L1210.3 589.7 L1209.8 589.8 L1209.3 589.7 L1208.7 589.8 L1208.2 589.8 L1207.6 589.9 L1207.1 589.9 L1206.6 589.7 L1206.0 589.9 L1205.5 589.9 L1204.9 589.9 L1204.4 589.8 L1203.9 589.7 L1203.3 589.8 L1202.8 589.8 L1202.2 589.7 L1201.7 589.9 L1201.2 589.7 L1200.6 589.7 L1200.1 589.7 L1199.6 589.8 L1199.0 589.8 L1198.5 589.7 L1197.9 589.7 L1197.4 589.8 L1196.9 589.8 L1196.3 589.7 L1195.8 589.7 L1195.2 589.9 L1194.7 589.9 L1194.2 589.7 L1193.6 589.7 L1193.1 589.7 L1192.5 589.8 L1192.0 589.8 L1191.5 589.9 L1190.9 589.9 L1190.4 589.7 L1189.8 589.8 L1189.3 589.7 L1188.8 589.9 L1188.2 589.9 L1187.7 589.7 L1187.1 589.7 L1186.6 589.8 L1186.1 589.9 L1185.5 589.7 L1185.0 589.8 L1184.5 589.7 L1183.9 589.7 L1183.4 589.9 L1182.8 589.7 L1182.3 589.7 L1181.8 589.8 L1181.2 589.9 L1180.7 589.8 L1180.1 589.7 L1179.6 589.8 L1179.1 589.8 L1178.5 589.8 L1178.0 589.8 L1177.4 589.8 L1176.9 589.8 L1176.4 589.7 L1175.8 589.7 L1175.3 589.8 L1174.7 589.9 L1174.2 589.8 L1173.7 589.7 L1173.1 589.8 L1172.6 589.7 L1172.1 589.8 L1171.5 589.7 L1171.0 589.8 L1170.4 589.9 L1169.9 589.9 L1169.4 589.7 L1168.8 589.8 L1168.3 589.7 L1167.7 589.8 L1167.2 589.7 L1166.7 589.8 L1166.1 589.8 L1165.6 589.7 L1165.0 589.8 L1164.5 589.7 L1164.0 589.9 L1163.4 589.8 L1162.9 589.9 L1162.3 589.7 L1161.8 589.8 L1161.3 589.7 L1160.7 589.8 L1160.2 589.9 L1159.6 589.8 L1159.1 589.8 L1158.6 589.9 L1158.0 589.7 L1157.5 589.7 L1157.0 589.9 L1156.4 589.7 L1155.9 589.9 L1155.3 589.7 L1154.8 589.9 L1154.3 589.7 L1153.7 589.7 L1153.2 589.8 L1152.6 589.7 L1152.1 589.8 L1151.6 589.7 L1151.0 589.8 L1150.5 589.8 L1149.9 589.8 L1149.4 589.7 L1148.9 589.8 L1148.3 589.8 L1147.8 589.7 L1147.2 589.9 L1146.7 589.7 L1146.2 589.8 L1145.6 589.8 L1145.1 589.7 L1144.5 589.7 L1144.0 589.7 L1143.5 589.8 L1142.9 589.8 L1142.4 589.7 L1141.9 589.7 L1141.3 589.9 L1140.8 589.8 L1140.2 589.9 L1139.7 589.7 L1139.2 589.8 L1138.6 589.7 L1138.1 589.8 L1137.5 589.9 L1137.0 589.8 L1136.5 589.8 L1135.9 589.8 L1135.4 589.9 L1134.8 589.7 L1134.3 589.8 L1133.8 589.9 L1133.2 589.7 L1132.7 589.9 L1132.1 589.9 L1131.6 589.7 L1131.1 589.7 L1130.5 589.8 L1130.0 589.8 L1129.5 589.7 L1128.9 589.7 L1128.4 589.8 L1127.8 589.7 L1127.3 589.8 L1126.8 589.9 L1126.2 589.8 L1125.7 589.9 L1125.1 589.8 L1124.6 589.9 L1124.1 589.7 L1123.5 589.9 L1123.0 589.7 L1122.4 589.9 L1121.9 589.7 L1121.4 589.7 L1120.8 589.7 L1120.3 589.7 L1119.7 589.8 L1119.2 589.7 L1118.7 589.8 L1118.1 589.7 L1117.6 589.9 L1117.0 589.8 L1116.5 589.7 L1116.0 589.8 L1115.4 590.0 L1114.9 589.8 L1114.4 589.8 L1113.8 589.9 L1113.3 589.8 L1112.7 589.7 L1112.2 589.7 L1111.7 589.8 L1111.1 589.9 L1110.6 589.8 L1110.0 589.7 L1109.5 590.0 L1109.0 590.0 L1108.4 590.1 L1107.9 589.8 L1107.3 590.0 L1106.8 589.8 L1106.3 589.7 L1105.7 589.7 L1105.2 590.2 L1104.6 590.0 L1104.1 589.8 L1103.6 589.8 L1103.0 590.0 L1102.5 590.1 L1101.9 590.1 L1101.4 590.2 L1100.9 589.8 L1100.3 589.9 L1099.8 590.2 L1099.3 589.7 L1098.7 589.8 L1098.2 589.9 L1097.6 589.8 L1097.1 589.7 L1096.6 589.8 L1096.0 589.9 L1095.5 590.4 L1094.9 589.7 L1094.4 589.8 L1093.9 589.7 L1093.3 589.9 L1092.8 589.8 L1092.2 589.7 L1091.7 590.0 L1091.2 589.7 L1090.6 590.5 L1090.1 590.1 L1089.5 590.5 L1089.0 589.7 L1088.5 590.6 L1087.9 590.1 L1087.4 590.0 L1086.8 590.1 L1086.3 590.4 L1085.8 589.7 L1085.2 590.1 L1084.7 590.1 L1084.2 590.5 L1083.6 590.6 L1083.1 590.4 L1082.5 590.1 L1082.0 589.9 L1081.5 590.1 L1080.9 589.8 L1080.4 590.6 L1079.8 590.3 L1079.3 589.7Z" fill="#e862b4" stroke="#e862b4" stroke-width="1" stroke-linejoin="round"/><circle cx="1422.8" cy="578.0" r="1.0" fill="#e862b4" opacity="0.55"/><circle cx="1182.2" cy="589.6" r="1.0" fill="#e862b4" opacity="0.55"/><circle cx="1094.3" cy="590.0" r="1.0" fill="#e862b4" opacity="0.55"/><circle cx="1422.5" cy="579.3" r="1.0" fill="#e862b4" opacity="0.55"/><circle cx="1306.0" cy="586.0" r="1.0" fill="#e862b4" opacity="0.55"/><circle cx="1418.9" cy="597.3" r="1.0" fill="#e862b4" opacity="0.55"/><circle cx="1287.6" cy="585.5" r="1.0" fill="#e862b4" opacity="0.55"/><circle cx="1379.8" cy="590.4" r="1.0" fill="#e862b4" opacity="0.55"/><circle cx="1409.0" cy="581.6" r="1.0" fill="#e862b4" opacity="0.55"/><circle cx="1379.2" cy="582.3" r="1.0" fill="#e862b4" opacity="0.55"/><circle cx="1375.6" cy="583.0" r="1.0" fill="#e862b4" opacity="0.55"/><circle cx="1255.0" cy="585.9" r="1.0" fill="#e862b4" opacity="0.55"/><circle cx="1418.1" cy="599.8" r="1.0" fill="#e862b4" opacity="0.55"/><circle cx="1084.9" cy="582.7" r="1.0" fill="#e862b4" opacity="0.55"/><circle cx="1413.4" cy="590.5" r="1.0" fill="#e862b4" opacity="0.55"/><circle cx="1406.7" cy="593.5" r="1.0" fill="#e862b4" opacity="0.55"/><circle cx="1101.7" cy="589.4" r="1.0" fill="#e862b4" opacity="0.55"/><circle cx="1107.0" cy="589.2" r="1.0" fill="#e862b4" opacity="0.55"/><circle cx="1097.6" cy="585.9" r="1.0" fill="#e862b4" opacity="0.55"/><circle cx="1406.3" cy="580.2" r="1.0" fill="#e862b4" opacity="0.55"/><circle cx="1401.4" cy="579.3" r="1.0" fill="#e862b4" opacity="0.55"/><circle cx="1417.5" cy="596.0" r="1.0" fill="#e862b4" opacity="0.55"/><circle cx="1421.6" cy="585.0" r="1.0" fill="#e862b4" opacity="0.55"/><circle cx="1285.5" cy="589.2" r="1.0" fill="#e862b4" opacity="0.55"/><circle cx="1384.7" cy="589.7" r="1.0" fill="#e862b4" opacity="0.55"/><circle cx="1410.6" cy="595.5" r="1.0" fill="#e862b4" opacity="0.55"/><circle cx="1397.0" cy="590.4" r="1.0" fill="#e862b4" opacity="0.55"/><circle cx="1136.5" cy="585.8" r="1.0" fill="#e862b4" opacity="0.55"/><circle cx="1401.3" cy="584.8" r="1.0" fill="#e862b4" opacity="0.55"/><circle cx="1165.5" cy="585.7" r="1.0" fill="#e862b4" opacity="0.55"/><circle cx="1280.2" cy="585.8" r="1.0" fill="#e862b4" opacity="0.55"/><circle cx="1096.5" cy="589.4" r="1.0" fill="#e862b4" opacity="0.55"/><circle cx="1411.7" cy="597.7" r="1.0" fill="#e862b4" opacity="0.55"/><circle cx="1129.5" cy="589.2" r="1.0" fill="#e862b4" opacity="0.55"/><circle cx="1403.6" cy="595.1" r="1.0" fill="#e862b4" opacity="0.55"/><circle cx="1265.4" cy="589.4" r="1.0" fill="#e862b4" opacity="0.55"/><circle cx="1425.0" cy="594.2" r="1.0" fill="#e862b4" opacity="0.55"/><circle cx="1386.7" cy="585.9" r="1.0" fill="#e862b4" opacity="0.55"/><circle cx="1382.5" cy="589.0" r="1.0" fill="#e862b4" opacity="0.55"/><circle cx="1421.7" cy="580.4" r="1.0" fill="#e862b4" opacity="0.55"/><circle cx="1366.0" cy="585.7" r="1.0" fill="#e862b4" opacity="0.55"/><circle cx="1245.5" cy="585.7" r="1.0" fill="#e862b4" opacity="0.55"/><circle cx="1407.3" cy="577.6" r="1.0" fill="#e862b4" opacity="0.55"/><circle cx="1420.6" cy="600.6" r="1.0" fill="#e862b4" opacity="0.55"/><circle cx="1400.9" cy="593.3" r="1.0" fill="#e862b4" opacity="0.55"/><circle cx="1121.7" cy="585.3" r="1.0" fill="#e862b4" opacity="0.55"/><circle cx="1095.0" cy="583.7" r="1.0" fill="#e862b4" opacity="0.55"/><circle cx="1390.6" cy="589.1" r="1.0" fill="#e862b4" opacity="0.55"/><circle cx="1423.4" cy="577.4" r="1.0" fill="#e862b4" opacity="0.55"/><circle cx="1384.5" cy="593.6" r="1.0" fill="#e862b4" opacity="0.55"/><circle cx="1421.7" cy="583.6" r="1.0" fill="#e862b4" opacity="0.55"/><circle cx="1115.7" cy="590.8" r="1.0" fill="#e862b4" opacity="0.55"/><circle cx="1085.4" cy="589.4" r="1.0" fill="#e862b4" opacity="0.55"/><circle cx="1080.9" cy="579.6" r="1.0" fill="#e862b4" opacity="0.55"/><circle cx="1271.8" cy="589.6" r="1.0" fill="#e862b4" opacity="0.55"/><circle cx="1107.4" cy="585.9" r="1.0" fill="#e862b4" opacity="0.55"/><circle cx="1156.8" cy="589.3" r="1.0" fill="#e862b4" opacity="0.55"/><circle cx="1402.9" cy="592.5" r="1.0" fill="#e862b4" opacity="0.55"/><circle cx="1400.1" cy="581.7" r="1.0" fill="#e862b4" opacity="0.55"/><circle cx="1419.2" cy="583.1" r="1.0" fill="#e862b4" opacity="0.55"/><circle cx="1083.0" cy="583.2" r="1.0" fill="#e862b4" opacity="0.55"/><circle cx="1270.6" cy="590.2" r="1.0" fill="#e862b4" opacity="0.55"/><circle cx="1417.3" cy="591.9" r="1.0" fill="#e862b4" opacity="0.55"/><circle cx="1265.0" cy="589.0" r="1.0" fill="#e862b4" opacity="0.55"/><circle cx="1404.3" cy="595.8" r="1.0" fill="#e862b4" opacity="0.55"/><circle cx="1396.4" cy="579.6" r="1.0" fill="#e862b4" opacity="0.55"/><circle cx="1166.4" cy="589.1" r="1.0" fill="#e862b4" opacity="0.55"/><circle cx="1423.9" cy="585.8" r="1.0" fill="#e862b4" opacity="0.55"/><circle cx="1168.0" cy="584.9" r="1.0" fill="#e862b4" opacity="0.55"/><circle cx="1258.4" cy="589.7" r="1.0" fill="#e862b4" opacity="0.55"/><circle cx="1402.6" cy="581.8" r="1.0" fill="#e862b4" opacity="0.55"/><circle cx="1309.9" cy="589.8" r="1.0" fill="#e862b4" opacity="0.55"/><circle cx="1417.2" cy="589.5" r="1.0" fill="#e862b4" opacity="0.55"/><circle cx="1220.7" cy="585.0" r="1.0" fill="#e862b4" opacity="0.55"/><circle cx="1139.8" cy="585.9" r="1.0" fill="#e862b4" opacity="0.55"/><circle cx="1228.3" cy="585.1" r="1.0" fill="#e862b4" opacity="0.55"/><circle cx="1134.4" cy="585.2" r="1.0" fill="#e862b4" opacity="0.55"/><circle cx="1404.8" cy="592.6" r="1.0" fill="#e862b4" opacity="0.55"/><circle cx="1095.7" cy="582.2" r="1.0" fill="#e862b4" opacity="0.55"/><circle cx="1398.4" cy="591.0" r="1.0" fill="#e862b4" opacity="0.55"/><circle cx="1242.2" cy="589.3" r="1.0" fill="#e862b4" opacity="0.55"/><circle cx="1413.6" cy="581.3" r="1.0" fill="#e862b4" opacity="0.55"/><circle cx="1401.8" cy="578.8" r="1.0" fill="#e862b4" opacity="0.55"/><circle cx="1403.5" cy="581.2" r="1.0" fill="#e862b4" opacity="0.55"/><circle cx="1223.6" cy="585.9" r="1.0" fill="#e862b4" opacity="0.55"/><circle cx="1082.2" cy="594.9" r="1.0" fill="#e862b4" opacity="0.55"/><circle cx="1389.7" cy="589.3" r="1.0" fill="#e862b4" opacity="0.55"/><circle cx="1417.3" cy="593.3" r="1.0" fill="#e862b4" opacity="0.55"/><circle cx="1382.4" cy="592.9" r="1.0" fill="#e862b4" opacity="0.55"/><circle cx="1419.4" cy="591.1" r="1.0" fill="#e862b4" opacity="0.55"/><circle cx="1223.9" cy="589.3" r="1.0" fill="#e862b4" opacity="0.55"/><circle cx="1088.0" cy="591.3" r="1.0" fill="#e862b4" opacity="0.55"/><circle cx="1410.6" cy="598.3" r="1.0" fill="#e862b4" opacity="0.55"/><circle cx="1404.9" cy="579.5" r="1.0" fill="#e862b4" opacity="0.55"/><circle cx="1357.1" cy="590.6" r="1.0" fill="#e862b4" opacity="0.55"/><circle cx="1414.5" cy="583.1" r="1.0" fill="#e862b4" opacity="0.55"/><circle cx="1140.8" cy="589.8" r="1.0" fill="#e862b4" opacity="0.55"/><circle cx="1408.1" cy="596.5" r="1.0" fill="#e862b4" opacity="0.55"/><circle cx="1414.2" cy="596.8" r="1.0" fill="#e862b4" opacity="0.55"/><circle cx="1255.5" cy="585.6" r="1.0" fill="#e862b4" opacity="0.55"/><circle cx="1277.1" cy="589.6" r="1.0" fill="#e862b4" opacity="0.55"/><circle cx="1421.7" cy="594.8" r="1.0" fill="#e862b4" opacity="0.55"/><circle cx="1356.8" cy="590.6" r="1.0" fill="#e862b4" opacity="0.55"/><circle cx="1094.9" cy="590.7" r="1.0" fill="#e862b4" opacity="0.55"/><circle cx="1092.6" cy="591.5" r="1.0" fill="#e862b4" opacity="0.55"/><circle cx="1211.5" cy="585.4" r="1.0" fill="#e862b4" opacity="0.55"/><circle cx="1203.2" cy="590.2" r="1.0" fill="#e862b4" opacity="0.55"/><circle cx="1108.4" cy="589.7" r="1.0" fill="#e862b4" opacity="0.55"/><circle cx="1276.8" cy="590.1" r="1.0" fill="#e862b4" opacity="0.55"/><circle cx="1424.9" cy="594.2" r="1.0" fill="#e862b4" opacity="0.55"/><circle cx="1415.1" cy="585.2" r="1.0" fill="#e862b4" opacity="0.55"/><circle cx="1415.9" cy="595.4" r="1.0" fill="#e862b4" opacity="0.55"/><circle cx="1106.0" cy="585.7" r="1.0" fill="#e862b4" opacity="0.55"/><circle cx="1084.6" cy="581.9" r="1.0" fill="#e862b4" opacity="0.55"/><circle cx="1358.8" cy="589.4" r="1.0" fill="#e862b4" opacity="0.55"/><circle cx="1159.2" cy="584.8" r="1.0" fill="#e862b4" opacity="0.55"/><circle cx="1414.9" cy="582.3" r="1.0" fill="#e862b4" opacity="0.55"/><circle cx="1199.5" cy="589.3" r="1.0" fill="#e862b4" opacity="0.55"/><circle cx="1356.9" cy="584.7" r="1.0" fill="#e862b4" opacity="0.55"/><circle cx="1232.2" cy="585.1" r="1.0" fill="#e862b4" opacity="0.55"/><circle cx="1258.0" cy="586.0" r="1.0" fill="#e862b4" opacity="0.55"/><circle cx="1377.6" cy="584.5" r="1.0" fill="#e862b4" opacity="0.55"/><circle cx="1192.7" cy="585.3" r="1.0" fill="#e862b4" opacity="0.55"/><circle cx="1408.8" cy="582.9" r="1.0" fill="#e862b4" opacity="0.55"/><circle cx="1303.5" cy="584.8" r="1.0" fill="#e862b4" opacity="0.55"/><circle cx="1082.7" cy="582.8" r="1.0" fill="#e862b4" opacity="0.55"/><circle cx="1401.6" cy="592.7" r="1.0" fill="#e862b4" opacity="0.55"/><circle cx="1278.0" cy="590.0" r="1.0" fill="#e862b4" opacity="0.55"/><circle cx="1419.4" cy="590.5" r="1.0" fill="#e862b4" opacity="0.55"/><circle cx="1082.7" cy="591.0" r="1.0" fill="#e862b4" opacity="0.55"/><circle cx="1173.2" cy="589.6" r="1.0" fill="#e862b4" opacity="0.55"/><circle cx="1255.5" cy="589.3" r="1.0" fill="#e862b4" opacity="0.55"/><circle cx="1083.1" cy="592.6" r="1.0" fill="#e862b4" opacity="0.55"/><circle cx="1379.1" cy="591.1" r="1.0" fill="#e862b4" opacity="0.55"/><circle cx="1395.8" cy="591.6" r="1.0" fill="#e862b4" opacity="0.55"/><circle cx="1313.9" cy="589.0" r="1.0" fill="#e862b4" opacity="0.55"/><circle cx="1093.7" cy="593.1" r="1.0" fill="#e862b4" opacity="0.55"/><circle cx="1216.5" cy="585.7" r="1.0" fill="#e862b4" opacity="0.55"/><circle cx="1414.6" cy="577.9" r="1.0" fill="#e862b4" opacity="0.55"/><circle cx="1103.6" cy="590.0" r="1.0" fill="#e862b4" opacity="0.55"/><path d="M1079.8 583.0 L1079.8 593.0" stroke="#e862b4" stroke-width="3.0" fill="none" stroke-linecap="round" stroke-linejoin="round" opacity="1"/></svg></div>
</body></html>
